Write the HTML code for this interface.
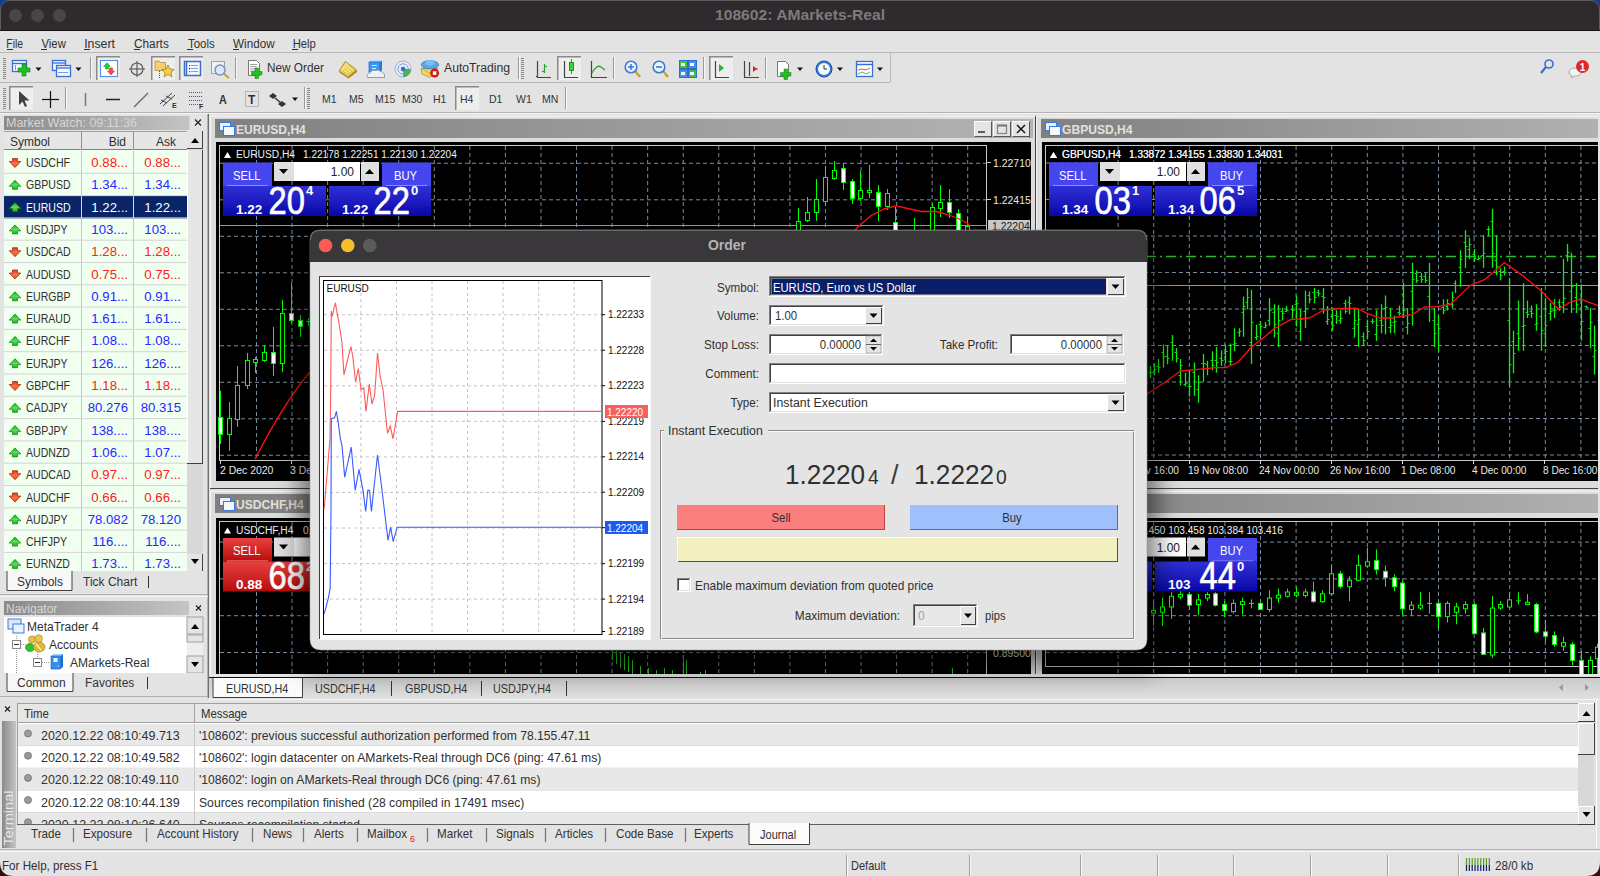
<!DOCTYPE html><html><head><meta charset="utf-8"><style>html,body{margin:0;padding:0;overflow:hidden;background:#e3e3e3}svg{display:block}</style></head><body><svg width="1600" height="876" viewBox="0 0 1600 876" shape-rendering="auto"><defs>
<linearGradient id="gArrD" x1="0" x2="0" y1="0" y2="1"><stop offset="0" stop-color="#e83818"/><stop offset="0.5" stop-color="#ff7040"/><stop offset="1" stop-color="#e85020"/></linearGradient><linearGradient id="gArrU" x1="0" x2="0" y1="0" y2="1"><stop offset="0" stop-color="#20a020"/><stop offset="0.5" stop-color="#58e058"/><stop offset="1" stop-color="#20b020"/></linearGradient>
<filter id="fShadow" x="-10%" y="-10%" width="120%" height="130%"><feGaussianBlur stdDeviation="12"/></filter>
<linearGradient id="gTitle" x1="0" x2="1" y1="0" y2="0"><stop offset="0" stop-color="#808080"/><stop offset="1" stop-color="#b4b4b4"/></linearGradient>
<linearGradient id="gPanelHdr" x1="0" x2="1" y1="0" y2="0"><stop offset="0" stop-color="#8a8a8a"/><stop offset="1" stop-color="#c4c4c4"/></linearGradient>
<linearGradient id="gBlue" x1="0" x2="0" y1="0" y2="1"><stop offset="0" stop-color="#4848f0"/><stop offset="1" stop-color="#1010b8"/></linearGradient>
<linearGradient id="gBlue2" x1="0" x2="0" y1="0" y2="1"><stop offset="0" stop-color="#3030d8"/><stop offset="1" stop-color="#0808a8"/></linearGradient>
<linearGradient id="gRed" x1="0" x2="0" y1="0" y2="1"><stop offset="0" stop-color="#e84040"/><stop offset="1" stop-color="#b80c0c"/></linearGradient>
<linearGradient id="gTabV" x1="0" x2="0" y1="0" y2="1"><stop offset="0" stop-color="#cacaca"/><stop offset="1" stop-color="#e0e0e0"/></linearGradient>
<linearGradient id="gTab" x1="0" x2="1" y1="0" y2="0"><stop offset="0" stop-color="#e4e4e4"/><stop offset="0.5" stop-color="#d0d0d0"/><stop offset="1" stop-color="#e4e4e4"/></linearGradient>
</defs><rect x="0" y="0" width="1600" height="876" fill="#e3e3e3" />
<path d="M0,31 L0,10 Q0,0 10,0 L1590,0 Q1600,0 1600,10 L1600,31 Z" fill="#2e2a2d" />
<path d="M0,0 H12 Q1,1 0,12 Z" fill="#1a3a8a" />
<path d="M1600,0 H1588 Q1599,1 1600,12 Z" fill="#1a3a8a" />
<path d="M0.5,31 L0.5,10 Q0.5,0.5 10,0.5 L1590,0.5 Q1599.5,0.5 1599.5,10 L1599.5,31" fill="none" stroke="#5e5a5c" stroke-width="1"/>
<line x1="0" y1="30.5" x2="1600" y2="30.5" stroke="#121212" stroke-width="1" />
<circle cx="15.5" cy="15.5" r="6.5" fill="#4a4648"/>
<circle cx="37.5" cy="15.5" r="6.5" fill="#4a4648"/>
<circle cx="59.5" cy="15.5" r="6.5" fill="#4a4648"/>
<text x="800" y="20" font-size="15" fill="#7c7a7b" font-family="Liberation Sans" font-weight="bold" text-anchor="middle" textLength="170" lengthAdjust="spacingAndGlyphs" >108602: AMarkets-Real</text>
<rect x="0" y="31" width="1600" height="21" fill="#e3e3e3" />
<line x1="7" y1="49.5" x2="13" y2="49.5" stroke="#303030" stroke-width="1" />
<line x1="41" y1="49.5" x2="47" y2="49.5" stroke="#303030" stroke-width="1" />
<line x1="84" y1="49.5" x2="90" y2="49.5" stroke="#303030" stroke-width="1" />
<line x1="134" y1="49.5" x2="140" y2="49.5" stroke="#303030" stroke-width="1" />
<line x1="187" y1="49.5" x2="193" y2="49.5" stroke="#303030" stroke-width="1" />
<line x1="233" y1="49.5" x2="239" y2="49.5" stroke="#303030" stroke-width="1" />
<line x1="292" y1="49.5" x2="298" y2="49.5" stroke="#303030" stroke-width="1" />
<line x1="0" y1="52.5" x2="1600" y2="52.5" stroke="#b8b8b8" stroke-width="1" />
<rect x="0" y="53" width="1600" height="60" fill="#e3e3e3" />
<line x1="0" y1="82.5" x2="890" y2="82.5" stroke="#b8b8b8" stroke-width="1" />
<line x1="890.5" y1="53" x2="890.5" y2="82" stroke="#b8b8b8" stroke-width="1" />
<line x1="0" y1="112.5" x2="1600" y2="112.5" stroke="#b4b4b4" stroke-width="1" />
<line x1="0" y1="113.5" x2="1600" y2="113.5" stroke="#f4f4f4" stroke-width="1" />
<line x1="3" y1="58.5" x2="6" y2="58.5" stroke="#888" stroke-width="1" />
<line x1="3" y1="60.5" x2="6" y2="60.5" stroke="#888" stroke-width="1" />
<line x1="3" y1="62.5" x2="6" y2="62.5" stroke="#888" stroke-width="1" />
<line x1="3" y1="64.5" x2="6" y2="64.5" stroke="#888" stroke-width="1" />
<line x1="3" y1="66.5" x2="6" y2="66.5" stroke="#888" stroke-width="1" />
<line x1="3" y1="68.5" x2="6" y2="68.5" stroke="#888" stroke-width="1" />
<line x1="3" y1="70.5" x2="6" y2="70.5" stroke="#888" stroke-width="1" />
<line x1="3" y1="72.5" x2="6" y2="72.5" stroke="#888" stroke-width="1" />
<line x1="3" y1="74.5" x2="6" y2="74.5" stroke="#888" stroke-width="1" />
<line x1="3" y1="76.5" x2="6" y2="76.5" stroke="#888" stroke-width="1" />
<line x1="3" y1="78.5" x2="6" y2="78.5" stroke="#888" stroke-width="1" />
<line x1="3" y1="88.5" x2="6" y2="88.5" stroke="#888" stroke-width="1" />
<line x1="3" y1="90.5" x2="6" y2="90.5" stroke="#888" stroke-width="1" />
<line x1="3" y1="92.5" x2="6" y2="92.5" stroke="#888" stroke-width="1" />
<line x1="3" y1="94.5" x2="6" y2="94.5" stroke="#888" stroke-width="1" />
<line x1="3" y1="96.5" x2="6" y2="96.5" stroke="#888" stroke-width="1" />
<line x1="3" y1="98.5" x2="6" y2="98.5" stroke="#888" stroke-width="1" />
<line x1="3" y1="100.5" x2="6" y2="100.5" stroke="#888" stroke-width="1" />
<line x1="3" y1="102.5" x2="6" y2="102.5" stroke="#888" stroke-width="1" />
<line x1="3" y1="104.5" x2="6" y2="104.5" stroke="#888" stroke-width="1" />
<line x1="3" y1="106.5" x2="6" y2="106.5" stroke="#888" stroke-width="1" />
<line x1="3" y1="108.5" x2="6" y2="108.5" stroke="#888" stroke-width="1" />
<line x1="521" y1="58.5" x2="524" y2="58.5" stroke="#888" stroke-width="1" />
<line x1="521" y1="60.5" x2="524" y2="60.5" stroke="#888" stroke-width="1" />
<line x1="521" y1="62.5" x2="524" y2="62.5" stroke="#888" stroke-width="1" />
<line x1="521" y1="64.5" x2="524" y2="64.5" stroke="#888" stroke-width="1" />
<line x1="521" y1="66.5" x2="524" y2="66.5" stroke="#888" stroke-width="1" />
<line x1="521" y1="68.5" x2="524" y2="68.5" stroke="#888" stroke-width="1" />
<line x1="521" y1="70.5" x2="524" y2="70.5" stroke="#888" stroke-width="1" />
<line x1="521" y1="72.5" x2="524" y2="72.5" stroke="#888" stroke-width="1" />
<line x1="521" y1="74.5" x2="524" y2="74.5" stroke="#888" stroke-width="1" />
<line x1="521" y1="76.5" x2="524" y2="76.5" stroke="#888" stroke-width="1" />
<line x1="521" y1="78.5" x2="524" y2="78.5" stroke="#888" stroke-width="1" />
<line x1="307" y1="88.5" x2="310" y2="88.5" stroke="#888" stroke-width="1" />
<line x1="307" y1="90.5" x2="310" y2="90.5" stroke="#888" stroke-width="1" />
<line x1="307" y1="92.5" x2="310" y2="92.5" stroke="#888" stroke-width="1" />
<line x1="307" y1="94.5" x2="310" y2="94.5" stroke="#888" stroke-width="1" />
<line x1="307" y1="96.5" x2="310" y2="96.5" stroke="#888" stroke-width="1" />
<line x1="307" y1="98.5" x2="310" y2="98.5" stroke="#888" stroke-width="1" />
<line x1="307" y1="100.5" x2="310" y2="100.5" stroke="#888" stroke-width="1" />
<line x1="307" y1="102.5" x2="310" y2="102.5" stroke="#888" stroke-width="1" />
<line x1="307" y1="104.5" x2="310" y2="104.5" stroke="#888" stroke-width="1" />
<line x1="307" y1="106.5" x2="310" y2="106.5" stroke="#888" stroke-width="1" />
<line x1="307" y1="108.5" x2="310" y2="108.5" stroke="#888" stroke-width="1" />
<line x1="90.5" y1="57" x2="90.5" y2="79" stroke="#9a9a9a" stroke-width="1" />
<line x1="91.5" y1="57" x2="91.5" y2="79" stroke="#f8f8f8" stroke-width="1" />
<line x1="235.5" y1="57" x2="235.5" y2="79" stroke="#9a9a9a" stroke-width="1" />
<line x1="236.5" y1="57" x2="236.5" y2="79" stroke="#f8f8f8" stroke-width="1" />
<line x1="518.5" y1="57" x2="518.5" y2="79" stroke="#9a9a9a" stroke-width="1" />
<line x1="519.5" y1="57" x2="519.5" y2="79" stroke="#f8f8f8" stroke-width="1" />
<line x1="613.5" y1="57" x2="613.5" y2="79" stroke="#9a9a9a" stroke-width="1" />
<line x1="614.5" y1="57" x2="614.5" y2="79" stroke="#f8f8f8" stroke-width="1" />
<line x1="703.5" y1="57" x2="703.5" y2="79" stroke="#9a9a9a" stroke-width="1" />
<line x1="704.5" y1="57" x2="704.5" y2="79" stroke="#f8f8f8" stroke-width="1" />
<line x1="765.5" y1="57" x2="765.5" y2="79" stroke="#9a9a9a" stroke-width="1" />
<line x1="766.5" y1="57" x2="766.5" y2="79" stroke="#f8f8f8" stroke-width="1" />
<line x1="65.5" y1="87" x2="65.5" y2="109" stroke="#9a9a9a" stroke-width="1" />
<line x1="66.5" y1="87" x2="66.5" y2="109" stroke="#f8f8f8" stroke-width="1" />
<line x1="304.5" y1="87" x2="304.5" y2="109" stroke="#9a9a9a" stroke-width="1" />
<line x1="305.5" y1="87" x2="305.5" y2="109" stroke="#f8f8f8" stroke-width="1" />
<line x1="565.5" y1="87" x2="565.5" y2="109" stroke="#9a9a9a" stroke-width="1" />
<line x1="566.5" y1="87" x2="566.5" y2="109" stroke="#f8f8f8" stroke-width="1" />
<rect x="96" y="56" width="24" height="24" fill="#eeeeee" />
<line x1="96" y1="56.75" x2="120" y2="56.75" stroke="#8a8a8a" stroke-width="1.5" />
<line x1="96.75" y1="56" x2="96.75" y2="80" stroke="#8a8a8a" stroke-width="1.5" />
<rect x="151" y="56" width="24" height="24" fill="#eeeeee" />
<line x1="151" y1="56.75" x2="175" y2="56.75" stroke="#8a8a8a" stroke-width="1.5" />
<line x1="151.75" y1="56" x2="151.75" y2="80" stroke="#8a8a8a" stroke-width="1.5" />
<rect x="179" y="56" width="24" height="24" fill="#eeeeee" />
<line x1="179" y1="56.75" x2="203" y2="56.75" stroke="#8a8a8a" stroke-width="1.5" />
<line x1="179.75" y1="56" x2="179.75" y2="80" stroke="#8a8a8a" stroke-width="1.5" />
<rect x="557" y="56" width="24" height="24" fill="#eeeeee" />
<line x1="557" y1="56.75" x2="581" y2="56.75" stroke="#8a8a8a" stroke-width="1.5" />
<line x1="557.75" y1="56" x2="557.75" y2="80" stroke="#8a8a8a" stroke-width="1.5" />
<rect x="709" y="56" width="24" height="24" fill="#eeeeee" />
<line x1="709" y1="56.75" x2="733" y2="56.75" stroke="#8a8a8a" stroke-width="1.5" />
<line x1="709.75" y1="56" x2="709.75" y2="80" stroke="#8a8a8a" stroke-width="1.5" />
<rect x="9" y="86" width="24" height="24" fill="#eeeeee" />
<line x1="9" y1="86.75" x2="33" y2="86.75" stroke="#8a8a8a" stroke-width="1.5" />
<line x1="9.75" y1="86" x2="9.75" y2="110" stroke="#8a8a8a" stroke-width="1.5" />
<rect x="455" y="86" width="24" height="24" fill="#eeeeee" />
<line x1="455" y1="86.75" x2="479" y2="86.75" stroke="#8a8a8a" stroke-width="1.5" />
<line x1="455.75" y1="86" x2="455.75" y2="110" stroke="#8a8a8a" stroke-width="1.5" />
<text x="267" y="72" font-size="12" fill="#303030" font-family="Liberation Sans" textLength="57" lengthAdjust="spacingAndGlyphs" >New Order</text>
<text x="444" y="72" font-size="12" fill="#303030" font-family="Liberation Sans" textLength="66" lengthAdjust="spacingAndGlyphs" >AutoTrading</text>
<text x="322" y="103" font-size="10.5" fill="#333" font-family="Liberation Sans" >M1</text>
<text x="349" y="103" font-size="10.5" fill="#333" font-family="Liberation Sans" >M5</text>
<text x="375" y="103" font-size="10.5" fill="#333" font-family="Liberation Sans" >M15</text>
<text x="402" y="103" font-size="10.5" fill="#333" font-family="Liberation Sans" >M30</text>
<text x="433" y="103" font-size="10.5" fill="#333" font-family="Liberation Sans" >H1</text>
<text x="460" y="103" font-size="10.5" fill="#333" font-family="Liberation Sans" >H4</text>
<text x="489" y="103" font-size="10.5" fill="#333" font-family="Liberation Sans" >D1</text>
<text x="516" y="103" font-size="10.5" fill="#333" font-family="Liberation Sans" >W1</text>
<text x="542" y="103" font-size="10.5" fill="#333" font-family="Liberation Sans" >MN</text>
<text x="6.3" y="48" font-size="12" fill="#303030" font-family="Liberation Sans" textLength="16.8" lengthAdjust="spacingAndGlyphs" >File</text>
<text x="41.5" y="48" font-size="12" fill="#303030" font-family="Liberation Sans" textLength="24.3" lengthAdjust="spacingAndGlyphs" >View</text>
<text x="84.2" y="48" font-size="12" fill="#303030" font-family="Liberation Sans" textLength="30.8" lengthAdjust="spacingAndGlyphs" >Insert</text>
<text x="134" y="48" font-size="12" fill="#303030" font-family="Liberation Sans" textLength="34.8" lengthAdjust="spacingAndGlyphs" >Charts</text>
<text x="188" y="48" font-size="12" fill="#303030" font-family="Liberation Sans" textLength="26.8" lengthAdjust="spacingAndGlyphs" >Tools</text>
<text x="233" y="48" font-size="12" fill="#303030" font-family="Liberation Sans" textLength="41.6" lengthAdjust="spacingAndGlyphs" >Window</text>
<text x="292.7" y="48" font-size="12" fill="#303030" font-family="Liberation Sans" textLength="23.1" lengthAdjust="spacingAndGlyphs" >Help</text>
<rect x="12.5" y="60.5" width="14" height="11" fill="#f4f8ff" stroke="#3a6ed0" stroke-width="1.3" />
<line x1="13" y1="63.5" x2="26" y2="63.5" stroke="#3a6ed0" stroke-width="1.3" />
<line x1="15.5" y1="65" x2="15.5" y2="70" stroke="#7a9ad8" stroke-width="1" />
<path d="M22,64 h4 v4 h4 v4 h-4 v4 h-4 v-4 h-4 v-4 h4 z" fill="#20c020" stroke="#108010" stroke-width="0.6" />
<path d="M35.5,67.5 h6 l-3,3.5 z" fill="#111" />
<rect x="52.5" y="60.5" width="13" height="10" fill="#f4f8ff" stroke="#3a6ed0" stroke-width="1.3" />
<line x1="53" y1="63" x2="65" y2="63" stroke="#3a6ed0" stroke-width="1.3" />
<rect x="56.5" y="65.5" width="14" height="11" fill="#f4f8ff" stroke="#3a6ed0" stroke-width="1.3" />
<line x1="57" y1="68" x2="70" y2="68" stroke="#3a6ed0" stroke-width="1.3" />
<line x1="58" y1="72.5" x2="68" y2="72.5" stroke="#7a9ad8" stroke-width="1" />
<path d="M75.5,67.5 h6 l-3,3.5 z" fill="#111" />
<rect x="100.5" y="60.5" width="17" height="16" fill="#ffffff" stroke="#4a90e8" stroke-width="1.1" />
<path d="M103.5,66.5 l3.5,-3.8 l3.5,3.8 h-2 v2.5 h-3 v-2.5 z" fill="#30c040" stroke="#109020" stroke-width="0.5" />
<path d="M107.5,71 h2 v-3 h3 v3 h2 l-3.5,4 z" fill="#f05040" stroke="#c02010" stroke-width="0.5" />
<circle cx="137" cy="69" r="6" fill="none" stroke="#555" stroke-width="1.1"/>
<line x1="137" y1="61" x2="137" y2="77" stroke="#555" stroke-width="1.1" />
<line x1="129" y1="69" x2="145" y2="69" stroke="#555" stroke-width="1.1" />
<path d="M155,61 h4 l1.5,1.5 h5 v8 h-10.5 z" fill="#f0d070" stroke="#b09030" stroke-width="0.8" />
<path d="M168,65 l2,4 l4.2,0.5 l-3.2,3 l1,4.3 l-4,-2.3 l-4,2.3 l1,-4.3 l-3.2,-3 l4.2,-0.5 z" fill="#f4d040" stroke="#a08020" stroke-width="0.8" />
<line x1="159.5" y1="71" x2="159.5" y2="78" stroke="#555" stroke-width="1" stroke-dasharray="1,1"/>
<rect x="184.5" y="61.5" width="16" height="14" fill="#f4f8ff" stroke="#3a6ed0" stroke-width="1.5" />
<line x1="186.5" y1="62" x2="186.5" y2="75" stroke="#3a6ed0" stroke-width="1.5" />
<rect x="189" y="65" width="1.2" height="1.2" fill="#d02020" />
<line x1="191" y1="65.5" x2="198" y2="65.5" stroke="#7aa0e0" stroke-width="1" />
<rect x="189" y="68" width="1.2" height="1.2" fill="#222" />
<line x1="191" y1="68.5" x2="198" y2="68.5" stroke="#7aa0e0" stroke-width="1" />
<rect x="189" y="71" width="1.2" height="1.2" fill="#d02020" />
<line x1="191" y1="71.5" x2="198" y2="71.5" stroke="#7aa0e0" stroke-width="1" />
<rect x="211.5" y="61.5" width="13" height="12" fill="#f0f0f0" stroke="#9aa0b0" stroke-width="1" />
<circle cx="220" cy="70" r="5" fill="#dde8ff" stroke="#7a90c0" stroke-width="1.5"/>
<line x1="223.5" y1="73.5" x2="229" y2="78" stroke="#c8a040" stroke-width="2.2" />
<path d="M248.5,60.5 h8 l3,3 v12 h-11 z" fill="#ffffff" stroke="#555" stroke-width="0.8" />
<line x1="250" y1="64.5" x2="257" y2="64.5" stroke="#888" stroke-width="0.8" />
<line x1="250" y1="66.7" x2="257" y2="66.7" stroke="#888" stroke-width="0.8" />
<line x1="250" y1="68.9" x2="257" y2="68.9" stroke="#888" stroke-width="0.8" />
<line x1="250" y1="71.1" x2="257" y2="71.1" stroke="#888" stroke-width="0.8" />
<path d="M255,68 h3.5 v3.5 h3.5 v3.5 h-3.5 v3.5 h-3.5 v-3.5 h-3.5 v-3.5 h3.5 z" fill="#20c020" stroke="#108010" stroke-width="0.5" />
<path d="M339,71 L345.4,61.5 L356.6,70.1 L348,77.3 Z" fill="#e8cc50" stroke="#a07818" stroke-width="0.8" />
<path d="M340.5,70 L346,62.8 L354.5,69.5 L348,75 Z" fill="#f4e27a" />
<line x1="342.0" y1="70.5" x2="349.5" y2="75.5" stroke="#c8a030" stroke-width="0.6" />
<line x1="344.2" y1="68.4" x2="351.1" y2="74.0" stroke="#c8a030" stroke-width="0.6" />
<line x1="346.4" y1="66.3" x2="352.7" y2="72.5" stroke="#c8a030" stroke-width="0.6" />
<line x1="348.6" y1="64.2" x2="354.3" y2="71.0" stroke="#c8a030" stroke-width="0.6" />
<path d="M339,71 L348,77.3 L356.6,70.1 L357,72 L348.5,78.5 L339.5,72.5 Z" fill="#b08020" />
<path d="M369,62 L371,60.4 L382,60.4 L380,62 Z" fill="#9ad0ff" />
<rect x="369" y="62" width="11" height="10" fill="#3a98f0" stroke="#1a60c0" stroke-width="0.7" />
<path d="M380,62 L382,60.4 L382,70 L380,72 Z" fill="#2a78d0" />
<line x1="372" y1="65.5" x2="377" y2="65.5" stroke="#e0f0ff" stroke-width="1" />
<line x1="372" y1="68.5" x2="376" y2="68.5" stroke="#e0f0ff" stroke-width="1" />
<path d="M367.5,77.5 Q366,73.5 370,72.8 Q371.5,69.2 375.5,70.5 Q378.5,68.8 381,71.8 Q385,72 384.5,77.5 Z" fill="#eef2fa" stroke="#7088b0" stroke-width="0.8" />
<circle cx="403.1" cy="69" r="8" fill="#e8eef8" stroke="#9ab0dc" stroke-width="1"/>
<circle cx="403.1" cy="69" r="5.2" fill="none" stroke="#7a98d8" stroke-width="1"/>
<circle cx="403.1" cy="69" r="2.2" fill="#2a70e0"/>
<path d="M403.1,69 L411.1,69 A8,8 0 0,1 403.1,77 Z" fill="#50b050" />
<circle cx="403.1" cy="69" r="2.2" fill="#2a70e0"/>
<path d="M421,68.5 L438,68.5 L437,74 L429.5,77.3 L422,74 Z" fill="#f0d858" stroke="#a08020" stroke-width="0.6" />
<path d="M421,68 L429.5,73 L438,68" fill="none" stroke="#c0a030" stroke-width="0.7" />
<ellipse cx="430" cy="64.8" rx="8.8" ry="4.2" fill="#58a8e8" stroke="#2a70c0" stroke-width="0.6"/>
<ellipse cx="430" cy="62.8" rx="4.5" ry="2.6" fill="#7ac0f4"/>
<circle cx="434.6" cy="73.1" r="4.5" fill="#d81818"/>
<rect x="432.8" y="71.3" width="3.6" height="3.6" fill="#ffffff" />
<path d="M537.5,61 V77.5 H551" fill="none" stroke="#444" stroke-width="1.2" />
<line x1="536" y1="76.5" x2="538" y2="76.5" stroke="#444" stroke-width="1" />
<line x1="544.5" y1="64" x2="544.5" y2="73" stroke="#30a030" stroke-width="1.2" />
<line x1="542" y1="71.5" x2="544.5" y2="71.5" stroke="#30a030" stroke-width="1.2" />
<line x1="544.5" y1="66.5" x2="547" y2="66.5" stroke="#30a030" stroke-width="1.2" />
<path d="M564.5,61 V77.5 H578" fill="none" stroke="#444" stroke-width="1.2" />
<line x1="571.5" y1="59" x2="571.5" y2="74" stroke="#20a020" stroke-width="1" />
<rect x="569.5" y="62.5" width="4" height="8" fill="#40d040" stroke="#108010" stroke-width="0.8" />
<path d="M591.5,61 V77.5 H607" fill="none" stroke="#444" stroke-width="1.2" />
<path d="M592,73 q5,-9 9,-6 l4,3" fill="none" stroke="#30a030" stroke-width="1.3" />
<line x1="635" y1="71" x2="640" y2="77" stroke="#d0a030" stroke-width="2.5" />
<circle cx="631" cy="67" r="5.8" fill="#eaf2ff" stroke="#3a7ad8" stroke-width="1.6"/>
<line x1="628" y1="67" x2="634" y2="67" stroke="#3a7ad8" stroke-width="1.6" />
<line x1="631" y1="64" x2="631" y2="70" stroke="#3a7ad8" stroke-width="1.6" />
<line x1="663" y1="71" x2="668" y2="77" stroke="#d0a030" stroke-width="2.5" />
<circle cx="659" cy="67" r="5.8" fill="#eaf2ff" stroke="#3a7ad8" stroke-width="1.6"/>
<line x1="656" y1="67" x2="662" y2="67" stroke="#3a7ad8" stroke-width="1.6" />
<rect x="679.5" y="60.5" width="8" height="8" fill="#40c040" stroke="#2a6ed0" stroke-width="1" />
<rect x="688.5" y="60.5" width="8" height="8" fill="#4a8ee8" stroke="#2a6ed0" stroke-width="1" />
<rect x="679.5" y="69.5" width="8" height="8" fill="#4a8ee8" stroke="#2a6ed0" stroke-width="1" />
<rect x="688.5" y="69.5" width="8" height="8" fill="#40c040" stroke="#2a6ed0" stroke-width="1" />
<rect x="681" y="63" width="4" height="3" fill="#fff" />
<rect x="690" y="72" width="4" height="3" fill="#fff" />
<rect x="690" y="63" width="4" height="3" fill="#fff" />
<rect x="681" y="72" width="4" height="3" fill="#fff" />
<path d="M715.5,61 V77.5 H729" fill="none" stroke="#444" stroke-width="1.2" />
<path d="M719,64 l5,4 l-5,4 z" fill="#30b030" />
<path d="M744.5,61 V77.5 H759" fill="none" stroke="#444" stroke-width="1.2" />
<line x1="749.5" y1="62" x2="749.5" y2="76" stroke="#444" stroke-width="1.2" />
<path d="M757,69 l-4,-3 v6 z" fill="#e02020" />
<line x1="753" y1="69" x2="758" y2="69" stroke="#e02020" stroke-width="1" />
<path d="M777.5,61.5 h8 l3,3 v12 h-11 z" fill="#ffffff" stroke="#555" stroke-width="0.8" />
<path d="M784,69 h3.5 v3.5 h3.5 v3.5 h-3.5 v3.5 h-3.5 v-3.5 h-3.5 v-3.5 h3.5 z" fill="#20c020" stroke="#108010" stroke-width="0.5" />
<path d="M797,67.5 h6 l-3,3.5 z" fill="#111" />
<circle cx="824" cy="69" r="8" fill="#3a7ad8" stroke="#1a4ab0" stroke-width="1"/>
<circle cx="824" cy="69" r="6" fill="#f4f8ff"/>
<line x1="824" y1="69" x2="824" y2="65" stroke="#333" stroke-width="1" />
<line x1="824" y1="69" x2="827" y2="69" stroke="#333" stroke-width="1" />
<path d="M837,67.5 h6 l-3,3.5 z" fill="#111" />
<rect x="856.5" y="61.5" width="16" height="15" fill="#ffffff" stroke="#3a6ed0" stroke-width="1.3" />
<line x1="857" y1="64.5" x2="872" y2="64.5" stroke="#3a6ed0" stroke-width="1.5" />
<path d="M858,70 l4,-1 l4,1 l4,-2" fill="none" stroke="#c03030" stroke-width="0.8" />
<path d="M858,74 l4,-2 l4,2 l4,-2" fill="none" stroke="#30a030" stroke-width="0.8" />
<path d="M877,67.5 h6 l-3,3.5 z" fill="#111" />
<circle cx="1549" cy="64" r="4" fill="none" stroke="#3a70d0" stroke-width="1.6"/>
<line x1="1546" y1="67" x2="1541" y2="73" stroke="#3a70d0" stroke-width="2.2" />
<path d="M1569,73 q0,-5 6,-5 q6,0 6,4 q0,4 -6,4 l-4,2 l1,-2.5 q-3,-1 -3,-2.5 z" fill="#f4f4f4" stroke="#999" stroke-width="0.8" />
<circle cx="1582.5" cy="66.5" r="6.5" fill="#e02828"/>
<text x="1582.5" y="71" font-size="10" fill="#fff" font-family="Liberation Sans" font-weight="bold" text-anchor="middle" >1</text>
<path d="M19,91 v14 l3.5,-3.5 l2.5,5.5 l2,-1 l-2.5,-5.5 h5 z" fill="#404040" />
<line x1="50.5" y1="91" x2="50.5" y2="108" stroke="#111" stroke-width="1.2" />
<line x1="42" y1="99.5" x2="59" y2="99.5" stroke="#111" stroke-width="1.2" />
<line x1="85.5" y1="93" x2="85.5" y2="106" stroke="#777" stroke-width="1.5" />
<line x1="106" y1="99.5" x2="120" y2="99.5" stroke="#222" stroke-width="1.5" />
<line x1="134" y1="107" x2="148" y2="93" stroke="#666" stroke-width="1.3" />
<path d="M160,104 l12,-11 M163,106 l12,-11 M161,100 l6,3 M166,96 l6,3" fill="none" stroke="#444" stroke-width="1" />
<text x="172" y="108" font-size="7" fill="#333" font-family="Liberation Sans" font-weight="bold" >E</text>
<line x1="189" y1="92.5" x2="203" y2="92.5" stroke="#555" stroke-width="1" stroke-dasharray="1,1"/>
<line x1="189" y1="96.5" x2="203" y2="96.5" stroke="#555" stroke-width="1" stroke-dasharray="1,1"/>
<line x1="189" y1="100.5" x2="203" y2="100.5" stroke="#555" stroke-width="1" stroke-dasharray="1,1"/>
<line x1="189" y1="104.5" x2="203" y2="104.5" stroke="#555" stroke-width="1" stroke-dasharray="1,1"/>
<text x="199" y="109" font-size="7" fill="#333" font-family="Liberation Sans" font-weight="bold" >F</text>
<text transform="translate(219,104) scale(0.9,1)" x="0" y="0" font-size="12" fill="#333" font-family="Liberation Sans" font-weight="bold" >A</text>
<rect x="245.5" y="91.5" width="13" height="15" fill="none" stroke="#888" stroke-width="1" stroke-dasharray="1,1"/>
<text x="248" y="104" font-size="12" fill="#333" font-family="Liberation Sans" font-weight="bold" >T</text>
<path d="M273,93 l4,3 l-4,3 l-4,-3 z" fill="#333" />
<path d="M282,101 l4,3 l-4,3 l-4,-3 z" fill="#333" />
<line x1="275" y1="98" x2="281" y2="103" stroke="#333" stroke-width="1.5" />
<path d="M292,97.5 h6 l-3,3.5 z" fill="#111" />
<line x1="208.5" y1="114" x2="208.5" y2="698" stroke="#707070" stroke-width="1" />
<line x1="207.5" y1="114" x2="207.5" y2="698" stroke="#b0b0b0" stroke-width="1" />
<rect x="4" y="116" width="185.5" height="14" fill="url(#gPanelHdr)" />
<text x="6" y="126.8" font-size="12" fill="#d6d6d6" font-family="Liberation Sans" textLength="131" lengthAdjust="spacingAndGlyphs" >Market Watch: 09:11:36</text>
<path d="M195,119.5 L201,125.5 M201,119.5 L195,125.5" fill="none" stroke="#222" stroke-width="1.2" />
<rect x="4" y="131" width="183" height="440" fill="#f0fff0" />
<rect x="4" y="131" width="183" height="19" fill="#e6e6e6" />
<line x1="4" y1="149.5" x2="187" y2="149.5" stroke="#808080" stroke-width="1" />
<line x1="4" y1="131.5" x2="187" y2="131.5" stroke="#a0a0a0" stroke-width="1" />
<line x1="81.5" y1="132" x2="81.5" y2="571" stroke="#c8c8c8" stroke-width="1" />
<line x1="133.5" y1="132" x2="133.5" y2="571" stroke="#c8c8c8" stroke-width="1" />
<line x1="81.5" y1="132" x2="81.5" y2="149" stroke="#909090" stroke-width="1" />
<line x1="133.5" y1="132" x2="133.5" y2="149" stroke="#909090" stroke-width="1" />
<text x="10" y="146" font-size="12" fill="#303030" font-family="Liberation Sans" >Symbol</text>
<text x="126" y="146" font-size="12" fill="#303030" font-family="Liberation Sans" text-anchor="end" >Bid</text>
<text x="176" y="146" font-size="12" fill="#303030" font-family="Liberation Sans" text-anchor="end" >Ask</text>
<line x1="4" y1="173.3" x2="187" y2="173.3" stroke="#d4d4d4" stroke-width="1" />
<path d="M12.5,158.5 h5 v3 h3.3 l-5.8,6 l-5.8,-6 h3.3 z" fill="url(#gArrD)" stroke="#a01808" stroke-width="0.7" />
<text transform="translate(26,167.0) scale(0.88,1)" x="0" y="0" font-size="12" fill="#303030" font-family="Liberation Sans" >USDCHF</text>
<text transform="translate(128,167.0) scale(1.1,1)" x="0" y="0" font-size="12" fill="#ff2020" font-family="Liberation Sans" text-anchor="end" >0.88...</text>
<text transform="translate(181,167.0) scale(1.1,1)" x="0" y="0" font-size="12" fill="#ff2020" font-family="Liberation Sans" text-anchor="end" >0.88...</text>
<line x1="4" y1="195.60000000000002" x2="187" y2="195.60000000000002" stroke="#d4d4d4" stroke-width="1" />
<path d="M12.5,189.3 h5 v-3 h3.3 l-5.8,-6 l-5.8,6 h3.3 z" fill="url(#gArrU)" stroke="#108010" stroke-width="0.7" />
<text transform="translate(26,189.3) scale(0.88,1)" x="0" y="0" font-size="12" fill="#303030" font-family="Liberation Sans" >GBPUSD</text>
<text transform="translate(128,189.3) scale(1.1,1)" x="0" y="0" font-size="12" fill="#2828ff" font-family="Liberation Sans" text-anchor="end" >1.34...</text>
<text transform="translate(181,189.3) scale(1.1,1)" x="0" y="0" font-size="12" fill="#2828ff" font-family="Liberation Sans" text-anchor="end" >1.34...</text>
<rect x="4" y="196.1" width="183" height="22.3" fill="#0a2468" />
<line x1="4" y1="217.9" x2="187" y2="217.9" stroke="#d4d4d4" stroke-width="1" />
<path d="M12.5,211.6 h5 v-3 h3.3 l-5.8,-6 l-5.8,6 h3.3 z" fill="url(#gArrU)" stroke="#108010" stroke-width="0.7" />
<text transform="translate(26,211.6) scale(0.88,1)" x="0" y="0" font-size="12" fill="#ffffff" font-family="Liberation Sans" >EURUSD</text>
<text transform="translate(128,211.6) scale(1.1,1)" x="0" y="0" font-size="12" fill="#ffffff" font-family="Liberation Sans" text-anchor="end" >1.22...</text>
<text transform="translate(181,211.6) scale(1.1,1)" x="0" y="0" font-size="12" fill="#ffffff" font-family="Liberation Sans" text-anchor="end" >1.22...</text>
<line x1="4" y1="240.20000000000002" x2="187" y2="240.20000000000002" stroke="#d4d4d4" stroke-width="1" />
<path d="M12.5,233.9 h5 v-3 h3.3 l-5.8,-6 l-5.8,6 h3.3 z" fill="url(#gArrU)" stroke="#108010" stroke-width="0.7" />
<text transform="translate(26,233.9) scale(0.88,1)" x="0" y="0" font-size="12" fill="#303030" font-family="Liberation Sans" >USDJPY</text>
<text transform="translate(128,233.9) scale(1.1,1)" x="0" y="0" font-size="12" fill="#2828ff" font-family="Liberation Sans" text-anchor="end" >103....</text>
<text transform="translate(181,233.9) scale(1.1,1)" x="0" y="0" font-size="12" fill="#2828ff" font-family="Liberation Sans" text-anchor="end" >103....</text>
<line x1="4" y1="262.5" x2="187" y2="262.5" stroke="#d4d4d4" stroke-width="1" />
<path d="M12.5,247.7 h5 v3 h3.3 l-5.8,6 l-5.8,-6 h3.3 z" fill="url(#gArrD)" stroke="#a01808" stroke-width="0.7" />
<text transform="translate(26,256.2) scale(0.88,1)" x="0" y="0" font-size="12" fill="#303030" font-family="Liberation Sans" >USDCAD</text>
<text transform="translate(128,256.2) scale(1.1,1)" x="0" y="0" font-size="12" fill="#ff2020" font-family="Liberation Sans" text-anchor="end" >1.28...</text>
<text transform="translate(181,256.2) scale(1.1,1)" x="0" y="0" font-size="12" fill="#ff2020" font-family="Liberation Sans" text-anchor="end" >1.28...</text>
<line x1="4" y1="284.8" x2="187" y2="284.8" stroke="#d4d4d4" stroke-width="1" />
<path d="M12.5,270.0 h5 v3 h3.3 l-5.8,6 l-5.8,-6 h3.3 z" fill="url(#gArrD)" stroke="#a01808" stroke-width="0.7" />
<text transform="translate(26,278.5) scale(0.88,1)" x="0" y="0" font-size="12" fill="#303030" font-family="Liberation Sans" >AUDUSD</text>
<text transform="translate(128,278.5) scale(1.1,1)" x="0" y="0" font-size="12" fill="#ff2020" font-family="Liberation Sans" text-anchor="end" >0.75...</text>
<text transform="translate(181,278.5) scale(1.1,1)" x="0" y="0" font-size="12" fill="#ff2020" font-family="Liberation Sans" text-anchor="end" >0.75...</text>
<line x1="4" y1="307.1" x2="187" y2="307.1" stroke="#d4d4d4" stroke-width="1" />
<path d="M12.5,300.8 h5 v-3 h3.3 l-5.8,-6 l-5.8,6 h3.3 z" fill="url(#gArrU)" stroke="#108010" stroke-width="0.7" />
<text transform="translate(26,300.8) scale(0.88,1)" x="0" y="0" font-size="12" fill="#303030" font-family="Liberation Sans" >EURGBP</text>
<text transform="translate(128,300.8) scale(1.1,1)" x="0" y="0" font-size="12" fill="#2828ff" font-family="Liberation Sans" text-anchor="end" >0.91...</text>
<text transform="translate(181,300.8) scale(1.1,1)" x="0" y="0" font-size="12" fill="#2828ff" font-family="Liberation Sans" text-anchor="end" >0.91...</text>
<line x1="4" y1="329.40000000000003" x2="187" y2="329.40000000000003" stroke="#d4d4d4" stroke-width="1" />
<path d="M12.5,323.1 h5 v-3 h3.3 l-5.8,-6 l-5.8,6 h3.3 z" fill="url(#gArrU)" stroke="#108010" stroke-width="0.7" />
<text transform="translate(26,323.1) scale(0.88,1)" x="0" y="0" font-size="12" fill="#303030" font-family="Liberation Sans" >EURAUD</text>
<text transform="translate(128,323.1) scale(1.1,1)" x="0" y="0" font-size="12" fill="#2828ff" font-family="Liberation Sans" text-anchor="end" >1.61...</text>
<text transform="translate(181,323.1) scale(1.1,1)" x="0" y="0" font-size="12" fill="#2828ff" font-family="Liberation Sans" text-anchor="end" >1.61...</text>
<line x1="4" y1="351.7" x2="187" y2="351.7" stroke="#d4d4d4" stroke-width="1" />
<path d="M12.5,345.4 h5 v-3 h3.3 l-5.8,-6 l-5.8,6 h3.3 z" fill="url(#gArrU)" stroke="#108010" stroke-width="0.7" />
<text transform="translate(26,345.4) scale(0.88,1)" x="0" y="0" font-size="12" fill="#303030" font-family="Liberation Sans" >EURCHF</text>
<text transform="translate(128,345.4) scale(1.1,1)" x="0" y="0" font-size="12" fill="#2828ff" font-family="Liberation Sans" text-anchor="end" >1.08...</text>
<text transform="translate(181,345.4) scale(1.1,1)" x="0" y="0" font-size="12" fill="#2828ff" font-family="Liberation Sans" text-anchor="end" >1.08...</text>
<line x1="4" y1="374.00000000000006" x2="187" y2="374.00000000000006" stroke="#d4d4d4" stroke-width="1" />
<path d="M12.5,367.70000000000005 h5 v-3 h3.3 l-5.8,-6 l-5.8,6 h3.3 z" fill="url(#gArrU)" stroke="#108010" stroke-width="0.7" />
<text transform="translate(26,367.70000000000005) scale(0.88,1)" x="0" y="0" font-size="12" fill="#303030" font-family="Liberation Sans" >EURJPY</text>
<text transform="translate(128,367.70000000000005) scale(1.1,1)" x="0" y="0" font-size="12" fill="#2828ff" font-family="Liberation Sans" text-anchor="end" >126....</text>
<text transform="translate(181,367.70000000000005) scale(1.1,1)" x="0" y="0" font-size="12" fill="#2828ff" font-family="Liberation Sans" text-anchor="end" >126....</text>
<line x1="4" y1="396.3" x2="187" y2="396.3" stroke="#d4d4d4" stroke-width="1" />
<path d="M12.5,381.5 h5 v3 h3.3 l-5.8,6 l-5.8,-6 h3.3 z" fill="url(#gArrD)" stroke="#a01808" stroke-width="0.7" />
<text transform="translate(26,390.0) scale(0.88,1)" x="0" y="0" font-size="12" fill="#303030" font-family="Liberation Sans" >GBPCHF</text>
<text transform="translate(128,390.0) scale(1.1,1)" x="0" y="0" font-size="12" fill="#ff2020" font-family="Liberation Sans" text-anchor="end" >1.18...</text>
<text transform="translate(181,390.0) scale(1.1,1)" x="0" y="0" font-size="12" fill="#ff2020" font-family="Liberation Sans" text-anchor="end" >1.18...</text>
<line x1="4" y1="418.6" x2="187" y2="418.6" stroke="#d4d4d4" stroke-width="1" />
<path d="M12.5,412.3 h5 v-3 h3.3 l-5.8,-6 l-5.8,6 h3.3 z" fill="url(#gArrU)" stroke="#108010" stroke-width="0.7" />
<text transform="translate(26,412.3) scale(0.88,1)" x="0" y="0" font-size="12" fill="#303030" font-family="Liberation Sans" >CADJPY</text>
<text transform="translate(128,412.3) scale(1.1,1)" x="0" y="0" font-size="12" fill="#2828ff" font-family="Liberation Sans" text-anchor="end" >80.276</text>
<text transform="translate(181,412.3) scale(1.1,1)" x="0" y="0" font-size="12" fill="#2828ff" font-family="Liberation Sans" text-anchor="end" >80.315</text>
<line x1="4" y1="440.90000000000003" x2="187" y2="440.90000000000003" stroke="#d4d4d4" stroke-width="1" />
<path d="M12.5,434.6 h5 v-3 h3.3 l-5.8,-6 l-5.8,6 h3.3 z" fill="url(#gArrU)" stroke="#108010" stroke-width="0.7" />
<text transform="translate(26,434.6) scale(0.88,1)" x="0" y="0" font-size="12" fill="#303030" font-family="Liberation Sans" >GBPJPY</text>
<text transform="translate(128,434.6) scale(1.1,1)" x="0" y="0" font-size="12" fill="#2828ff" font-family="Liberation Sans" text-anchor="end" >138....</text>
<text transform="translate(181,434.6) scale(1.1,1)" x="0" y="0" font-size="12" fill="#2828ff" font-family="Liberation Sans" text-anchor="end" >138....</text>
<line x1="4" y1="463.20000000000005" x2="187" y2="463.20000000000005" stroke="#d4d4d4" stroke-width="1" />
<path d="M12.5,456.90000000000003 h5 v-3 h3.3 l-5.8,-6 l-5.8,6 h3.3 z" fill="url(#gArrU)" stroke="#108010" stroke-width="0.7" />
<text transform="translate(26,456.90000000000003) scale(0.88,1)" x="0" y="0" font-size="12" fill="#303030" font-family="Liberation Sans" >AUDNZD</text>
<text transform="translate(128,456.90000000000003) scale(1.1,1)" x="0" y="0" font-size="12" fill="#2828ff" font-family="Liberation Sans" text-anchor="end" >1.06...</text>
<text transform="translate(181,456.90000000000003) scale(1.1,1)" x="0" y="0" font-size="12" fill="#2828ff" font-family="Liberation Sans" text-anchor="end" >1.07...</text>
<line x1="4" y1="485.5" x2="187" y2="485.5" stroke="#d4d4d4" stroke-width="1" />
<path d="M12.5,470.7 h5 v3 h3.3 l-5.8,6 l-5.8,-6 h3.3 z" fill="url(#gArrD)" stroke="#a01808" stroke-width="0.7" />
<text transform="translate(26,479.2) scale(0.88,1)" x="0" y="0" font-size="12" fill="#303030" font-family="Liberation Sans" >AUDCAD</text>
<text transform="translate(128,479.2) scale(1.1,1)" x="0" y="0" font-size="12" fill="#ff2020" font-family="Liberation Sans" text-anchor="end" >0.97...</text>
<text transform="translate(181,479.2) scale(1.1,1)" x="0" y="0" font-size="12" fill="#ff2020" font-family="Liberation Sans" text-anchor="end" >0.97...</text>
<line x1="4" y1="507.8" x2="187" y2="507.8" stroke="#d4d4d4" stroke-width="1" />
<path d="M12.5,493.0 h5 v3 h3.3 l-5.8,6 l-5.8,-6 h3.3 z" fill="url(#gArrD)" stroke="#a01808" stroke-width="0.7" />
<text transform="translate(26,501.5) scale(0.88,1)" x="0" y="0" font-size="12" fill="#303030" font-family="Liberation Sans" >AUDCHF</text>
<text transform="translate(128,501.5) scale(1.1,1)" x="0" y="0" font-size="12" fill="#ff2020" font-family="Liberation Sans" text-anchor="end" >0.66...</text>
<text transform="translate(181,501.5) scale(1.1,1)" x="0" y="0" font-size="12" fill="#ff2020" font-family="Liberation Sans" text-anchor="end" >0.66...</text>
<line x1="4" y1="530.1" x2="187" y2="530.1" stroke="#d4d4d4" stroke-width="1" />
<path d="M12.5,523.8 h5 v-3 h3.3 l-5.8,-6 l-5.8,6 h3.3 z" fill="url(#gArrU)" stroke="#108010" stroke-width="0.7" />
<text transform="translate(26,523.8) scale(0.88,1)" x="0" y="0" font-size="12" fill="#303030" font-family="Liberation Sans" >AUDJPY</text>
<text transform="translate(128,523.8) scale(1.1,1)" x="0" y="0" font-size="12" fill="#2828ff" font-family="Liberation Sans" text-anchor="end" >78.082</text>
<text transform="translate(181,523.8) scale(1.1,1)" x="0" y="0" font-size="12" fill="#2828ff" font-family="Liberation Sans" text-anchor="end" >78.120</text>
<line x1="4" y1="552.4" x2="187" y2="552.4" stroke="#d4d4d4" stroke-width="1" />
<path d="M12.5,546.1 h5 v-3 h3.3 l-5.8,-6 l-5.8,6 h3.3 z" fill="url(#gArrU)" stroke="#108010" stroke-width="0.7" />
<text transform="translate(26,546.1) scale(0.88,1)" x="0" y="0" font-size="12" fill="#303030" font-family="Liberation Sans" >CHFJPY</text>
<text transform="translate(128,546.1) scale(1.1,1)" x="0" y="0" font-size="12" fill="#2828ff" font-family="Liberation Sans" text-anchor="end" >116....</text>
<text transform="translate(181,546.1) scale(1.1,1)" x="0" y="0" font-size="12" fill="#2828ff" font-family="Liberation Sans" text-anchor="end" >116....</text>
<line x1="4" y1="574.7" x2="187" y2="574.7" stroke="#d4d4d4" stroke-width="1" />
<path d="M12.5,568.4000000000001 h5 v-3 h3.3 l-5.8,-6 l-5.8,6 h3.3 z" fill="url(#gArrU)" stroke="#108010" stroke-width="0.7" />
<text transform="translate(26,568.4000000000001) scale(0.88,1)" x="0" y="0" font-size="12" fill="#303030" font-family="Liberation Sans" >EURNZD</text>
<text transform="translate(128,568.4000000000001) scale(1.1,1)" x="0" y="0" font-size="12" fill="#2828ff" font-family="Liberation Sans" text-anchor="end" >1.73...</text>
<text transform="translate(181,568.4000000000001) scale(1.1,1)" x="0" y="0" font-size="12" fill="#2828ff" font-family="Liberation Sans" text-anchor="end" >1.73...</text>
<line x1="81.5" y1="196.1" x2="81.5" y2="218.4" stroke="#d8d8d8" stroke-width="1" />
<line x1="133.5" y1="196.1" x2="133.5" y2="218.4" stroke="#d8d8d8" stroke-width="1" />
<rect x="187" y="131" width="16" height="441" fill="#d8d8d8" />
<rect x="187" y="150" width="16" height="314" fill="#e6e6e6" />
<line x1="202.5" y1="150" x2="202.5" y2="464" stroke="#404040" stroke-width="1" />
<line x1="187" y1="463.5" x2="203" y2="463.5" stroke="#404040" stroke-width="1" />
<line x1="187.5" y1="150" x2="187.5" y2="463" stroke="#ffffff" stroke-width="1" />
<rect x="187" y="131" width="16" height="18" fill="#e4e4e4" />
<line x1="187" y1="148.5" x2="203" y2="148.5" stroke="#404040" stroke-width="1" />
<line x1="202.5" y1="131" x2="202.5" y2="149" stroke="#404040" stroke-width="1" />
<path d="M191,143 l4,-5 l4,5 z" fill="#000" />
<rect x="187" y="554" width="16" height="18" fill="#e4e4e4" />
<line x1="187" y1="571.5" x2="203" y2="571.5" stroke="#404040" stroke-width="1" />
<line x1="202.5" y1="554" x2="202.5" y2="572" stroke="#404040" stroke-width="1" />
<path d="M191,559 l4,5 l4,-5 z" fill="#000" />
<rect x="4" y="571" width="199" height="22" fill="#e3e3e3" />
<path d="M7,571 V590.5 H72 V571" fill="#f8f8f8" stroke="#404040" stroke-width="1" />
<text x="17" y="586" font-size="12" fill="#303030" font-family="Liberation Sans" >Symbols</text>
<text x="83" y="586" font-size="12" fill="#333" font-family="Liberation Sans" >Tick Chart</text>
<line x1="148.5" y1="576" x2="148.5" y2="588" stroke="#333" stroke-width="1" />
<line x1="0" y1="594.5" x2="208" y2="594.5" stroke="#b0b0b0" stroke-width="1" />
<line x1="0" y1="596.5" x2="208" y2="596.5" stroke="#f4f4f4" stroke-width="1" />
<rect x="4" y="601" width="185" height="14" fill="url(#gPanelHdr)" />
<text x="6" y="612.5" font-size="12" fill="#d6d6d6" font-family="Liberation Sans" >Navigator</text>
<path d="M196,605.5 L201,610.5 M201,605.5 L196,610.5" fill="none" stroke="#222" stroke-width="1.2" />
<rect x="4" y="617" width="183" height="56" fill="#ffffff" />
<rect x="187" y="617" width="16" height="56" fill="#eeeeee" />
<rect x="187" y="617" width="16" height="17" fill="#e4e4e4" stroke="#a0a0a0" stroke-width="1" />
<path d="M191,629 l4,-5 l4,5 z" fill="#000" />
<rect x="187" y="656" width="16" height="17" fill="#e4e4e4" stroke="#a0a0a0" stroke-width="1" />
<path d="M191,662 l4,5 l4,-5 z" fill="#000" />
<rect x="187" y="635" width="16" height="7" fill="#e4e4e4" stroke="#a0a0a0" stroke-width="1" />
<text x="27" y="631" font-size="12" fill="#303030" font-family="Liberation Sans" >MetaTrader 4</text>
<text x="49" y="649" font-size="12" fill="#303030" font-family="Liberation Sans" >Accounts</text>
<text x="70" y="667" font-size="12" fill="#303030" font-family="Liberation Sans" >AMarkets-Real</text>
<line x1="16.5" y1="636" x2="16.5" y2="673" stroke="#999" stroke-width="1" stroke-dasharray="1,1"/>
<rect x="12.5" y="640.5" width="8" height="8" fill="#fff" stroke="#888" stroke-width="1" />
<line x1="14" y1="644.5" x2="19" y2="644.5" stroke="#333" stroke-width="1" />
<rect x="33.5" y="658.5" width="8" height="8" fill="#fff" stroke="#888" stroke-width="1" />
<line x1="35" y1="662.5" x2="40" y2="662.5" stroke="#333" stroke-width="1" />
<rect x="8" y="619" width="13" height="10" fill="#dbe8fb" stroke="#3a7ad8" stroke-width="1" />
<rect x="13" y="624" width="11" height="9" fill="#eaf2ff" stroke="#3a7ad8" stroke-width="1" />
<ellipse cx="30" cy="647.5" rx="4.5" ry="4" fill="#30c030" stroke="#108010" stroke-width="0.6"/>
<circle cx="32" cy="639.5" r="3.6" fill="#e8c040" stroke="#a08020" stroke-width="0.6"/>
<ellipse cx="39.2" cy="647" rx="5.8" ry="5" fill="#e0b838" stroke="#a08020" stroke-width="0.6"/>
<circle cx="38.7" cy="638.6" r="3.8" fill="#f0c848" stroke="#a08020" stroke-width="0.6"/>
<line x1="36" y1="644" x2="41" y2="650" stroke="#fff4b0" stroke-width="1.2" />
<path d="M51,656 L53.5,654 L63,654 L60.5,656 Z" fill="#9ad4ff" />
<rect x="51" y="656" width="9.5" height="13" fill="#3090f0" stroke="#1860c0" stroke-width="0.6" />
<path d="M60.5,656 L63,654 L63,667 L60.5,669 Z" fill="#2070d0" />
<rect x="53.5" y="658" width="4" height="4" fill="#e8f4ff" />
<circle cx="58" cy="666" r="0.8" fill="#f0d040"/>
<line x1="21" y1="644.5" x2="26" y2="644.5" stroke="#999" stroke-width="1" stroke-dasharray="1,1"/>
<line x1="42" y1="662.5" x2="50" y2="662.5" stroke="#999" stroke-width="1" stroke-dasharray="1,1"/>
<line x1="37.5" y1="652" x2="37.5" y2="658" stroke="#999" stroke-width="1" stroke-dasharray="1,1"/>
<rect x="4" y="673" width="199" height="20" fill="#e3e3e3" />
<path d="M7,673 V691.5 H73 V673" fill="#f8f8f8" stroke="#404040" stroke-width="1" />
<text x="17" y="687" font-size="12" fill="#303030" font-family="Liberation Sans" >Common</text>
<text x="85" y="687" font-size="12" fill="#333" font-family="Liberation Sans" >Favorites</text>
<line x1="147.5" y1="677" x2="147.5" y2="689" stroke="#333" stroke-width="1" />
<line x1="0" y1="696.5" x2="208" y2="696.5" stroke="#b0b0b0" stroke-width="1" />
<rect x="210" y="116" width="826" height="373" fill="#dcdcdc" />
<line x1="210.5" y1="116" x2="210.5" y2="489" stroke="#f4f4f4" stroke-width="1" />
<line x1="210" y1="116.5" x2="1036" y2="116.5" stroke="#f4f4f4" stroke-width="1" />
<line x1="1035.5" y1="116" x2="1035.5" y2="489" stroke="#404040" stroke-width="1" />
<line x1="210" y1="488.5" x2="1036" y2="488.5" stroke="#404040" stroke-width="1" />
<rect x="215" y="119" width="818" height="19" fill="url(#gTitle)" />
<rect x="219.5" y="122.5" width="11" height="8" fill="#e8f0ff" stroke="#3a78e0" stroke-width="1" />
<rect x="223.5" y="126.5" width="11" height="9" fill="#f4f8ff" stroke="#3a78e0" stroke-width="1" />
<text transform="translate(236,133.5) scale(0.93,1)" x="0" y="0" font-size="13" fill="#e4e0dc" font-family="Liberation Sans" font-weight="bold" >EURUSD,H4</text>
<rect x="974.5" y="121.5" width="17" height="15" fill="#e4e4e4" />
<line x1="974.5" y1="121.5" x2="991.5" y2="121.5" stroke="#fff" stroke-width="1" />
<line x1="974.5" y1="121.5" x2="974.5" y2="136.5" stroke="#fff" stroke-width="1" />
<line x1="991.5" y1="121.5" x2="991.5" y2="137.5" stroke="#555" stroke-width="1" />
<line x1="974.5" y1="136.5" x2="991.5" y2="136.5" stroke="#555" stroke-width="1" />
<rect x="993.5" y="121.5" width="17" height="15" fill="#e4e4e4" />
<line x1="993.5" y1="121.5" x2="1010.5" y2="121.5" stroke="#fff" stroke-width="1" />
<line x1="993.5" y1="121.5" x2="993.5" y2="136.5" stroke="#fff" stroke-width="1" />
<line x1="1010.5" y1="121.5" x2="1010.5" y2="137.5" stroke="#555" stroke-width="1" />
<line x1="993.5" y1="136.5" x2="1010.5" y2="136.5" stroke="#555" stroke-width="1" />
<rect x="1012.5" y="121.5" width="17" height="15" fill="#e4e4e4" />
<line x1="1012.5" y1="121.5" x2="1029.5" y2="121.5" stroke="#fff" stroke-width="1" />
<line x1="1012.5" y1="121.5" x2="1012.5" y2="136.5" stroke="#fff" stroke-width="1" />
<line x1="1029.5" y1="121.5" x2="1029.5" y2="137.5" stroke="#555" stroke-width="1" />
<line x1="1012.5" y1="136.5" x2="1029.5" y2="136.5" stroke="#555" stroke-width="1" />
<rect x="978" y="131" width="7" height="2" fill="#5a5a5a" />
<rect x="997.5" y="125.5" width="9" height="8" fill="none" stroke="#888" stroke-width="1.3" />
<line x1="997" y1="125.5" x2="1007" y2="125.5" stroke="#777" stroke-width="2" />
<path d="M1017,125 L1025,133 M1025,125 L1017,133" fill="none" stroke="#111" stroke-width="1.5" />
<rect x="216" y="142" width="815" height="339" fill="#000" />
<line x1="256.5" y1="146" x2="256.5" y2="460" stroke="#7a8c9e" stroke-width="1" stroke-dasharray="4,3"/>
<line x1="292.06" y1="146" x2="292.06" y2="460" stroke="#7a8c9e" stroke-width="1" stroke-dasharray="4,3"/>
<line x1="327.62" y1="146" x2="327.62" y2="460" stroke="#7a8c9e" stroke-width="1" stroke-dasharray="4,3"/>
<line x1="363.18" y1="146" x2="363.18" y2="460" stroke="#7a8c9e" stroke-width="1" stroke-dasharray="4,3"/>
<line x1="398.74" y1="146" x2="398.74" y2="460" stroke="#7a8c9e" stroke-width="1" stroke-dasharray="4,3"/>
<line x1="434.3" y1="146" x2="434.3" y2="460" stroke="#7a8c9e" stroke-width="1" stroke-dasharray="4,3"/>
<line x1="469.86" y1="146" x2="469.86" y2="460" stroke="#7a8c9e" stroke-width="1" stroke-dasharray="4,3"/>
<line x1="505.42" y1="146" x2="505.42" y2="460" stroke="#7a8c9e" stroke-width="1" stroke-dasharray="4,3"/>
<line x1="540.98" y1="146" x2="540.98" y2="460" stroke="#7a8c9e" stroke-width="1" stroke-dasharray="4,3"/>
<line x1="576.54" y1="146" x2="576.54" y2="460" stroke="#7a8c9e" stroke-width="1" stroke-dasharray="4,3"/>
<line x1="612.1" y1="146" x2="612.1" y2="460" stroke="#7a8c9e" stroke-width="1" stroke-dasharray="4,3"/>
<line x1="647.6600000000001" y1="146" x2="647.6600000000001" y2="460" stroke="#7a8c9e" stroke-width="1" stroke-dasharray="4,3"/>
<line x1="683.22" y1="146" x2="683.22" y2="460" stroke="#7a8c9e" stroke-width="1" stroke-dasharray="4,3"/>
<line x1="718.78" y1="146" x2="718.78" y2="460" stroke="#7a8c9e" stroke-width="1" stroke-dasharray="4,3"/>
<line x1="754.34" y1="146" x2="754.34" y2="460" stroke="#7a8c9e" stroke-width="1" stroke-dasharray="4,3"/>
<line x1="789.9000000000001" y1="146" x2="789.9000000000001" y2="460" stroke="#7a8c9e" stroke-width="1" stroke-dasharray="4,3"/>
<line x1="825.46" y1="146" x2="825.46" y2="460" stroke="#7a8c9e" stroke-width="1" stroke-dasharray="4,3"/>
<line x1="861.02" y1="146" x2="861.02" y2="460" stroke="#7a8c9e" stroke-width="1" stroke-dasharray="4,3"/>
<line x1="896.58" y1="146" x2="896.58" y2="460" stroke="#7a8c9e" stroke-width="1" stroke-dasharray="4,3"/>
<line x1="932.1400000000001" y1="146" x2="932.1400000000001" y2="460" stroke="#7a8c9e" stroke-width="1" stroke-dasharray="4,3"/>
<line x1="967.7" y1="146" x2="967.7" y2="460" stroke="#7a8c9e" stroke-width="1" stroke-dasharray="4,3"/>
<line x1="220" y1="163.3" x2="986" y2="163.3" stroke="#7a8c9e" stroke-width="1" stroke-dasharray="4,3"/>
<line x1="220" y1="199.8" x2="986" y2="199.8" stroke="#7a8c9e" stroke-width="1" stroke-dasharray="4,3"/>
<line x1="220" y1="236.3" x2="986" y2="236.3" stroke="#7a8c9e" stroke-width="1" stroke-dasharray="4,3"/>
<line x1="220" y1="272.8" x2="986" y2="272.8" stroke="#7a8c9e" stroke-width="1" stroke-dasharray="4,3"/>
<line x1="220" y1="309.3" x2="986" y2="309.3" stroke="#7a8c9e" stroke-width="1" stroke-dasharray="4,3"/>
<line x1="220" y1="345.8" x2="986" y2="345.8" stroke="#7a8c9e" stroke-width="1" stroke-dasharray="4,3"/>
<line x1="220" y1="382.3" x2="986" y2="382.3" stroke="#7a8c9e" stroke-width="1" stroke-dasharray="4,3"/>
<line x1="220" y1="418.8" x2="986" y2="418.8" stroke="#7a8c9e" stroke-width="1" stroke-dasharray="4,3"/>
<line x1="220" y1="455.3" x2="986" y2="455.3" stroke="#7a8c9e" stroke-width="1" stroke-dasharray="4,3"/>
<rect x="219.5" y="145.5" width="767" height="315" fill="none" stroke="#c8c8c8" stroke-width="1" />
<line x1="220" y1="225.5" x2="986" y2="225.5" stroke="#8a9aa8" stroke-width="1" />
<line x1="987" y1="162.5" x2="991" y2="162.5" stroke="#ccc" stroke-width="1" />
<text transform="translate(993,167) scale(0.95,1)" x="0" y="0" font-size="11" fill="#e8e8e8" font-family="Liberation Sans" >1.22710</text>
<line x1="987" y1="199.5" x2="991" y2="199.5" stroke="#ccc" stroke-width="1" />
<text transform="translate(993,204) scale(0.95,1)" x="0" y="0" font-size="11" fill="#e8e8e8" font-family="Liberation Sans" >1.22415</text>
<rect x="988" y="220" width="42" height="12" fill="#c8c8c8" />
<text transform="translate(992,230) scale(0.95,1)" x="0" y="0" font-size="11" fill="#202020" font-family="Liberation Sans" >1.22204</text>
<text transform="translate(220,474) scale(0.95,1)" x="0" y="0" font-size="11" fill="#e8e8e8" font-family="Liberation Sans" >2 Dec 2020</text>
<text transform="translate(290,474) scale(0.95,1)" x="0" y="0" font-size="11" fill="#e8e8e8" font-family="Liberation Sans" >3 Dec</text>
<line x1="220.5" y1="460" x2="220.5" y2="464" stroke="#ccc" stroke-width="1" />
<line x1="291.5" y1="460" x2="291.5" y2="464" stroke="#ccc" stroke-width="1" />
<line x1="220.5" y1="391" x2="220.5" y2="444" stroke="#00ff00" stroke-width="1" />
<rect x="218.5" y="417.5" width="4" height="17" fill="#ffffff" stroke="#00ff00" stroke-width="1" />
<line x1="229.5" y1="402" x2="229.5" y2="451" stroke="#00ff00" stroke-width="1" />
<rect x="227.5" y="418.5" width="4" height="16" fill="#000000" stroke="#00ff00" stroke-width="1" />
<line x1="237.5" y1="366" x2="237.5" y2="427" stroke="#00ff00" stroke-width="1" />
<rect x="235.5" y="385.5" width="4" height="34" fill="#000000" stroke="#00ff00" stroke-width="1" />
<line x1="247.5" y1="353" x2="247.5" y2="389" stroke="#00ff00" stroke-width="1" />
<rect x="245.5" y="360.5" width="4" height="25" fill="#000000" stroke="#00ff00" stroke-width="1" />
<line x1="255.5" y1="357" x2="255.5" y2="373" stroke="#00ff00" stroke-width="1" />
<rect x="253.5" y="359.5" width="4" height="3" fill="#000000" stroke="#00ff00" stroke-width="1" />
<line x1="264.5" y1="345" x2="264.5" y2="362" stroke="#00ff00" stroke-width="1" />
<rect x="262.5" y="352.5" width="4" height="8" fill="#000000" stroke="#00ff00" stroke-width="1" />
<line x1="273.5" y1="327" x2="273.5" y2="376" stroke="#00ff00" stroke-width="1" />
<rect x="271.5" y="352.5" width="4" height="11" fill="#ffffff" stroke="#00ff00" stroke-width="1" />
<line x1="282.5" y1="300" x2="282.5" y2="372" stroke="#00ff00" stroke-width="1" />
<rect x="280.5" y="313.5" width="4" height="50" fill="#000000" stroke="#00ff00" stroke-width="1" />
<line x1="291.5" y1="283" x2="291.5" y2="323" stroke="#00ff00" stroke-width="1" />
<rect x="289.5" y="313.5" width="4" height="7" fill="#ffffff" stroke="#00ff00" stroke-width="1" />
<line x1="300.5" y1="315" x2="300.5" y2="337" stroke="#00ff00" stroke-width="1" />
<rect x="298.5" y="320.5" width="4" height="6" fill="#ffffff" stroke="#00ff00" stroke-width="1" />
<line x1="308.5" y1="318" x2="308.5" y2="326" stroke="#00ff00" stroke-width="1" />
<line x1="306" y1="321.5" x2="311" y2="321.5" stroke="#00ff00" stroke-width="1" />
<line x1="798.5" y1="208" x2="798.5" y2="232" stroke="#00ff00" stroke-width="1" />
<rect x="796.5" y="221.5" width="4" height="11" fill="#000000" stroke="#00ff00" stroke-width="1" />
<line x1="807.5" y1="197" x2="807.5" y2="222" stroke="#00ff00" stroke-width="1" />
<rect x="805.5" y="212.5" width="4" height="8" fill="#000000" stroke="#00ff00" stroke-width="1" />
<line x1="816.5" y1="179" x2="816.5" y2="221" stroke="#00ff00" stroke-width="1" />
<rect x="814.5" y="199.5" width="4" height="13" fill="#000000" stroke="#00ff00" stroke-width="1" />
<line x1="825.5" y1="166" x2="825.5" y2="205" stroke="#00ff00" stroke-width="1" />
<rect x="823.5" y="177.5" width="4" height="24" fill="#000000" stroke="#00ff00" stroke-width="1" />
<line x1="834.5" y1="161" x2="834.5" y2="180" stroke="#00ff00" stroke-width="1" />
<rect x="832.5" y="170.5" width="4" height="8" fill="#000000" stroke="#00ff00" stroke-width="1" />
<line x1="843.5" y1="163" x2="843.5" y2="190" stroke="#00ff00" stroke-width="1" />
<rect x="841.5" y="168.5" width="4" height="14" fill="#ffffff" stroke="#00ff00" stroke-width="1" />
<line x1="852.5" y1="179" x2="852.5" y2="204" stroke="#00ff00" stroke-width="1" />
<rect x="850.5" y="181.5" width="4" height="17" fill="#ffffff" stroke="#00ff00" stroke-width="1" />
<line x1="860.5" y1="171" x2="860.5" y2="201" stroke="#00ff00" stroke-width="1" />
<rect x="858.5" y="190.5" width="4" height="8" fill="#000000" stroke="#00ff00" stroke-width="1" />
<line x1="869.5" y1="165" x2="869.5" y2="198" stroke="#00ff00" stroke-width="1" />
<rect x="867.5" y="190.5" width="4" height="2" fill="#000000" stroke="#00ff00" stroke-width="1" />
<line x1="878.5" y1="185" x2="878.5" y2="221" stroke="#00ff00" stroke-width="1" />
<rect x="876.5" y="192.5" width="4" height="14" fill="#ffffff" stroke="#00ff00" stroke-width="1" />
<line x1="887.5" y1="189" x2="887.5" y2="210" stroke="#00ff00" stroke-width="1" />
<rect x="885.5" y="193.5" width="4" height="13" fill="#000000" stroke="#00ff00" stroke-width="1" />
<line x1="895.5" y1="207" x2="895.5" y2="232" stroke="#00ff00" stroke-width="1" />
<rect x="893.5" y="222.5" width="4" height="10" fill="#ffffff" stroke="#00ff00" stroke-width="1" />
<line x1="914.5" y1="218" x2="914.5" y2="232" stroke="#00ff00" stroke-width="1" />
<line x1="912" y1="232.5" x2="917" y2="232.5" stroke="#00ff00" stroke-width="1" />
<line x1="932.5" y1="203" x2="932.5" y2="232" stroke="#00ff00" stroke-width="1" />
<rect x="930.5" y="207.5" width="4" height="25" fill="#000000" stroke="#00ff00" stroke-width="1" />
<line x1="940.5" y1="185" x2="940.5" y2="217" stroke="#00ff00" stroke-width="1" />
<rect x="938.5" y="202.5" width="4" height="6" fill="#000000" stroke="#00ff00" stroke-width="1" />
<line x1="949.5" y1="189" x2="949.5" y2="218" stroke="#00ff00" stroke-width="1" />
<rect x="947.5" y="202.5" width="4" height="10" fill="#ffffff" stroke="#00ff00" stroke-width="1" />
<line x1="958.5" y1="209" x2="958.5" y2="232" stroke="#00ff00" stroke-width="1" />
<rect x="956.5" y="213.5" width="4" height="19" fill="#ffffff" stroke="#00ff00" stroke-width="1" />
<line x1="967.5" y1="217" x2="967.5" y2="232" stroke="#00ff00" stroke-width="1" />
<rect x="965.5" y="226.5" width="4" height="4" fill="#000000" stroke="#00ff00" stroke-width="1" />
<path d="M255,459 C270,430 290,395 310,372" fill="none" stroke="#ff1010" stroke-width="1.3" />
<polyline points="853,232 856.4,228.6 871,215.6 884,209 896.2,205.8 910,209 921.4,211.5 936,211.5 945.8,214 957,218 966.9,223 970,226" fill="none" stroke="#ff1010" stroke-width="1.3" stroke-linejoin="round"/>
<path d="M224,158 l3.5,-6 l3.5,6 z" fill="#fff" />
<text transform="translate(236,158) scale(0.93,1)" x="0" y="0" font-size="11" fill="#f0f0f0" font-family="Liberation Sans" >EURUSD,H4</text>
<text transform="translate(303,158) scale(0.915,1)" x="0" y="0" font-size="11" fill="#f0f0f0" font-family="Liberation Sans" >1.22178 1.22251 1.22130 1.22204</text>
<rect x="223" y="162.5" width="49" height="23.5" fill="#4646ee" />
<line x1="227" y1="185.5" x2="268" y2="185.5" stroke="#8a8aff" stroke-width="1" />
<text transform="translate(233,179.5) scale(0.9,1)" x="0" y="0" font-size="12.5" fill="#fff" font-family="Liberation Sans" >SELL</text>
<rect x="274" y="162" width="20" height="19" fill="#e0e0e0" />
<path d="M279,169 h9 l-4.5,5 z" fill="#000" />
<rect x="294" y="162" width="66" height="19" fill="#ffffff" />
<text x="354" y="176" font-size="12" fill="#222" font-family="Liberation Sans" text-anchor="end" >1.00</text>
<rect x="361" y="162" width="18" height="19" fill="#e0e0e0" />
<path d="M365,174 h9 l-4.5,-5 z" fill="#000" />
<rect x="382" y="162.5" width="49" height="23.5" fill="#4646ee" />
<line x1="386" y1="185.5" x2="427" y2="185.5" stroke="#8a8aff" stroke-width="1" />
<text transform="translate(394,179.5) scale(0.9,1)" x="0" y="0" font-size="12.5" fill="#fff" font-family="Liberation Sans" >BUY</text>
<rect x="223" y="186" width="103" height="30" fill="url(#gBlue2)" />
<rect x="329" y="186" width="102" height="30" fill="url(#gBlue2)" />
<text transform="translate(236,213.5) scale(1.04,1)" x="0" y="0" font-size="13" fill="#fff" font-family="Liberation Sans" font-weight="bold" >1.22</text>
<text transform="translate(268.5,213.8) scale(0.86,1)" x="0" y="0" font-size="38" fill="#fff" font-family="Liberation Sans" stroke="#fff" stroke-width="0.7">20</text>
<text x="306" y="195" font-size="13" fill="#fff" font-family="Liberation Sans" font-weight="bold" >4</text>
<text transform="translate(342,213.5) scale(1.04,1)" x="0" y="0" font-size="13" fill="#fff" font-family="Liberation Sans" font-weight="bold" >1.22</text>
<text transform="translate(373.5,213.8) scale(0.86,1)" x="0" y="0" font-size="38" fill="#fff" font-family="Liberation Sans" stroke="#fff" stroke-width="0.7">22</text>
<text x="411" y="195" font-size="13" fill="#fff" font-family="Liberation Sans" font-weight="bold" >0</text>
<rect x="1036" y="116" width="604" height="373" fill="#dcdcdc" />
<line x1="1036.5" y1="116" x2="1036.5" y2="489" stroke="#f4f4f4" stroke-width="1" />
<line x1="1036" y1="116.5" x2="1640" y2="116.5" stroke="#f4f4f4" stroke-width="1" />
<line x1="1639.5" y1="116" x2="1639.5" y2="489" stroke="#404040" stroke-width="1" />
<line x1="1036" y1="488.5" x2="1640" y2="488.5" stroke="#404040" stroke-width="1" />
<rect x="1041" y="119" width="596" height="19" fill="url(#gTitle)" />
<rect x="1045.5" y="122.5" width="11" height="8" fill="#e8f0ff" stroke="#3a78e0" stroke-width="1" />
<rect x="1049.5" y="126.5" width="11" height="9" fill="#f4f8ff" stroke="#3a78e0" stroke-width="1" />
<text transform="translate(1062,133.5) scale(0.93,1)" x="0" y="0" font-size="13" fill="#e4e0dc" font-family="Liberation Sans" font-weight="bold" >GBPUSD,H4</text>
<rect x="1042" y="142" width="600" height="339" fill="#000" />
<line x1="1118.1" y1="146" x2="1118.1" y2="460" stroke="#7a8c9e" stroke-width="1" stroke-dasharray="4,3"/>
<line x1="1153.6999999999998" y1="146" x2="1153.6999999999998" y2="460" stroke="#7a8c9e" stroke-width="1" stroke-dasharray="4,3"/>
<line x1="1189.3" y1="146" x2="1189.3" y2="460" stroke="#7a8c9e" stroke-width="1" stroke-dasharray="4,3"/>
<line x1="1224.8999999999999" y1="146" x2="1224.8999999999999" y2="460" stroke="#7a8c9e" stroke-width="1" stroke-dasharray="4,3"/>
<line x1="1260.5" y1="146" x2="1260.5" y2="460" stroke="#7a8c9e" stroke-width="1" stroke-dasharray="4,3"/>
<line x1="1296.1" y1="146" x2="1296.1" y2="460" stroke="#7a8c9e" stroke-width="1" stroke-dasharray="4,3"/>
<line x1="1331.6999999999998" y1="146" x2="1331.6999999999998" y2="460" stroke="#7a8c9e" stroke-width="1" stroke-dasharray="4,3"/>
<line x1="1367.3" y1="146" x2="1367.3" y2="460" stroke="#7a8c9e" stroke-width="1" stroke-dasharray="4,3"/>
<line x1="1402.8999999999999" y1="146" x2="1402.8999999999999" y2="460" stroke="#7a8c9e" stroke-width="1" stroke-dasharray="4,3"/>
<line x1="1438.5" y1="146" x2="1438.5" y2="460" stroke="#7a8c9e" stroke-width="1" stroke-dasharray="4,3"/>
<line x1="1474.1" y1="146" x2="1474.1" y2="460" stroke="#7a8c9e" stroke-width="1" stroke-dasharray="4,3"/>
<line x1="1509.6999999999998" y1="146" x2="1509.6999999999998" y2="460" stroke="#7a8c9e" stroke-width="1" stroke-dasharray="4,3"/>
<line x1="1545.3" y1="146" x2="1545.3" y2="460" stroke="#7a8c9e" stroke-width="1" stroke-dasharray="4,3"/>
<line x1="1580.8999999999999" y1="146" x2="1580.8999999999999" y2="460" stroke="#7a8c9e" stroke-width="1" stroke-dasharray="4,3"/>
<line x1="1616.5" y1="146" x2="1616.5" y2="460" stroke="#7a8c9e" stroke-width="1" stroke-dasharray="4,3"/>
<line x1="1046" y1="163.0" x2="1600" y2="163.0" stroke="#7a8c9e" stroke-width="1" stroke-dasharray="4,3"/>
<line x1="1046" y1="199.5" x2="1600" y2="199.5" stroke="#7a8c9e" stroke-width="1" stroke-dasharray="4,3"/>
<line x1="1046" y1="236.0" x2="1600" y2="236.0" stroke="#7a8c9e" stroke-width="1" stroke-dasharray="4,3"/>
<line x1="1046" y1="272.5" x2="1600" y2="272.5" stroke="#7a8c9e" stroke-width="1" stroke-dasharray="4,3"/>
<line x1="1046" y1="309.0" x2="1600" y2="309.0" stroke="#7a8c9e" stroke-width="1" stroke-dasharray="4,3"/>
<line x1="1046" y1="345.5" x2="1600" y2="345.5" stroke="#7a8c9e" stroke-width="1" stroke-dasharray="4,3"/>
<line x1="1046" y1="382.0" x2="1600" y2="382.0" stroke="#7a8c9e" stroke-width="1" stroke-dasharray="4,3"/>
<line x1="1046" y1="418.5" x2="1600" y2="418.5" stroke="#7a8c9e" stroke-width="1" stroke-dasharray="4,3"/>
<line x1="1046" y1="455.0" x2="1600" y2="455.0" stroke="#7a8c9e" stroke-width="1" stroke-dasharray="4,3"/>
<rect x="1045.5" y="145.5" width="600" height="315" fill="none" stroke="#c8c8c8" stroke-width="1" />
<line x1="1046" y1="256.5" x2="1600" y2="256.5" stroke="#20c020" stroke-width="1.3" stroke-dasharray="10,4,2,4"/>
<line x1="1046" y1="285.5" x2="1600" y2="285.5" stroke="#8898a8" stroke-width="1.2" />
<path d="M1050,158 l3.5,-6 l3.5,6 z" fill="#fff" />
<text transform="translate(1062,158) scale(0.93,1)" x="0" y="0" font-size="11" fill="#f0f0f0" font-family="Liberation Sans" >GBPUSD,H4</text>
<text transform="translate(1129,158) scale(0.915,1)" x="0" y="0" font-size="11" fill="#f0f0f0" font-family="Liberation Sans" >1.33872 1.34155 1.33830 1.34031</text>
<rect x="1049" y="162.5" width="49" height="23.5" fill="#4646ee" />
<line x1="1053" y1="185.5" x2="1094" y2="185.5" stroke="#8a8aff" stroke-width="1" />
<text transform="translate(1059,179.5) scale(0.9,1)" x="0" y="0" font-size="12.5" fill="#fff" font-family="Liberation Sans" >SELL</text>
<rect x="1100" y="162" width="20" height="19" fill="#e0e0e0" />
<path d="M1105,169 h9 l-4.5,5 z" fill="#000" />
<rect x="1120" y="162" width="66" height="19" fill="#ffffff" />
<text x="1180" y="176" font-size="12" fill="#222" font-family="Liberation Sans" text-anchor="end" >1.00</text>
<rect x="1187" y="162" width="18" height="19" fill="#e0e0e0" />
<path d="M1191,174 h9 l-4.5,-5 z" fill="#000" />
<rect x="1208" y="162.5" width="49" height="23.5" fill="#4646ee" />
<line x1="1212" y1="185.5" x2="1253" y2="185.5" stroke="#8a8aff" stroke-width="1" />
<text transform="translate(1220,179.5) scale(0.9,1)" x="0" y="0" font-size="12.5" fill="#fff" font-family="Liberation Sans" >BUY</text>
<rect x="1049" y="186" width="103" height="30" fill="url(#gBlue2)" />
<rect x="1155" y="186" width="102" height="30" fill="url(#gBlue2)" />
<text transform="translate(1062,213.5) scale(1.04,1)" x="0" y="0" font-size="13" fill="#fff" font-family="Liberation Sans" font-weight="bold" >1.34</text>
<text transform="translate(1094.5,213.8) scale(0.86,1)" x="0" y="0" font-size="38" fill="#fff" font-family="Liberation Sans" stroke="#fff" stroke-width="0.7">03</text>
<text x="1132" y="195" font-size="13" fill="#fff" font-family="Liberation Sans" font-weight="bold" >1</text>
<text transform="translate(1168,213.5) scale(1.04,1)" x="0" y="0" font-size="13" fill="#fff" font-family="Liberation Sans" font-weight="bold" >1.34</text>
<text transform="translate(1199.5,213.8) scale(0.86,1)" x="0" y="0" font-size="38" fill="#fff" font-family="Liberation Sans" stroke="#fff" stroke-width="0.7">06</text>
<text x="1237" y="195" font-size="13" fill="#fff" font-family="Liberation Sans" font-weight="bold" >5</text>
<text transform="translate(1179,474) scale(0.92,1)" x="0" y="0" font-size="11" fill="#e8e8e8" font-family="Liberation Sans" text-anchor="end" >17 Nov 16:00</text>
<text transform="translate(1188,474) scale(0.92,1)" x="0" y="0" font-size="11" fill="#e8e8e8" font-family="Liberation Sans" >19 Nov 08:00</text>
<line x1="1189.5" y1="460" x2="1189.5" y2="464" stroke="#ddd" stroke-width="1" />
<text transform="translate(1259,474) scale(0.92,1)" x="0" y="0" font-size="11" fill="#e8e8e8" font-family="Liberation Sans" >24 Nov 00:00</text>
<line x1="1260.5" y1="460" x2="1260.5" y2="464" stroke="#ddd" stroke-width="1" />
<text transform="translate(1330,474) scale(0.92,1)" x="0" y="0" font-size="11" fill="#e8e8e8" font-family="Liberation Sans" >26 Nov 16:00</text>
<line x1="1331.5" y1="460" x2="1331.5" y2="464" stroke="#ddd" stroke-width="1" />
<text transform="translate(1401,474) scale(0.92,1)" x="0" y="0" font-size="11" fill="#e8e8e8" font-family="Liberation Sans" >1 Dec 08:00</text>
<line x1="1402.5" y1="460" x2="1402.5" y2="464" stroke="#ddd" stroke-width="1" />
<text transform="translate(1472,474) scale(0.92,1)" x="0" y="0" font-size="11" fill="#e8e8e8" font-family="Liberation Sans" >4 Dec 00:00</text>
<line x1="1473.5" y1="460" x2="1473.5" y2="464" stroke="#ddd" stroke-width="1" />
<text transform="translate(1543,474) scale(0.92,1)" x="0" y="0" font-size="11" fill="#e8e8e8" font-family="Liberation Sans" >8 Dec 16:00</text>
<line x1="1544.5" y1="460" x2="1544.5" y2="464" stroke="#ddd" stroke-width="1" />
<line x1="1150.5" y1="365.8904109589041" x2="1150.5" y2="377.8767123287671" stroke="#10f010" stroke-width="1.3" />
<line x1="1148.5" y1="372.5" x2="1150.5" y2="372.5" stroke="#00e800" stroke-width="1" />
<line x1="1150.5" y1="372.5" x2="1152.5" y2="372.5" stroke="#00e800" stroke-width="1" />
<line x1="1154.5" y1="363.32191780821915" x2="1154.5" y2="375.3082191780822" stroke="#10f010" stroke-width="1.3" />
<line x1="1152.5" y1="372.5" x2="1154.5" y2="372.5" stroke="#00e800" stroke-width="1" />
<line x1="1154.5" y1="369.5" x2="1156.5" y2="369.5" stroke="#00e800" stroke-width="1" />
<line x1="1158.5" y1="359.04109589041093" x2="1158.5" y2="372.7397260273973" stroke="#10f010" stroke-width="1.3" />
<line x1="1156.5" y1="366.5" x2="1158.5" y2="366.5" stroke="#00e800" stroke-width="1" />
<line x1="1158.5" y1="367.5" x2="1160.5" y2="367.5" stroke="#00e800" stroke-width="1" />
<line x1="1163.5" y1="344.486301369863" x2="1163.5" y2="367.6027397260274" stroke="#10f010" stroke-width="1.3" />
<line x1="1161.5" y1="352.5" x2="1163.5" y2="352.5" stroke="#00e800" stroke-width="1" />
<line x1="1163.5" y1="356.5" x2="1165.5" y2="356.5" stroke="#00e800" stroke-width="1" />
<line x1="1167.5" y1="345.3424657534247" x2="1167.5" y2="364.17808219178085" stroke="#10f010" stroke-width="1.3" />
<line x1="1165.5" y1="356.5" x2="1167.5" y2="356.5" stroke="#00e800" stroke-width="1" />
<line x1="1167.5" y1="358.5" x2="1169.5" y2="358.5" stroke="#00e800" stroke-width="1" />
<line x1="1172.5" y1="335.06849315068496" x2="1172.5" y2="360.75342465753425" stroke="#10f010" stroke-width="1.3" />
<line x1="1170.5" y1="342.5" x2="1172.5" y2="342.5" stroke="#00e800" stroke-width="1" />
<line x1="1172.5" y1="345.5" x2="1174.5" y2="345.5" stroke="#00e800" stroke-width="1" />
<line x1="1176.5" y1="347.9109589041096" x2="1176.5" y2="362.4657534246575" stroke="#10f010" stroke-width="1.3" />
<line x1="1174.5" y1="352.5" x2="1176.5" y2="352.5" stroke="#00e800" stroke-width="1" />
<line x1="1176.5" y1="358.5" x2="1178.5" y2="358.5" stroke="#00e800" stroke-width="1" />
<line x1="1180.5" y1="359.04109589041093" x2="1180.5" y2="385.5821917808219" stroke="#10f010" stroke-width="1.3" />
<line x1="1178.5" y1="375.5" x2="1180.5" y2="375.5" stroke="#00e800" stroke-width="1" />
<line x1="1180.5" y1="365.5" x2="1182.5" y2="365.5" stroke="#00e800" stroke-width="1" />
<line x1="1185.5" y1="372.7397260273973" x2="1185.5" y2="386.43835616438355" stroke="#10f010" stroke-width="1.3" />
<line x1="1183.5" y1="384.5" x2="1185.5" y2="384.5" stroke="#00e800" stroke-width="1" />
<line x1="1185.5" y1="383.5" x2="1187.5" y2="383.5" stroke="#00e800" stroke-width="1" />
<line x1="1189.5" y1="371.027397260274" x2="1189.5" y2="396.71232876712327" stroke="#10f010" stroke-width="1.3" />
<line x1="1187.5" y1="386.5" x2="1189.5" y2="386.5" stroke="#00e800" stroke-width="1" />
<line x1="1189.5" y1="386.5" x2="1191.5" y2="386.5" stroke="#00e800" stroke-width="1" />
<line x1="1194.5" y1="362.4657534246575" x2="1194.5" y2="395.85616438356163" stroke="#10f010" stroke-width="1.3" />
<line x1="1192.5" y1="372.5" x2="1194.5" y2="372.5" stroke="#00e800" stroke-width="1" />
<line x1="1194.5" y1="369.5" x2="1196.5" y2="369.5" stroke="#00e800" stroke-width="1" />
<line x1="1198.5" y1="375.3082191780822" x2="1198.5" y2="402.70547945205476" stroke="#10f010" stroke-width="1.3" />
<line x1="1196.5" y1="389.5" x2="1198.5" y2="389.5" stroke="#00e800" stroke-width="1" />
<line x1="1198.5" y1="382.5" x2="1200.5" y2="382.5" stroke="#00e800" stroke-width="1" />
<line x1="1203.5" y1="353.9041095890411" x2="1203.5" y2="381.3013698630137" stroke="#10f010" stroke-width="1.3" />
<line x1="1201.5" y1="363.5" x2="1203.5" y2="363.5" stroke="#00e800" stroke-width="1" />
<line x1="1203.5" y1="363.5" x2="1205.5" y2="363.5" stroke="#00e800" stroke-width="1" />
<line x1="1207.5" y1="360.75342465753425" x2="1207.5" y2="375.3082191780822" stroke="#10f010" stroke-width="1.3" />
<line x1="1205.5" y1="364.5" x2="1207.5" y2="364.5" stroke="#00e800" stroke-width="1" />
<line x1="1207.5" y1="368.5" x2="1209.5" y2="368.5" stroke="#00e800" stroke-width="1" />
<line x1="1212.5" y1="351.33561643835617" x2="1212.5" y2="370.17123287671234" stroke="#10f010" stroke-width="1.3" />
<line x1="1210.5" y1="360.5" x2="1212.5" y2="360.5" stroke="#00e800" stroke-width="1" />
<line x1="1212.5" y1="365.5" x2="1214.5" y2="365.5" stroke="#00e800" stroke-width="1" />
<line x1="1216.5" y1="347.05479452054794" x2="1216.5" y2="372.7397260273973" stroke="#10f010" stroke-width="1.3" />
<line x1="1214.5" y1="360.5" x2="1216.5" y2="360.5" stroke="#00e800" stroke-width="1" />
<line x1="1216.5" y1="362.5" x2="1218.5" y2="362.5" stroke="#00e800" stroke-width="1" />
<line x1="1221.5" y1="350.47945205479454" x2="1221.5" y2="365.8904109589041" stroke="#10f010" stroke-width="1.3" />
<line x1="1219.5" y1="358.5" x2="1221.5" y2="358.5" stroke="#00e800" stroke-width="1" />
<line x1="1221.5" y1="360.5" x2="1223.5" y2="360.5" stroke="#00e800" stroke-width="1" />
<line x1="1225.5" y1="344.486301369863" x2="1225.5" y2="363.32191780821915" stroke="#10f010" stroke-width="1.3" />
<line x1="1223.5" y1="353.5" x2="1225.5" y2="353.5" stroke="#00e800" stroke-width="1" />
<line x1="1225.5" y1="351.5" x2="1227.5" y2="351.5" stroke="#00e800" stroke-width="1" />
<line x1="1230.5" y1="343.63013698630135" x2="1230.5" y2="365.0342465753425" stroke="#10f010" stroke-width="1.3" />
<line x1="1228.5" y1="361.5" x2="1230.5" y2="361.5" stroke="#00e800" stroke-width="1" />
<line x1="1230.5" y1="361.5" x2="1232.5" y2="361.5" stroke="#00e800" stroke-width="1" />
<line x1="1234.5" y1="328.2191780821918" x2="1234.5" y2="351.33561643835617" stroke="#10f010" stroke-width="1.3" />
<line x1="1232.5" y1="344.5" x2="1234.5" y2="344.5" stroke="#00e800" stroke-width="1" />
<line x1="1234.5" y1="343.5" x2="1236.5" y2="343.5" stroke="#00e800" stroke-width="1" />
<line x1="1239.5" y1="328.2191780821918" x2="1239.5" y2="336.7808219178082" stroke="#10f010" stroke-width="1.3" />
<line x1="1237.5" y1="332.5" x2="1239.5" y2="332.5" stroke="#00e800" stroke-width="1" />
<line x1="1239.5" y1="331.5" x2="1241.5" y2="331.5" stroke="#00e800" stroke-width="1" />
<line x1="1243.5" y1="296.541095890411" x2="1243.5" y2="336.7808219178082" stroke="#10f010" stroke-width="1.3" />
<line x1="1241.5" y1="312.5" x2="1243.5" y2="312.5" stroke="#00e800" stroke-width="1" />
<line x1="1243.5" y1="306.5" x2="1245.5" y2="306.5" stroke="#00e800" stroke-width="1" />
<line x1="1247.5" y1="287.97945205479454" x2="1247.5" y2="309.3835616438356" stroke="#10f010" stroke-width="1.3" />
<line x1="1245.5" y1="302.5" x2="1247.5" y2="302.5" stroke="#00e800" stroke-width="1" />
<line x1="1247.5" y1="297.5" x2="1249.5" y2="297.5" stroke="#00e800" stroke-width="1" />
<line x1="1251.5" y1="289.6917808219178" x2="1251.5" y2="364.17808219178085" stroke="#10f010" stroke-width="1.3" />
<line x1="1249.5" y1="342.5" x2="1251.5" y2="342.5" stroke="#00e800" stroke-width="1" />
<line x1="1251.5" y1="322.5" x2="1253.5" y2="322.5" stroke="#00e800" stroke-width="1" />
<line x1="1256.5" y1="324.7945205479452" x2="1256.5" y2="340.2054794520548" stroke="#10f010" stroke-width="1.3" />
<line x1="1254.5" y1="337.5" x2="1256.5" y2="337.5" stroke="#00e800" stroke-width="1" />
<line x1="1256.5" y1="336.5" x2="1258.5" y2="336.5" stroke="#00e800" stroke-width="1" />
<line x1="1260.5" y1="321.36986301369865" x2="1260.5" y2="335.06849315068496" stroke="#10f010" stroke-width="1.3" />
<line x1="1258.5" y1="324.5" x2="1260.5" y2="324.5" stroke="#00e800" stroke-width="1" />
<line x1="1260.5" y1="326.5" x2="1262.5" y2="326.5" stroke="#00e800" stroke-width="1" />
<line x1="1265.5" y1="322.2260273972603" x2="1265.5" y2="328.2191780821918" stroke="#10f010" stroke-width="1.3" />
<line x1="1263.5" y1="327.5" x2="1265.5" y2="327.5" stroke="#00e800" stroke-width="1" />
<line x1="1265.5" y1="325.5" x2="1267.5" y2="325.5" stroke="#00e800" stroke-width="1" />
<line x1="1269.5" y1="298.2191780821918" x2="1269.5" y2="325.6164383561644" stroke="#10f010" stroke-width="1.3" />
<line x1="1267.5" y1="320.5" x2="1269.5" y2="320.5" stroke="#00e800" stroke-width="1" />
<line x1="1269.5" y1="310.5" x2="1271.5" y2="310.5" stroke="#00e800" stroke-width="1" />
<line x1="1274.5" y1="304.21232876712327" x2="1274.5" y2="337.6027397260274" stroke="#10f010" stroke-width="1.3" />
<line x1="1272.5" y1="312.5" x2="1274.5" y2="312.5" stroke="#00e800" stroke-width="1" />
<line x1="1274.5" y1="324.5" x2="1276.5" y2="324.5" stroke="#00e800" stroke-width="1" />
<line x1="1278.5" y1="305.06849315068496" x2="1278.5" y2="347.02054794520546" stroke="#10f010" stroke-width="1.3" />
<line x1="1276.5" y1="333.5" x2="1278.5" y2="333.5" stroke="#00e800" stroke-width="1" />
<line x1="1278.5" y1="320.5" x2="1280.5" y2="320.5" stroke="#00e800" stroke-width="1" />
<line x1="1282.5" y1="307.63698630136986" x2="1282.5" y2="320.47945205479454" stroke="#10f010" stroke-width="1.3" />
<line x1="1280.5" y1="311.5" x2="1282.5" y2="311.5" stroke="#00e800" stroke-width="1" />
<line x1="1282.5" y1="313.5" x2="1284.5" y2="313.5" stroke="#00e800" stroke-width="1" />
<line x1="1286.5" y1="305.9246575342466" x2="1286.5" y2="311.9178082191781" stroke="#10f010" stroke-width="1.3" />
<line x1="1284.5" y1="311.5" x2="1286.5" y2="311.5" stroke="#00e800" stroke-width="1" />
<line x1="1286.5" y1="310.5" x2="1288.5" y2="310.5" stroke="#00e800" stroke-width="1" />
<line x1="1292.5" y1="305.06849315068496" x2="1292.5" y2="318.7671232876712" stroke="#10f010" stroke-width="1.3" />
<line x1="1290.5" y1="309.5" x2="1292.5" y2="309.5" stroke="#00e800" stroke-width="1" />
<line x1="1292.5" y1="310.5" x2="1294.5" y2="310.5" stroke="#00e800" stroke-width="1" />
<line x1="1296.5" y1="295.6506849315069" x2="1296.5" y2="326.472602739726" stroke="#10f010" stroke-width="1.3" />
<line x1="1294.5" y1="304.5" x2="1296.5" y2="304.5" stroke="#00e800" stroke-width="1" />
<line x1="1296.5" y1="303.5" x2="1298.5" y2="303.5" stroke="#00e800" stroke-width="1" />
<line x1="1300.5" y1="309.3493150684932" x2="1300.5" y2="341.027397260274" stroke="#10f010" stroke-width="1.3" />
<line x1="1298.5" y1="331.5" x2="1300.5" y2="331.5" stroke="#00e800" stroke-width="1" />
<line x1="1300.5" y1="319.5" x2="1302.5" y2="319.5" stroke="#00e800" stroke-width="1" />
<line x1="1305.5" y1="290.513698630137" x2="1305.5" y2="328.18493150684935" stroke="#10f010" stroke-width="1.3" />
<line x1="1303.5" y1="311.5" x2="1305.5" y2="311.5" stroke="#00e800" stroke-width="1" />
<line x1="1305.5" y1="308.5" x2="1307.5" y2="308.5" stroke="#00e800" stroke-width="1" />
<line x1="1309.5" y1="291.36986301369865" x2="1309.5" y2="303.35616438356163" stroke="#10f010" stroke-width="1.3" />
<line x1="1307.5" y1="295.5" x2="1309.5" y2="295.5" stroke="#00e800" stroke-width="1" />
<line x1="1309.5" y1="299.5" x2="1311.5" y2="299.5" stroke="#00e800" stroke-width="1" />
<line x1="1314.5" y1="287.94520547945206" x2="1314.5" y2="303.35616438356163" stroke="#10f010" stroke-width="1.3" />
<line x1="1312.5" y1="292.5" x2="1314.5" y2="292.5" stroke="#00e800" stroke-width="1" />
<line x1="1314.5" y1="297.5" x2="1316.5" y2="297.5" stroke="#00e800" stroke-width="1" />
<line x1="1318.5" y1="289.6575342465753" x2="1318.5" y2="296.5068493150685" stroke="#10f010" stroke-width="1.3" />
<line x1="1316.5" y1="292.5" x2="1318.5" y2="292.5" stroke="#00e800" stroke-width="1" />
<line x1="1318.5" y1="293.5" x2="1320.5" y2="293.5" stroke="#00e800" stroke-width="1" />
<line x1="1323.5" y1="287.94520547945206" x2="1323.5" y2="313.63013698630135" stroke="#10f010" stroke-width="1.3" />
<line x1="1321.5" y1="296.5" x2="1323.5" y2="296.5" stroke="#00e800" stroke-width="1" />
<line x1="1323.5" y1="297.5" x2="1325.5" y2="297.5" stroke="#00e800" stroke-width="1" />
<line x1="1327.5" y1="305.9246575342466" x2="1327.5" y2="324.76027397260276" stroke="#10f010" stroke-width="1.3" />
<line x1="1325.5" y1="321.5" x2="1327.5" y2="321.5" stroke="#00e800" stroke-width="1" />
<line x1="1327.5" y1="319.5" x2="1329.5" y2="319.5" stroke="#00e800" stroke-width="1" />
<line x1="1332.5" y1="307.63698630136986" x2="1332.5" y2="330.75342465753425" stroke="#10f010" stroke-width="1.3" />
<line x1="1330.5" y1="316.5" x2="1332.5" y2="316.5" stroke="#00e800" stroke-width="1" />
<line x1="1332.5" y1="325.5" x2="1334.5" y2="325.5" stroke="#00e800" stroke-width="1" />
<line x1="1336.5" y1="310.2054794520548" x2="1336.5" y2="323.9041095890411" stroke="#10f010" stroke-width="1.3" />
<line x1="1334.5" y1="315.5" x2="1336.5" y2="315.5" stroke="#00e800" stroke-width="1" />
<line x1="1336.5" y1="316.5" x2="1338.5" y2="316.5" stroke="#00e800" stroke-width="1" />
<line x1="1340.5" y1="310.2054794520548" x2="1340.5" y2="323.9041095890411" stroke="#10f010" stroke-width="1.3" />
<line x1="1338.5" y1="320.5" x2="1340.5" y2="320.5" stroke="#00e800" stroke-width="1" />
<line x1="1340.5" y1="318.5" x2="1342.5" y2="318.5" stroke="#00e800" stroke-width="1" />
<line x1="1345.5" y1="299.93150684931504" x2="1345.5" y2="313.63013698630135" stroke="#10f010" stroke-width="1.3" />
<line x1="1343.5" y1="303.5" x2="1345.5" y2="303.5" stroke="#00e800" stroke-width="1" />
<line x1="1345.5" y1="311.5" x2="1347.5" y2="311.5" stroke="#00e800" stroke-width="1" />
<line x1="1349.5" y1="296.5068493150685" x2="1349.5" y2="314.486301369863" stroke="#10f010" stroke-width="1.3" />
<line x1="1347.5" y1="302.5" x2="1349.5" y2="302.5" stroke="#00e800" stroke-width="1" />
<line x1="1349.5" y1="303.5" x2="1351.5" y2="303.5" stroke="#00e800" stroke-width="1" />
<line x1="1354.5" y1="307.63698630136986" x2="1354.5" y2="337.6027397260274" stroke="#10f010" stroke-width="1.3" />
<line x1="1352.5" y1="328.5" x2="1354.5" y2="328.5" stroke="#00e800" stroke-width="1" />
<line x1="1354.5" y1="320.5" x2="1356.5" y2="320.5" stroke="#00e800" stroke-width="1" />
<line x1="1358.5" y1="309.3493150684932" x2="1358.5" y2="347.02054794520546" stroke="#10f010" stroke-width="1.3" />
<line x1="1356.5" y1="324.5" x2="1358.5" y2="324.5" stroke="#00e800" stroke-width="1" />
<line x1="1358.5" y1="319.5" x2="1360.5" y2="319.5" stroke="#00e800" stroke-width="1" />
<line x1="1363.5" y1="332.4657534246575" x2="1363.5" y2="346.16438356164383" stroke="#10f010" stroke-width="1.3" />
<line x1="1361.5" y1="336.5" x2="1363.5" y2="336.5" stroke="#00e800" stroke-width="1" />
<line x1="1363.5" y1="340.5" x2="1365.5" y2="340.5" stroke="#00e800" stroke-width="1" />
<line x1="1367.5" y1="319.6232876712329" x2="1367.5" y2="339.3150684931507" stroke="#10f010" stroke-width="1.3" />
<line x1="1365.5" y1="326.5" x2="1367.5" y2="326.5" stroke="#00e800" stroke-width="1" />
<line x1="1367.5" y1="331.5" x2="1369.5" y2="331.5" stroke="#00e800" stroke-width="1" />
<line x1="1372.5" y1="318.7671232876712" x2="1372.5" y2="323.9041095890411" stroke="#10f010" stroke-width="1.3" />
<line x1="1370.5" y1="321.5" x2="1372.5" y2="321.5" stroke="#00e800" stroke-width="1" />
<line x1="1372.5" y1="321.5" x2="1374.5" y2="321.5" stroke="#00e800" stroke-width="1" />
<line x1="1376.5" y1="310.2054794520548" x2="1376.5" y2="341.027397260274" stroke="#10f010" stroke-width="1.3" />
<line x1="1374.5" y1="334.5" x2="1376.5" y2="334.5" stroke="#00e800" stroke-width="1" />
<line x1="1376.5" y1="325.5" x2="1378.5" y2="325.5" stroke="#00e800" stroke-width="1" />
<line x1="1381.5" y1="304.21232876712327" x2="1381.5" y2="333.32191780821915" stroke="#10f010" stroke-width="1.3" />
<line x1="1379.5" y1="320.5" x2="1381.5" y2="320.5" stroke="#00e800" stroke-width="1" />
<line x1="1381.5" y1="325.5" x2="1383.5" y2="325.5" stroke="#00e800" stroke-width="1" />
<line x1="1385.5" y1="295.47738693467335" x2="1385.5" y2="334.4221105527638" stroke="#10f010" stroke-width="1.3" />
<line x1="1383.5" y1="308.5" x2="1385.5" y2="308.5" stroke="#00e800" stroke-width="1" />
<line x1="1385.5" y1="307.5" x2="1387.5" y2="307.5" stroke="#00e800" stroke-width="1" />
<line x1="1390.5" y1="308.0402010050251" x2="1390.5" y2="333.16582914572865" stroke="#10f010" stroke-width="1.3" />
<line x1="1388.5" y1="327.5" x2="1390.5" y2="327.5" stroke="#00e800" stroke-width="1" />
<line x1="1390.5" y1="325.5" x2="1392.5" y2="325.5" stroke="#00e800" stroke-width="1" />
<line x1="1394.5" y1="315.5778894472362" x2="1394.5" y2="333.16582914572865" stroke="#10f010" stroke-width="1.3" />
<line x1="1392.5" y1="322.5" x2="1394.5" y2="322.5" stroke="#00e800" stroke-width="1" />
<line x1="1394.5" y1="321.5" x2="1396.5" y2="321.5" stroke="#00e800" stroke-width="1" />
<line x1="1399.5" y1="305.5276381909548" x2="1399.5" y2="315.5778894472362" stroke="#10f010" stroke-width="1.3" />
<line x1="1397.5" y1="312.5" x2="1399.5" y2="312.5" stroke="#00e800" stroke-width="1" />
<line x1="1399.5" y1="313.5" x2="1401.5" y2="313.5" stroke="#00e800" stroke-width="1" />
<line x1="1403.5" y1="282.9145728643216" x2="1403.5" y2="318.09045226130655" stroke="#10f010" stroke-width="1.3" />
<line x1="1401.5" y1="294.5" x2="1403.5" y2="294.5" stroke="#00e800" stroke-width="1" />
<line x1="1403.5" y1="310.5" x2="1405.5" y2="310.5" stroke="#00e800" stroke-width="1" />
<line x1="1407.5" y1="308.0402010050251" x2="1407.5" y2="334.4221105527638" stroke="#10f010" stroke-width="1.3" />
<line x1="1405.5" y1="327.5" x2="1407.5" y2="327.5" stroke="#00e800" stroke-width="1" />
<line x1="1407.5" y1="323.5" x2="1409.5" y2="323.5" stroke="#00e800" stroke-width="1" />
<line x1="1412.5" y1="262.8140703517588" x2="1412.5" y2="325.6281407035176" stroke="#10f010" stroke-width="1.3" />
<line x1="1410.5" y1="291.5" x2="1412.5" y2="291.5" stroke="#00e800" stroke-width="1" />
<line x1="1412.5" y1="279.5" x2="1414.5" y2="279.5" stroke="#00e800" stroke-width="1" />
<line x1="1416.5" y1="270.35175879396985" x2="1416.5" y2="282.9145728643216" stroke="#10f010" stroke-width="1.3" />
<line x1="1414.5" y1="273.5" x2="1416.5" y2="273.5" stroke="#00e800" stroke-width="1" />
<line x1="1416.5" y1="280.5" x2="1418.5" y2="280.5" stroke="#00e800" stroke-width="1" />
<line x1="1421.5" y1="272.8643216080402" x2="1421.5" y2="282.9145728643216" stroke="#10f010" stroke-width="1.3" />
<line x1="1419.5" y1="276.5" x2="1421.5" y2="276.5" stroke="#00e800" stroke-width="1" />
<line x1="1421.5" y1="279.5" x2="1423.5" y2="279.5" stroke="#00e800" stroke-width="1" />
<line x1="1425.5" y1="272.8643216080402" x2="1425.5" y2="282.9145728643216" stroke="#10f010" stroke-width="1.3" />
<line x1="1423.5" y1="276.5" x2="1425.5" y2="276.5" stroke="#00e800" stroke-width="1" />
<line x1="1425.5" y1="280.5" x2="1427.5" y2="280.5" stroke="#00e800" stroke-width="1" />
<line x1="1429.5" y1="262.8140703517588" x2="1429.5" y2="321.85929648241205" stroke="#10f010" stroke-width="1.3" />
<line x1="1427.5" y1="296.5" x2="1429.5" y2="296.5" stroke="#00e800" stroke-width="1" />
<line x1="1429.5" y1="285.5" x2="1431.5" y2="285.5" stroke="#00e800" stroke-width="1" />
<line x1="1434.5" y1="308.0402010050251" x2="1434.5" y2="346.9849246231156" stroke="#10f010" stroke-width="1.3" />
<line x1="1432.5" y1="320.5" x2="1434.5" y2="320.5" stroke="#00e800" stroke-width="1" />
<line x1="1434.5" y1="333.5" x2="1436.5" y2="333.5" stroke="#00e800" stroke-width="1" />
<line x1="1438.5" y1="315.5778894472362" x2="1438.5" y2="352.0100502512563" stroke="#10f010" stroke-width="1.3" />
<line x1="1436.5" y1="324.5" x2="1438.5" y2="324.5" stroke="#00e800" stroke-width="1" />
<line x1="1438.5" y1="328.5" x2="1440.5" y2="328.5" stroke="#00e800" stroke-width="1" />
<line x1="1443.5" y1="299.2462311557789" x2="1443.5" y2="314.321608040201" stroke="#10f010" stroke-width="1.3" />
<line x1="1441.5" y1="307.5" x2="1443.5" y2="307.5" stroke="#00e800" stroke-width="1" />
<line x1="1443.5" y1="310.5" x2="1445.5" y2="310.5" stroke="#00e800" stroke-width="1" />
<line x1="1447.5" y1="299.2462311557789" x2="1447.5" y2="310.5527638190955" stroke="#10f010" stroke-width="1.3" />
<line x1="1445.5" y1="306.5" x2="1447.5" y2="306.5" stroke="#00e800" stroke-width="1" />
<line x1="1447.5" y1="303.5" x2="1449.5" y2="303.5" stroke="#00e800" stroke-width="1" />
<line x1="1452.5" y1="291.70854271356785" x2="1452.5" y2="308.0402010050251" stroke="#10f010" stroke-width="1.3" />
<line x1="1450.5" y1="304.5" x2="1452.5" y2="304.5" stroke="#00e800" stroke-width="1" />
<line x1="1452.5" y1="297.5" x2="1454.5" y2="297.5" stroke="#00e800" stroke-width="1" />
<line x1="1455.5" y1="280.40201005025125" x2="1455.5" y2="292.964824120603" stroke="#10f010" stroke-width="1.3" />
<line x1="1453.5" y1="283.5" x2="1455.5" y2="283.5" stroke="#00e800" stroke-width="1" />
<line x1="1455.5" y1="285.5" x2="1457.5" y2="285.5" stroke="#00e800" stroke-width="1" />
<line x1="1460.5" y1="250.25125628140705" x2="1460.5" y2="286.68341708542715" stroke="#10f010" stroke-width="1.3" />
<line x1="1458.5" y1="267.5" x2="1460.5" y2="267.5" stroke="#00e800" stroke-width="1" />
<line x1="1460.5" y1="259.5" x2="1462.5" y2="259.5" stroke="#00e800" stroke-width="1" />
<line x1="1465.5" y1="230.15075376884423" x2="1465.5" y2="267.8391959798995" stroke="#10f010" stroke-width="1.3" />
<line x1="1463.5" y1="242.5" x2="1465.5" y2="242.5" stroke="#00e800" stroke-width="1" />
<line x1="1465.5" y1="246.5" x2="1467.5" y2="246.5" stroke="#00e800" stroke-width="1" />
<line x1="1469.5" y1="237.68844221105527" x2="1469.5" y2="259.04522613065325" stroke="#10f010" stroke-width="1.3" />
<line x1="1467.5" y1="249.5" x2="1469.5" y2="249.5" stroke="#00e800" stroke-width="1" />
<line x1="1469.5" y1="244.5" x2="1471.5" y2="244.5" stroke="#00e800" stroke-width="1" />
<line x1="1474.5" y1="248.99497487437185" x2="1474.5" y2="261.5577889447236" stroke="#10f010" stroke-width="1.3" />
<line x1="1472.5" y1="254.5" x2="1474.5" y2="254.5" stroke="#00e800" stroke-width="1" />
<line x1="1474.5" y1="258.5" x2="1476.5" y2="258.5" stroke="#00e800" stroke-width="1" />
<line x1="1478.5" y1="255.27638190954775" x2="1478.5" y2="260.30150753768845" stroke="#10f010" stroke-width="1.3" />
<line x1="1476.5" y1="259.5" x2="1478.5" y2="259.5" stroke="#00e800" stroke-width="1" />
<line x1="1478.5" y1="258.5" x2="1480.5" y2="258.5" stroke="#00e800" stroke-width="1" />
<line x1="1483.5" y1="235.17587939698493" x2="1483.5" y2="267.8391959798995" stroke="#10f010" stroke-width="1.3" />
<line x1="1481.5" y1="255.5" x2="1483.5" y2="255.5" stroke="#00e800" stroke-width="1" />
<line x1="1483.5" y1="253.5" x2="1485.5" y2="253.5" stroke="#00e800" stroke-width="1" />
<line x1="1488.5" y1="226.3819095477387" x2="1488.5" y2="236.4321608040201" stroke="#10f010" stroke-width="1.3" />
<line x1="1486.5" y1="229.5" x2="1488.5" y2="229.5" stroke="#00e800" stroke-width="1" />
<line x1="1488.5" y1="229.5" x2="1490.5" y2="229.5" stroke="#00e800" stroke-width="1" />
<line x1="1492.5" y1="208.79396984924622" x2="1492.5" y2="267.8391959798995" stroke="#10f010" stroke-width="1.3" />
<line x1="1490.5" y1="221.5" x2="1492.5" y2="221.5" stroke="#00e800" stroke-width="1" />
<line x1="1492.5" y1="253.5" x2="1494.5" y2="253.5" stroke="#00e800" stroke-width="1" />
<line x1="1496.5" y1="235.17587939698493" x2="1496.5" y2="275.37688442211055" stroke="#10f010" stroke-width="1.3" />
<line x1="1494.5" y1="260.5" x2="1496.5" y2="260.5" stroke="#00e800" stroke-width="1" />
<line x1="1496.5" y1="266.5" x2="1498.5" y2="266.5" stroke="#00e800" stroke-width="1" />
<line x1="1500.5" y1="267.8391959798995" x2="1500.5" y2="280.40201005025125" stroke="#10f010" stroke-width="1.3" />
<line x1="1498.5" y1="271.5" x2="1500.5" y2="271.5" stroke="#00e800" stroke-width="1" />
<line x1="1500.5" y1="275.5" x2="1502.5" y2="275.5" stroke="#00e800" stroke-width="1" />
<line x1="1504.5" y1="266.5829145728643" x2="1504.5" y2="275.37688442211055" stroke="#10f010" stroke-width="1.3" />
<line x1="1502.5" y1="271.5" x2="1504.5" y2="271.5" stroke="#00e800" stroke-width="1" />
<line x1="1504.5" y1="272.5" x2="1506.5" y2="272.5" stroke="#00e800" stroke-width="1" />
<line x1="1509.5" y1="277.8894472361809" x2="1509.5" y2="385.929648241206" stroke="#10f010" stroke-width="1.3" />
<line x1="1507.5" y1="320.5" x2="1509.5" y2="320.5" stroke="#00e800" stroke-width="1" />
<line x1="1509.5" y1="364.5" x2="1511.5" y2="364.5" stroke="#00e800" stroke-width="1" />
<line x1="1513.5" y1="330.6532663316583" x2="1513.5" y2="373.3668341708543" stroke="#10f010" stroke-width="1.3" />
<line x1="1511.5" y1="341.5" x2="1513.5" y2="341.5" stroke="#00e800" stroke-width="1" />
<line x1="1513.5" y1="353.5" x2="1515.5" y2="353.5" stroke="#00e800" stroke-width="1" />
<line x1="1518.5" y1="300.5025125628141" x2="1518.5" y2="350.7537688442211" stroke="#10f010" stroke-width="1.3" />
<line x1="1516.5" y1="333.5" x2="1518.5" y2="333.5" stroke="#00e800" stroke-width="1" />
<line x1="1518.5" y1="338.5" x2="1520.5" y2="338.5" stroke="#00e800" stroke-width="1" />
<line x1="1523.5" y1="282.9145728643216" x2="1523.5" y2="350.7537688442211" stroke="#10f010" stroke-width="1.3" />
<line x1="1521.5" y1="326.5" x2="1523.5" y2="326.5" stroke="#00e800" stroke-width="1" />
<line x1="1523.5" y1="325.5" x2="1525.5" y2="325.5" stroke="#00e800" stroke-width="1" />
<line x1="1527.5" y1="300.5025125628141" x2="1527.5" y2="318.09045226130655" stroke="#10f010" stroke-width="1.3" />
<line x1="1525.5" y1="312.5" x2="1527.5" y2="312.5" stroke="#00e800" stroke-width="1" />
<line x1="1527.5" y1="314.5" x2="1529.5" y2="314.5" stroke="#00e800" stroke-width="1" />
<line x1="1531.5" y1="305.5276381909548" x2="1531.5" y2="318.09045226130655" stroke="#10f010" stroke-width="1.3" />
<line x1="1529.5" y1="311.5" x2="1531.5" y2="311.5" stroke="#00e800" stroke-width="1" />
<line x1="1531.5" y1="313.5" x2="1533.5" y2="313.5" stroke="#00e800" stroke-width="1" />
<line x1="1536.5" y1="304.2713567839196" x2="1536.5" y2="330.6532663316583" stroke="#10f010" stroke-width="1.3" />
<line x1="1534.5" y1="324.5" x2="1536.5" y2="324.5" stroke="#00e800" stroke-width="1" />
<line x1="1536.5" y1="323.5" x2="1538.5" y2="323.5" stroke="#00e800" stroke-width="1" />
<line x1="1541.5" y1="287.9396984924623" x2="1541.5" y2="350.7537688442211" stroke="#10f010" stroke-width="1.3" />
<line x1="1539.5" y1="316.5" x2="1541.5" y2="316.5" stroke="#00e800" stroke-width="1" />
<line x1="1541.5" y1="330.5" x2="1543.5" y2="330.5" stroke="#00e800" stroke-width="1" />
<line x1="1545.5" y1="297.9899497487437" x2="1545.5" y2="346.9849246231156" stroke="#10f010" stroke-width="1.3" />
<line x1="1543.5" y1="333.5" x2="1545.5" y2="333.5" stroke="#00e800" stroke-width="1" />
<line x1="1545.5" y1="325.5" x2="1547.5" y2="325.5" stroke="#00e800" stroke-width="1" />
<line x1="1550.5" y1="303.0150753768844" x2="1550.5" y2="320.6030150753769" stroke="#10f010" stroke-width="1.3" />
<line x1="1548.5" y1="313.5" x2="1550.5" y2="313.5" stroke="#00e800" stroke-width="1" />
<line x1="1550.5" y1="311.5" x2="1552.5" y2="311.5" stroke="#00e800" stroke-width="1" />
<line x1="1554.5" y1="299.2462311557789" x2="1554.5" y2="318.09045226130655" stroke="#10f010" stroke-width="1.3" />
<line x1="1552.5" y1="310.5" x2="1554.5" y2="310.5" stroke="#00e800" stroke-width="1" />
<line x1="1554.5" y1="310.5" x2="1556.5" y2="310.5" stroke="#00e800" stroke-width="1" />
<line x1="1559.5" y1="299.2462311557789" x2="1559.5" y2="310.5527638190955" stroke="#10f010" stroke-width="1.3" />
<line x1="1557.5" y1="302.5" x2="1559.5" y2="302.5" stroke="#00e800" stroke-width="1" />
<line x1="1559.5" y1="306.5" x2="1561.5" y2="306.5" stroke="#00e800" stroke-width="1" />
<line x1="1563.5" y1="259.04522613065325" x2="1563.5" y2="313.0653266331658" stroke="#10f010" stroke-width="1.3" />
<line x1="1561.5" y1="302.5" x2="1563.5" y2="302.5" stroke="#00e800" stroke-width="1" />
<line x1="1563.5" y1="298.5" x2="1565.5" y2="298.5" stroke="#00e800" stroke-width="1" />
<line x1="1567.5" y1="243.96984924623115" x2="1567.5" y2="261.5577889447236" stroke="#10f010" stroke-width="1.3" />
<line x1="1565.5" y1="255.5" x2="1567.5" y2="255.5" stroke="#00e800" stroke-width="1" />
<line x1="1567.5" y1="252.5" x2="1569.5" y2="252.5" stroke="#00e800" stroke-width="1" />
<line x1="1571.5" y1="252.7638190954774" x2="1571.5" y2="313.0653266331658" stroke="#10f010" stroke-width="1.3" />
<line x1="1569.5" y1="291.5" x2="1571.5" y2="291.5" stroke="#00e800" stroke-width="1" />
<line x1="1571.5" y1="286.5" x2="1573.5" y2="286.5" stroke="#00e800" stroke-width="1" />
<line x1="1576.5" y1="282.9145728643216" x2="1576.5" y2="313.0653266331658" stroke="#10f010" stroke-width="1.3" />
<line x1="1574.5" y1="297.5" x2="1576.5" y2="297.5" stroke="#00e800" stroke-width="1" />
<line x1="1576.5" y1="304.5" x2="1578.5" y2="304.5" stroke="#00e800" stroke-width="1" />
<line x1="1581.5" y1="284.1708542713568" x2="1581.5" y2="340.7035175879397" stroke="#10f010" stroke-width="1.3" />
<line x1="1579.5" y1="298.5" x2="1581.5" y2="298.5" stroke="#00e800" stroke-width="1" />
<line x1="1581.5" y1="321.5" x2="1583.5" y2="321.5" stroke="#00e800" stroke-width="1" />
<line x1="1586.5" y1="305.5276381909548" x2="1586.5" y2="308.0402010050251" stroke="#10f010" stroke-width="1.3" />
<line x1="1584.5" y1="306.5" x2="1586.5" y2="306.5" stroke="#00e800" stroke-width="1" />
<line x1="1586.5" y1="307.5" x2="1588.5" y2="307.5" stroke="#00e800" stroke-width="1" />
<line x1="1590.5" y1="308.0402010050251" x2="1590.5" y2="348.24120603015075" stroke="#10f010" stroke-width="1.3" />
<line x1="1588.5" y1="328.5" x2="1590.5" y2="328.5" stroke="#00e800" stroke-width="1" />
<line x1="1590.5" y1="322.5" x2="1592.5" y2="322.5" stroke="#00e800" stroke-width="1" />
<line x1="1594.5" y1="325.6281407035176" x2="1594.5" y2="374.62311557788945" stroke="#10f010" stroke-width="1.3" />
<line x1="1592.5" y1="356.5" x2="1594.5" y2="356.5" stroke="#00e800" stroke-width="1" />
<line x1="1594.5" y1="350.5" x2="1596.5" y2="350.5" stroke="#00e800" stroke-width="1" />
<line x1="1599.5" y1="305.5276381909548" x2="1599.5" y2="330.6532663316583" stroke="#10f010" stroke-width="1.3" />
<line x1="1597.5" y1="320.5" x2="1599.5" y2="320.5" stroke="#00e800" stroke-width="1" />
<line x1="1599.5" y1="324.5" x2="1601.5" y2="324.5" stroke="#00e800" stroke-width="1" />
<polyline points="1147,394 1164,383 1180.4,371 1198.4,369.3 1215.5,367.6 1225.8,367.6 1237.8,362.5 1251.5,347 1266.9,335 1273.6,329 1290.7,319.6 1309.5,318 1323.2,310.2 1338.6,308.5 1357.5,308.5 1367.7,313.6 1380,318 1392.6,318 1412.7,314.3 1425,306.8 1435,306.8 1450.4,304.3 1470.5,285.4 1485.5,279.1 1504.4,262.8 1520.7,274.1 1540.8,290.5 1558.4,309.3 1571,301.8 1581,299.2 1600,306.5" fill="none" stroke="#ff1010" stroke-width="1.3" stroke-linejoin="round"/>
<path d="M1050,158 l3.5,-6 l3.5,6 z" fill="#fff" />
<text transform="translate(1062,158) scale(0.93,1)" x="0" y="0" font-size="11" fill="#f0f0f0" font-family="Liberation Sans" >GBPUSD,H4</text>
<text transform="translate(1129,158) scale(0.915,1)" x="0" y="0" font-size="11" fill="#f0f0f0" font-family="Liberation Sans" >1.33872 1.34155 1.33830 1.34031</text>
<rect x="1049" y="162.5" width="49" height="23.5" fill="#4646ee" />
<line x1="1053" y1="185.5" x2="1094" y2="185.5" stroke="#8a8aff" stroke-width="1" />
<text transform="translate(1059,179.5) scale(0.9,1)" x="0" y="0" font-size="12.5" fill="#fff" font-family="Liberation Sans" >SELL</text>
<rect x="1100" y="162" width="20" height="19" fill="#e0e0e0" />
<path d="M1105,169 h9 l-4.5,5 z" fill="#000" />
<rect x="1120" y="162" width="66" height="19" fill="#ffffff" />
<text x="1180" y="176" font-size="12" fill="#222" font-family="Liberation Sans" text-anchor="end" >1.00</text>
<rect x="1187" y="162" width="18" height="19" fill="#e0e0e0" />
<path d="M1191,174 h9 l-4.5,-5 z" fill="#000" />
<rect x="1208" y="162.5" width="49" height="23.5" fill="#4646ee" />
<line x1="1212" y1="185.5" x2="1253" y2="185.5" stroke="#8a8aff" stroke-width="1" />
<text transform="translate(1220,179.5) scale(0.9,1)" x="0" y="0" font-size="12.5" fill="#fff" font-family="Liberation Sans" >BUY</text>
<rect x="1049" y="186" width="103" height="30" fill="url(#gBlue2)" />
<rect x="1155" y="186" width="102" height="30" fill="url(#gBlue2)" />
<text transform="translate(1062,213.5) scale(1.04,1)" x="0" y="0" font-size="13" fill="#fff" font-family="Liberation Sans" font-weight="bold" >1.34</text>
<text transform="translate(1094.5,213.8) scale(0.86,1)" x="0" y="0" font-size="38" fill="#fff" font-family="Liberation Sans" stroke="#fff" stroke-width="0.7">03</text>
<text x="1132" y="195" font-size="13" fill="#fff" font-family="Liberation Sans" font-weight="bold" >1</text>
<text transform="translate(1168,213.5) scale(1.04,1)" x="0" y="0" font-size="13" fill="#fff" font-family="Liberation Sans" font-weight="bold" >1.34</text>
<text transform="translate(1199.5,213.8) scale(0.86,1)" x="0" y="0" font-size="38" fill="#fff" font-family="Liberation Sans" stroke="#fff" stroke-width="0.7">06</text>
<text x="1237" y="195" font-size="13" fill="#fff" font-family="Liberation Sans" font-weight="bold" >5</text>
<rect x="210" y="491" width="826" height="185" fill="#dcdcdc" />
<line x1="210.5" y1="491" x2="210.5" y2="676" stroke="#f4f4f4" stroke-width="1" />
<line x1="210" y1="491.5" x2="1036" y2="491.5" stroke="#f4f4f4" stroke-width="1" />
<line x1="1035.5" y1="491" x2="1035.5" y2="676" stroke="#404040" stroke-width="1" />
<line x1="210" y1="675.5" x2="1036" y2="675.5" stroke="#404040" stroke-width="1" />
<rect x="215" y="494" width="818" height="19" fill="url(#gTitle)" />
<rect x="219.5" y="497.5" width="11" height="8" fill="#e8f0ff" stroke="#3a78e0" stroke-width="1" />
<rect x="223.5" y="501.5" width="11" height="9" fill="#f4f8ff" stroke="#3a78e0" stroke-width="1" />
<text transform="translate(236,508.5) scale(0.93,1)" x="0" y="0" font-size="13" fill="#e4e0dc" font-family="Liberation Sans" font-weight="bold" >USDCHF,H4</text>
<rect x="216" y="518" width="815" height="158" fill="#000" />
<line x1="256.5" y1="522" x2="256.5" y2="674" stroke="#7a8c9e" stroke-width="1" stroke-dasharray="4,3"/>
<line x1="292.06" y1="522" x2="292.06" y2="674" stroke="#7a8c9e" stroke-width="1" stroke-dasharray="4,3"/>
<line x1="327.62" y1="522" x2="327.62" y2="674" stroke="#7a8c9e" stroke-width="1" stroke-dasharray="4,3"/>
<line x1="363.18" y1="522" x2="363.18" y2="674" stroke="#7a8c9e" stroke-width="1" stroke-dasharray="4,3"/>
<line x1="398.74" y1="522" x2="398.74" y2="674" stroke="#7a8c9e" stroke-width="1" stroke-dasharray="4,3"/>
<line x1="434.3" y1="522" x2="434.3" y2="674" stroke="#7a8c9e" stroke-width="1" stroke-dasharray="4,3"/>
<line x1="469.86" y1="522" x2="469.86" y2="674" stroke="#7a8c9e" stroke-width="1" stroke-dasharray="4,3"/>
<line x1="505.42" y1="522" x2="505.42" y2="674" stroke="#7a8c9e" stroke-width="1" stroke-dasharray="4,3"/>
<line x1="540.98" y1="522" x2="540.98" y2="674" stroke="#7a8c9e" stroke-width="1" stroke-dasharray="4,3"/>
<line x1="576.54" y1="522" x2="576.54" y2="674" stroke="#7a8c9e" stroke-width="1" stroke-dasharray="4,3"/>
<line x1="612.1" y1="522" x2="612.1" y2="674" stroke="#7a8c9e" stroke-width="1" stroke-dasharray="4,3"/>
<line x1="647.6600000000001" y1="522" x2="647.6600000000001" y2="674" stroke="#7a8c9e" stroke-width="1" stroke-dasharray="4,3"/>
<line x1="683.22" y1="522" x2="683.22" y2="674" stroke="#7a8c9e" stroke-width="1" stroke-dasharray="4,3"/>
<line x1="718.78" y1="522" x2="718.78" y2="674" stroke="#7a8c9e" stroke-width="1" stroke-dasharray="4,3"/>
<line x1="754.34" y1="522" x2="754.34" y2="674" stroke="#7a8c9e" stroke-width="1" stroke-dasharray="4,3"/>
<line x1="789.9000000000001" y1="522" x2="789.9000000000001" y2="674" stroke="#7a8c9e" stroke-width="1" stroke-dasharray="4,3"/>
<line x1="825.46" y1="522" x2="825.46" y2="674" stroke="#7a8c9e" stroke-width="1" stroke-dasharray="4,3"/>
<line x1="861.02" y1="522" x2="861.02" y2="674" stroke="#7a8c9e" stroke-width="1" stroke-dasharray="4,3"/>
<line x1="896.58" y1="522" x2="896.58" y2="674" stroke="#7a8c9e" stroke-width="1" stroke-dasharray="4,3"/>
<line x1="932.1400000000001" y1="522" x2="932.1400000000001" y2="674" stroke="#7a8c9e" stroke-width="1" stroke-dasharray="4,3"/>
<line x1="967.7" y1="522" x2="967.7" y2="674" stroke="#7a8c9e" stroke-width="1" stroke-dasharray="4,3"/>
<line x1="220" y1="542.1" x2="986" y2="542.1" stroke="#7a8c9e" stroke-width="1" stroke-dasharray="4,3"/>
<line x1="220" y1="578.9" x2="986" y2="578.9" stroke="#7a8c9e" stroke-width="1" stroke-dasharray="4,3"/>
<line x1="220" y1="615.7" x2="986" y2="615.7" stroke="#7a8c9e" stroke-width="1" stroke-dasharray="4,3"/>
<line x1="220" y1="652.5" x2="986" y2="652.5" stroke="#7a8c9e" stroke-width="1" stroke-dasharray="4,3"/>
<rect x="219.5" y="521.5" width="767" height="200" fill="none" stroke="#c8c8c8" stroke-width="1" />
<path d="M224,533.5 l3.5,-6 l3.5,6 z" fill="#fff" />
<text transform="translate(236,533.5) scale(0.93,1)" x="0" y="0" font-size="11" fill="#f0f0f0" font-family="Liberation Sans" >USDCHF,H4</text>
<text transform="translate(303,533.5) scale(0.915,1)" x="0" y="0" font-size="11" fill="#f0f0f0" font-family="Liberation Sans" >0.88638 0.88700 0.88614 0.88682</text>
<rect x="223" y="538.0" width="49" height="23.5" fill="url(#gRed)" />
<line x1="227" y1="561.0" x2="268" y2="561.0" stroke="#ff9090" stroke-width="1" />
<text transform="translate(233,555.0) scale(0.9,1)" x="0" y="0" font-size="12.5" fill="#fff" font-family="Liberation Sans" >SELL</text>
<rect x="274" y="537.5" width="20" height="19" fill="#e0e0e0" />
<path d="M279,544.5 h9 l-4.5,5 z" fill="#000" />
<rect x="294" y="537.5" width="66" height="19" fill="#ffffff" />
<text x="354" y="551.5" font-size="12" fill="#222" font-family="Liberation Sans" text-anchor="end" >1.00</text>
<rect x="361" y="537.5" width="18" height="19" fill="#e0e0e0" />
<path d="M365,549.5 h9 l-4.5,-5 z" fill="#000" />
<rect x="382" y="538.0" width="49" height="23.5" fill="url(#gRed)" />
<line x1="386" y1="561.0" x2="427" y2="561.0" stroke="#ff9090" stroke-width="1" />
<text transform="translate(394,555.0) scale(0.9,1)" x="0" y="0" font-size="12.5" fill="#fff" font-family="Liberation Sans" >BUY</text>
<rect x="223" y="561.5" width="103" height="30" fill="url(#gRed)" />
<rect x="329" y="561.5" width="102" height="30" fill="url(#gRed)" />
<text transform="translate(236,589.0) scale(1.04,1)" x="0" y="0" font-size="13" fill="#fff" font-family="Liberation Sans" font-weight="bold" >0.88</text>
<text transform="translate(268.5,589.3) scale(0.86,1)" x="0" y="0" font-size="38" fill="#fff" font-family="Liberation Sans" stroke="#fff" stroke-width="0.7">68</text>
<text x="306" y="570.5" font-size="13" fill="#fff" font-family="Liberation Sans" font-weight="bold" >2</text>
<text transform="translate(342,589.0) scale(1.04,1)" x="0" y="0" font-size="13" fill="#fff" font-family="Liberation Sans" font-weight="bold" >0.88</text>
<text transform="translate(373.5,589.3) scale(0.86,1)" x="0" y="0" font-size="38" fill="#fff" font-family="Liberation Sans" stroke="#fff" stroke-width="0.7">71</text>
<text x="411" y="570.5" font-size="13" fill="#fff" font-family="Liberation Sans" font-weight="bold" >2</text>
<text transform="translate(993,657) scale(0.95,1)" x="0" y="0" font-size="11" fill="#e8e8e8" font-family="Liberation Sans" >0.89500</text>
<line x1="612.5" y1="651" x2="612.5" y2="660" stroke="#20d020" stroke-width="1" />
<line x1="616.5" y1="651" x2="616.5" y2="664" stroke="#20d020" stroke-width="1" />
<line x1="620.5" y1="652" x2="620.5" y2="668" stroke="#20d020" stroke-width="1" />
<line x1="624.5" y1="654" x2="624.5" y2="670" stroke="#20d020" stroke-width="1" />
<line x1="628.5" y1="656" x2="628.5" y2="672" stroke="#20d020" stroke-width="1" />
<line x1="632.5" y1="660" x2="632.5" y2="675" stroke="#20d020" stroke-width="1" />
<line x1="640.5" y1="666" x2="640.5" y2="675" stroke="#20d020" stroke-width="1" />
<line x1="648.5" y1="668" x2="648.5" y2="675" stroke="#20d020" stroke-width="1" />
<line x1="656.5" y1="670" x2="656.5" y2="675" stroke="#20d020" stroke-width="1" />
<line x1="664.5" y1="668" x2="664.5" y2="675" stroke="#20d020" stroke-width="1" />
<line x1="672.5" y1="670" x2="672.5" y2="675" stroke="#20d020" stroke-width="1" />
<line x1="683.5" y1="655" x2="683.5" y2="675" stroke="#20d020" stroke-width="1" />
<line x1="686.5" y1="660" x2="686.5" y2="675" stroke="#20d020" stroke-width="1" />
<line x1="700.5" y1="672" x2="700.5" y2="675" stroke="#20d020" stroke-width="1" />
<line x1="705.5" y1="670" x2="705.5" y2="675" stroke="#20d020" stroke-width="1" />
<line x1="952.5" y1="668" x2="952.5" y2="675" stroke="#20d020" stroke-width="1" />
<rect x="1036" y="491" width="604" height="185" fill="#dcdcdc" />
<line x1="1036.5" y1="491" x2="1036.5" y2="676" stroke="#f4f4f4" stroke-width="1" />
<line x1="1036" y1="491.5" x2="1640" y2="491.5" stroke="#f4f4f4" stroke-width="1" />
<line x1="1639.5" y1="491" x2="1639.5" y2="676" stroke="#404040" stroke-width="1" />
<line x1="1036" y1="675.5" x2="1640" y2="675.5" stroke="#404040" stroke-width="1" />
<rect x="1041" y="494" width="596" height="19" fill="url(#gTitle)" />
<rect x="1045.5" y="497.5" width="11" height="8" fill="#e8f0ff" stroke="#3a78e0" stroke-width="1" />
<rect x="1049.5" y="501.5" width="11" height="9" fill="#f4f8ff" stroke="#3a78e0" stroke-width="1" />
<text transform="translate(1062,508.5) scale(0.93,1)" x="0" y="0" font-size="13" fill="#e4e0dc" font-family="Liberation Sans" font-weight="bold" >USDJPY,H4</text>
<rect x="1042" y="518" width="600" height="158" fill="#000" />
<line x1="1118.1" y1="522" x2="1118.1" y2="674" stroke="#7a8c9e" stroke-width="1" stroke-dasharray="4,3"/>
<line x1="1153.6999999999998" y1="522" x2="1153.6999999999998" y2="674" stroke="#7a8c9e" stroke-width="1" stroke-dasharray="4,3"/>
<line x1="1189.3" y1="522" x2="1189.3" y2="674" stroke="#7a8c9e" stroke-width="1" stroke-dasharray="4,3"/>
<line x1="1224.8999999999999" y1="522" x2="1224.8999999999999" y2="674" stroke="#7a8c9e" stroke-width="1" stroke-dasharray="4,3"/>
<line x1="1260.5" y1="522" x2="1260.5" y2="674" stroke="#7a8c9e" stroke-width="1" stroke-dasharray="4,3"/>
<line x1="1296.1" y1="522" x2="1296.1" y2="674" stroke="#7a8c9e" stroke-width="1" stroke-dasharray="4,3"/>
<line x1="1331.6999999999998" y1="522" x2="1331.6999999999998" y2="674" stroke="#7a8c9e" stroke-width="1" stroke-dasharray="4,3"/>
<line x1="1367.3" y1="522" x2="1367.3" y2="674" stroke="#7a8c9e" stroke-width="1" stroke-dasharray="4,3"/>
<line x1="1402.8999999999999" y1="522" x2="1402.8999999999999" y2="674" stroke="#7a8c9e" stroke-width="1" stroke-dasharray="4,3"/>
<line x1="1438.5" y1="522" x2="1438.5" y2="674" stroke="#7a8c9e" stroke-width="1" stroke-dasharray="4,3"/>
<line x1="1474.1" y1="522" x2="1474.1" y2="674" stroke="#7a8c9e" stroke-width="1" stroke-dasharray="4,3"/>
<line x1="1509.6999999999998" y1="522" x2="1509.6999999999998" y2="674" stroke="#7a8c9e" stroke-width="1" stroke-dasharray="4,3"/>
<line x1="1545.3" y1="522" x2="1545.3" y2="674" stroke="#7a8c9e" stroke-width="1" stroke-dasharray="4,3"/>
<line x1="1580.8999999999999" y1="522" x2="1580.8999999999999" y2="674" stroke="#7a8c9e" stroke-width="1" stroke-dasharray="4,3"/>
<line x1="1616.5" y1="522" x2="1616.5" y2="674" stroke="#7a8c9e" stroke-width="1" stroke-dasharray="4,3"/>
<line x1="1046" y1="542.1" x2="1600" y2="542.1" stroke="#7a8c9e" stroke-width="1" stroke-dasharray="4,3"/>
<line x1="1046" y1="578.9" x2="1600" y2="578.9" stroke="#7a8c9e" stroke-width="1" stroke-dasharray="4,3"/>
<line x1="1046" y1="615.7" x2="1600" y2="615.7" stroke="#7a8c9e" stroke-width="1" stroke-dasharray="4,3"/>
<line x1="1046" y1="652.5" x2="1600" y2="652.5" stroke="#7a8c9e" stroke-width="1" stroke-dasharray="4,3"/>
<rect x="1045.5" y="521.5" width="600" height="145" fill="none" stroke="#c8c8c8" stroke-width="1" />
<line x1="1153.5" y1="601.1257570359815" x2="1153.5" y2="626.0634128963306" stroke="#00ff00" stroke-width="1" />
<rect x="1151.5" y="610.5320627003919" width="4" height="2.493765586034897" fill="#000000" stroke="#00ff00" stroke-width="1" />
<line x1="1162.5" y1="597.5632347702174" x2="1162.5" y2="626.0634128963306" stroke="#00ff00" stroke-width="1" />
<rect x="1160.5" y="606.9695404346277" width="4" height="5.343783398646224" fill="#000000" stroke="#00ff00" stroke-width="1" />
<line x1="1171.5" y1="592.219451371571" x2="1171.5" y2="618.9383683648023" stroke="#00ff00" stroke-width="1" />
<rect x="1169.5" y="596.2819736373352" width="4" height="10.687566797292448" fill="#000000" stroke="#00ff00" stroke-width="1" />
<line x1="1180.5" y1="590.438190238689" x2="1180.5" y2="599.3444959030994" stroke="#00ff00" stroke-width="1" />
<rect x="1178.5" y="594.5007125044532" width="4" height="2.493765586034897" fill="#000000" stroke="#00ff00" stroke-width="1" />
<line x1="1189.5" y1="592.219451371571" x2="1189.5" y2="610.0320627003919" stroke="#00ff00" stroke-width="1" />
<rect x="1187.5" y="594.5007125044532" width="4" height="10.687566797292448" fill="#ffffff" stroke="#00ff00" stroke-width="1" />
<line x1="1198.5" y1="594.0007125044532" x2="1198.5" y2="615.3758460990381" stroke="#00ff00" stroke-width="1" />
<rect x="1196.5" y="599.8444959030994" width="4" height="4.631278945493364" fill="#000000" stroke="#00ff00" stroke-width="1" />
<line x1="1207.5" y1="592.219451371571" x2="1207.5" y2="601.1257570359815" stroke="#00ff00" stroke-width="1" />
<rect x="1205.5" y="594.5007125044532" width="4" height="3.562522265764187" fill="#000000" stroke="#00ff00" stroke-width="1" />
<line x1="1215.5" y1="592.219451371571" x2="1215.5" y2="606.4695404346277" stroke="#00ff00" stroke-width="1" />
<rect x="1213.5" y="593.7882080513003" width="4" height="11.400071250445308" fill="#ffffff" stroke="#00ff00" stroke-width="1" />
<line x1="1224.5" y1="601.1257570359815" x2="1224.5" y2="617.1571072319202" stroke="#00ff00" stroke-width="1" />
<rect x="1222.5" y="604.4757748485928" width="4" height="6.056287851799084" fill="#ffffff" stroke="#00ff00" stroke-width="1" />
<line x1="1233.5" y1="599.3444959030994" x2="1233.5" y2="613.594584966156" stroke="#00ff00" stroke-width="1" />
<rect x="1231.5" y="603.4070181688636" width="4" height="8.19380121125755" fill="#000000" stroke="#00ff00" stroke-width="1" />
<line x1="1242.5" y1="597.5632347702174" x2="1242.5" y2="614.6633416458853" stroke="#00ff00" stroke-width="1" />
<rect x="1240.5" y="601.6257570359815" width="4" height="2.850017812611327" fill="#000000" stroke="#00ff00" stroke-width="1" />
<line x1="1251.5" y1="599.3444959030994" x2="1251.5" y2="608.2508015675098" stroke="#00ff00" stroke-width="1" />
<line x1="1249" y1="603.4070181688636" x2="1254" y2="603.4070181688636" stroke="#00ff00" stroke-width="1" />
<line x1="1260.5" y1="601.1257570359815" x2="1260.5" y2="610.0320627003919" stroke="#00ff00" stroke-width="1" />
<rect x="1258.5" y="603.4070181688636" width="4" height="6.056287851799084" fill="#ffffff" stroke="#00ff00" stroke-width="1" />
<line x1="1269.5" y1="590.438190238689" x2="1269.5" y2="611.8133238332739" stroke="#00ff00" stroke-width="1" />
<rect x="1267.5" y="598.0632347702174" width="4" height="11.400071250445308" fill="#000000" stroke="#00ff00" stroke-width="1" />
<line x1="1278.5" y1="588.656929105807" x2="1278.5" y2="602.9070181688636" stroke="#00ff00" stroke-width="1" />
<rect x="1276.5" y="595.2132169576059" width="4" height="2.8500178126114406" fill="#000000" stroke="#00ff00" stroke-width="1" />
<line x1="1287.5" y1="588.656929105807" x2="1287.5" y2="597.5632347702174" stroke="#00ff00" stroke-width="1" />
<rect x="1285.5" y="592.0069469184182" width="4" height="4.275026718917047" fill="#000000" stroke="#00ff00" stroke-width="1" />
<line x1="1296.5" y1="586.8756679729248" x2="1296.5" y2="597.5632347702174" stroke="#00ff00" stroke-width="1" />
<rect x="1294.5" y="592.719451371571" width="4" height="2.493765586034897" fill="#000000" stroke="#00ff00" stroke-width="1" />
<line x1="1305.5" y1="588.656929105807" x2="1305.5" y2="597.5632347702174" stroke="#00ff00" stroke-width="1" />
<rect x="1303.5" y="592.0069469184182" width="4" height="3.562522265764187" fill="#000000" stroke="#00ff00" stroke-width="1" />
<line x1="1313.5" y1="581.5318845742786" x2="1313.5" y2="602.9070181688636" stroke="#00ff00" stroke-width="1" />
<rect x="1311.5" y="592.0069469184182" width="4" height="9.618810117563271" fill="#ffffff" stroke="#00ff00" stroke-width="1" />
<line x1="1322.5" y1="590.438190238689" x2="1322.5" y2="602.9070181688636" stroke="#00ff00" stroke-width="1" />
<rect x="1320.5" y="593.7882080513003" width="4" height="7.837548984681121" fill="#000000" stroke="#00ff00" stroke-width="1" />
<line x1="1331.5" y1="565.5005343783398" x2="1331.5" y2="595.7819736373352" stroke="#00ff00" stroke-width="1" />
<rect x="1329.5" y="573.838083363021" width="4" height="19.95012468827929" fill="#000000" stroke="#00ff00" stroke-width="1" />
<line x1="1340.5" y1="570.8443177769861" x2="1340.5" y2="588.656929105807" stroke="#00ff00" stroke-width="1" />
<rect x="1338.5" y="573.838083363021" width="4" height="12.825080156750914" fill="#ffffff" stroke="#00ff00" stroke-width="1" />
<line x1="1349.5" y1="576.1881011756324" x2="1349.5" y2="601.1257570359815" stroke="#00ff00" stroke-width="1" />
<rect x="1347.5" y="580.2506234413966" width="4" height="6.4125400783754" fill="#000000" stroke="#00ff00" stroke-width="1" />
<line x1="1358.5" y1="554.8129675810474" x2="1358.5" y2="581.5318845742786" stroke="#00ff00" stroke-width="1" />
<rect x="1356.5" y="565.2880299251871" width="4" height="14.962593516209495" fill="#000000" stroke="#00ff00" stroke-width="1" />
<line x1="1367.5" y1="547.6879230495191" x2="1367.5" y2="567.281795511222" stroke="#00ff00" stroke-width="1" />
<rect x="1365.5" y="561.7255076594229" width="4" height="4.2750267189169335" fill="#000000" stroke="#00ff00" stroke-width="1" />
<line x1="1376.5" y1="549.4691841824011" x2="1376.5" y2="574.4068400427502" stroke="#00ff00" stroke-width="1" />
<rect x="1374.5" y="560.6567509796936" width="4" height="8.90630566441041" fill="#ffffff" stroke="#00ff00" stroke-width="1" />
<line x1="1385.5" y1="565.5005343783398" x2="1385.5" y2="586.8756679729248" stroke="#00ff00" stroke-width="1" />
<rect x="1383.5" y="571.3443177769861" width="4" height="6.412540078375514" fill="#ffffff" stroke="#00ff00" stroke-width="1" />
<line x1="1394.5" y1="574.4068400427502" x2="1394.5" y2="591.1506946918419" stroke="#00ff00" stroke-width="1" />
<rect x="1392.5" y="577.7568578553617" width="4" height="8.906305664410297" fill="#ffffff" stroke="#00ff00" stroke-width="1" />
<line x1="1402.5" y1="580.8193801211257" x2="1402.5" y2="615.3758460990381" stroke="#00ff00" stroke-width="1" />
<rect x="1400.5" y="583.1006412540079" width="4" height="25.650160313501942" fill="#ffffff" stroke="#00ff00" stroke-width="1" />
<line x1="1411.5" y1="601.1257570359815" x2="1411.5" y2="615.3758460990381" stroke="#00ff00" stroke-width="1" />
<rect x="1409.5" y="605.1882793017456" width="4" height="4.275026718917047" fill="#000000" stroke="#00ff00" stroke-width="1" />
<line x1="1420.5" y1="592.219451371571" x2="1420.5" y2="610.0320627003919" stroke="#00ff00" stroke-width="1" />
<rect x="1418.5" y="605.1882793017456" width="4" height="2.850017812611327" fill="#000000" stroke="#00ff00" stroke-width="1" />
<line x1="1429.5" y1="592.219451371571" x2="1429.5" y2="613.594584966156" stroke="#00ff00" stroke-width="1" />
<line x1="1427" y1="603.4070181688636" x2="1432" y2="603.4070181688636" stroke="#00ff00" stroke-width="1" />
<line x1="1438.5" y1="601.1257570359815" x2="1438.5" y2="627.8446740292127" stroke="#00ff00" stroke-width="1" />
<rect x="1436.5" y="603.4070181688636" width="4" height="13.181332383327344" fill="#ffffff" stroke="#00ff00" stroke-width="1" />
<line x1="1447.5" y1="601.1257570359815" x2="1447.5" y2="622.5008906305665" stroke="#00ff00" stroke-width="1" />
<rect x="1445.5" y="603.4070181688636" width="4" height="13.181332383327344" fill="#000000" stroke="#00ff00" stroke-width="1" />
<line x1="1456.5" y1="602.9070181688636" x2="1456.5" y2="624.2821517634485" stroke="#00ff00" stroke-width="1" />
<rect x="1454.5" y="606.9695404346277" width="4" height="5.343783398646224" fill="#000000" stroke="#00ff00" stroke-width="1" />
<line x1="1465.5" y1="601.1257570359815" x2="1465.5" y2="613.594584966156" stroke="#00ff00" stroke-width="1" />
<rect x="1463.5" y="604.4757748485928" width="4" height="4.275026718917047" fill="#000000" stroke="#00ff00" stroke-width="1" />
<line x1="1474.5" y1="602.9070181688636" x2="1474.5" y2="633.9009618810118" stroke="#00ff00" stroke-width="1" />
<rect x="1472.5" y="604.4757748485928" width="4" height="29.21268257926613" fill="#ffffff" stroke="#00ff00" stroke-width="1" />
<line x1="1483.5" y1="627.8446740292127" x2="1483.5" y2="654.5635910224439" stroke="#00ff00" stroke-width="1" />
<rect x="1481.5" y="632.9759529747062" width="4" height="21.375133594584895" fill="#ffffff" stroke="#00ff00" stroke-width="1" />
<line x1="1492.5" y1="595.7819736373352" x2="1492.5" y2="658.126113288208" stroke="#00ff00" stroke-width="1" />
<rect x="1490.5" y="608.038297114357" width="4" height="47.02529390808695" fill="#000000" stroke="#00ff00" stroke-width="1" />
<line x1="1500.5" y1="601.1257570359815" x2="1500.5" y2="610.0320627003919" stroke="#00ff00" stroke-width="1" />
<rect x="1498.5" y="604.4757748485928" width="4" height="3.562522265764187" fill="#000000" stroke="#00ff00" stroke-width="1" />
<line x1="1509.5" y1="592.219451371571" x2="1509.5" y2="608.2508015675098" stroke="#00ff00" stroke-width="1" />
<rect x="1507.5" y="599.8444959030994" width="4" height="7.1250445315282604" fill="#000000" stroke="#00ff00" stroke-width="1" />
<line x1="1518.5" y1="592.219451371571" x2="1518.5" y2="604.6882793017456" stroke="#00ff00" stroke-width="1" />
<line x1="1516" y1="600.9132525828286" x2="1521" y2="600.9132525828286" stroke="#00ff00" stroke-width="1" />
<line x1="1527.5" y1="594.0007125044532" x2="1527.5" y2="604.6882793017456" stroke="#00ff00" stroke-width="1" />
<rect x="1525.5" y="602.3382614891343" width="4" height="2.1375133594584668" fill="#000000" stroke="#00ff00" stroke-width="1" />
<line x1="1536.5" y1="602.9070181688636" x2="1536.5" y2="633.1884574278589" stroke="#00ff00" stroke-width="1" />
<rect x="1534.5" y="604.4757748485928" width="4" height="27.431421446384093" fill="#ffffff" stroke="#00ff00" stroke-width="1" />
<line x1="1545.5" y1="620.0071250445316" x2="1545.5" y2="642.0947630922693" stroke="#00ff00" stroke-width="1" />
<rect x="1543.5" y="631.9071962949769" width="4" height="4.2750267189169335" fill="#ffffff" stroke="#00ff00" stroke-width="1" />
<line x1="1554.5" y1="631.4071962949769" x2="1554.5" y2="646.7260420377627" stroke="#00ff00" stroke-width="1" />
<rect x="1552.5" y="635.4697185607411" width="4" height="8.90630566441041" fill="#ffffff" stroke="#00ff00" stroke-width="1" />
<line x1="1563.5" y1="636.7509796936231" x2="1563.5" y2="651.0010687566797" stroke="#00ff00" stroke-width="1" />
<rect x="1561.5" y="642.5947630922693" width="4" height="3.562522265764187" fill="#000000" stroke="#00ff00" stroke-width="1" />
<line x1="1572.5" y1="642.0947630922693" x2="1572.5" y2="665.2511578197364" stroke="#00ff00" stroke-width="1" />
<rect x="1570.5" y="644.3760242251515" width="4" height="16.03135019593867" fill="#ffffff" stroke="#00ff00" stroke-width="1" />
<line x1="1581.5" y1="651.0010687566797" x2="1581.5" y2="675" stroke="#00ff00" stroke-width="1" />
<rect x="1579.5" y="660.4073744210901" width="4" height="15.318845742785925" fill="#ffffff" stroke="#00ff00" stroke-width="1" />
<line x1="1590.5" y1="656.344852155326" x2="1590.5" y2="675" stroke="#00ff00" stroke-width="1" />
<rect x="1588.5" y="660.4073744210901" width="4" height="15.318845742785925" fill="#000000" stroke="#00ff00" stroke-width="1" />
<line x1="1597.5" y1="643.8760242251515" x2="1597.5" y2="675" stroke="#00ff00" stroke-width="1" />
<rect x="1595.5" y="647.2260420377627" width="4" height="11.400071250445308" fill="#000000" stroke="#00ff00" stroke-width="1" />
<path d="M1050,533.5 l3.5,-6 l3.5,6 z" fill="#fff" />
<text transform="translate(1062,533.5) scale(0.93,1)" x="0" y="0" font-size="11" fill="#f0f0f0" font-family="Liberation Sans" >USDJPY,H4</text>
<text transform="translate(1129,533.5) scale(0.915,1)" x="0" y="0" font-size="11" fill="#f0f0f0" font-family="Liberation Sans" >103.450 103.458 103.384 103.416</text>
<rect x="1049" y="538.0" width="49" height="23.5" fill="#4646ee" />
<line x1="1053" y1="561.0" x2="1094" y2="561.0" stroke="#8a8aff" stroke-width="1" />
<text transform="translate(1059,555.0) scale(0.9,1)" x="0" y="0" font-size="12.5" fill="#fff" font-family="Liberation Sans" >SELL</text>
<rect x="1100" y="537.5" width="20" height="19" fill="#e0e0e0" />
<path d="M1105,544.5 h9 l-4.5,5 z" fill="#000" />
<rect x="1120" y="537.5" width="66" height="19" fill="#ffffff" />
<text x="1180" y="551.5" font-size="12" fill="#222" font-family="Liberation Sans" text-anchor="end" >1.00</text>
<rect x="1187" y="537.5" width="18" height="19" fill="#e0e0e0" />
<path d="M1191,549.5 h9 l-4.5,-5 z" fill="#000" />
<rect x="1208" y="538.0" width="49" height="23.5" fill="#4646ee" />
<line x1="1212" y1="561.0" x2="1253" y2="561.0" stroke="#8a8aff" stroke-width="1" />
<text transform="translate(1220,555.0) scale(0.9,1)" x="0" y="0" font-size="12.5" fill="#fff" font-family="Liberation Sans" >BUY</text>
<rect x="1049" y="561.5" width="103" height="30" fill="url(#gBlue2)" />
<rect x="1155" y="561.5" width="102" height="30" fill="url(#gBlue2)" />
<text transform="translate(1062,589.0) scale(1.04,1)" x="0" y="0" font-size="13" fill="#fff" font-family="Liberation Sans" font-weight="bold" >103</text>
<text transform="translate(1094.5,589.3) scale(0.86,1)" x="0" y="0" font-size="38" fill="#fff" font-family="Liberation Sans" stroke="#fff" stroke-width="0.7">41</text>
<text x="1132" y="570.5" font-size="13" fill="#fff" font-family="Liberation Sans" font-weight="bold" >6</text>
<text transform="translate(1168,589.0) scale(1.04,1)" x="0" y="0" font-size="13" fill="#fff" font-family="Liberation Sans" font-weight="bold" >103</text>
<text transform="translate(1199.5,589.3) scale(0.86,1)" x="0" y="0" font-size="38" fill="#fff" font-family="Liberation Sans" stroke="#fff" stroke-width="0.7">44</text>
<text x="1237" y="570.5" font-size="13" fill="#fff" font-family="Liberation Sans" font-weight="bold" >0</text>
<rect x="1598" y="114" width="2" height="562" fill="#e4e4e4" />
<rect x="209" y="674" width="1391" height="26" fill="#e3e3e3" />
<line x1="209" y1="675" x2="1600" y2="675" stroke="#e8e8e8" stroke-width="1.6" />
<line x1="209" y1="677.5" x2="1600" y2="677.5" stroke="#101010" stroke-width="1" />
<rect x="209" y="678" width="1391" height="21" fill="url(#gTabV)" />
<line x1="209" y1="699.5" x2="1600" y2="699.5" stroke="#f4f4f4" stroke-width="1" />
<path d="M213,678 V697.5 H302.5 V678" fill="#fbfbfb" stroke="#404040" stroke-width="1" />
<text transform="translate(226,692.5) scale(0.9,1)" x="0" y="0" font-size="12" fill="#303030" font-family="Liberation Sans" >EURUSD,H4</text>
<text transform="translate(315,692.5) scale(0.9,1)" x="0" y="0" font-size="12" fill="#333" font-family="Liberation Sans" >USDCHF,H4</text>
<line x1="391.5" y1="681" x2="391.5" y2="696" stroke="#333" stroke-width="1" />
<text transform="translate(405,692.5) scale(0.9,1)" x="0" y="0" font-size="12" fill="#333" font-family="Liberation Sans" >GBPUSD,H4</text>
<line x1="481.5" y1="681" x2="481.5" y2="696" stroke="#333" stroke-width="1" />
<text transform="translate(493,692.5) scale(0.9,1)" x="0" y="0" font-size="12" fill="#333" font-family="Liberation Sans" >USDJPY,H4</text>
<line x1="566.5" y1="681" x2="566.5" y2="696" stroke="#333" stroke-width="1" />
<path d="M1563,684 l-4,3.5 l4,3.5 z" fill="#999" />
<path d="M1585,684 l4,3.5 l-4,3.5 z" fill="#999" />
<rect x="0" y="700" width="1600" height="151" fill="#e3e3e3" />
<rect x="2" y="721" width="14" height="127" fill="url(#gPanelHdr)" />
<text transform="translate(12.5,845.5) rotate(-90)" font-size="12" fill="#e8e8e8" font-family="Liberation Sans" textLength="55" lengthAdjust="spacingAndGlyphs">Terminal</text>
<path d="M5,706.5 L10,711.5 M10,706.5 L5,711.5" fill="none" stroke="#222" stroke-width="1.2" />
<rect x="17" y="703" width="1561" height="121" fill="#ffffff" />
<rect x="17" y="703" width="1561" height="19" fill="#e6e6e6" />
<line x1="17" y1="722.5" x2="1578" y2="722.5" stroke="#a0a0a0" stroke-width="1" />
<line x1="17" y1="703.5" x2="1578" y2="703.5" stroke="#a0a0a0" stroke-width="1" />
<line x1="17.5" y1="703" x2="17.5" y2="824" stroke="#a0a0a0" stroke-width="1" />
<line x1="194.5" y1="703" x2="194.5" y2="722" stroke="#a0a0a0" stroke-width="1" />
<text transform="translate(24,718) scale(0.95,1)" x="0" y="0" font-size="12" fill="#303030" font-family="Liberation Sans" >Time</text>
<text transform="translate(201,718) scale(0.95,1)" x="0" y="0" font-size="12" fill="#303030" font-family="Liberation Sans" >Message</text>
<rect x="18" y="724.0" width="1560" height="22.2" fill="#e8e8e8" />
<line x1="194.5" y1="724.0" x2="194.5" y2="746.2" stroke="#c8c8c8" stroke-width="1" />
<circle cx="28" cy="733.5" r="3.5" fill="#9a9a9a" stroke="#707070" stroke-width="0.8"/>
<line x1="18" y1="746.0" x2="1578" y2="746.0" stroke="#d4d4d4" stroke-width="1" />
<text transform="translate(41,740.0) scale(1.04,1)" x="0" y="0" font-size="12" fill="#303030" font-family="Liberation Sans" >2020.12.22 08:10:49.713</text>
<text transform="translate(199,740.0) scale(1.015,1)" x="0" y="0" font-size="12" fill="#303030" font-family="Liberation Sans" >'108602': previous successful authorization performed from 78.155.47.11</text>
<rect x="18" y="746.2" width="1560" height="22.2" fill="#ffffff" />
<line x1="194.5" y1="746.2" x2="194.5" y2="768.4000000000001" stroke="#c8c8c8" stroke-width="1" />
<circle cx="28" cy="755.7" r="3.5" fill="#9a9a9a" stroke="#707070" stroke-width="0.8"/>
<line x1="18" y1="768.2" x2="1578" y2="768.2" stroke="#d4d4d4" stroke-width="1" />
<text transform="translate(41,762.2) scale(1.04,1)" x="0" y="0" font-size="12" fill="#303030" font-family="Liberation Sans" >2020.12.22 08:10:49.582</text>
<text transform="translate(199,762.2) scale(1.015,1)" x="0" y="0" font-size="12" fill="#303030" font-family="Liberation Sans" >'108602': login datacenter on AMarkets-Real through DC6 (ping: 47.61 ms)</text>
<rect x="18" y="768.4" width="1560" height="22.2" fill="#e8e8e8" />
<line x1="194.5" y1="768.4" x2="194.5" y2="790.6" stroke="#c8c8c8" stroke-width="1" />
<circle cx="28" cy="777.9" r="3.5" fill="#9a9a9a" stroke="#707070" stroke-width="0.8"/>
<line x1="18" y1="790.4" x2="1578" y2="790.4" stroke="#d4d4d4" stroke-width="1" />
<text transform="translate(41,784.4) scale(1.04,1)" x="0" y="0" font-size="12" fill="#303030" font-family="Liberation Sans" >2020.12.22 08:10:49.110</text>
<text transform="translate(199,784.4) scale(1.015,1)" x="0" y="0" font-size="12" fill="#303030" font-family="Liberation Sans" >'108602': login on AMarkets-Real through DC6 (ping: 47.61 ms)</text>
<rect x="18" y="790.6" width="1560" height="22.2" fill="#ffffff" />
<line x1="194.5" y1="790.6" x2="194.5" y2="812.8000000000001" stroke="#c8c8c8" stroke-width="1" />
<circle cx="28" cy="800.1" r="3.5" fill="#9a9a9a" stroke="#707070" stroke-width="0.8"/>
<line x1="18" y1="812.6" x2="1578" y2="812.6" stroke="#d4d4d4" stroke-width="1" />
<text transform="translate(41,806.6) scale(1.04,1)" x="0" y="0" font-size="12" fill="#303030" font-family="Liberation Sans" >2020.12.22 08:10:44.139</text>
<text transform="translate(199,806.6) scale(1.015,1)" x="0" y="0" font-size="12" fill="#303030" font-family="Liberation Sans" >Sources recompilation finished (28 compiled in 17491 msec)</text>
<rect x="18" y="812.8" width="1560" height="22.2" fill="#e8e8e8" />
<line x1="194.5" y1="812.8" x2="194.5" y2="835.0" stroke="#c8c8c8" stroke-width="1" />
<circle cx="28" cy="822.3" r="3.5" fill="#9a9a9a" stroke="#707070" stroke-width="0.8"/>
<line x1="18" y1="834.8" x2="1578" y2="834.8" stroke="#d4d4d4" stroke-width="1" />
<text transform="translate(41,828.8) scale(1.04,1)" x="0" y="0" font-size="12" fill="#303030" font-family="Liberation Sans" >2020.12.22 08:10:26.640</text>
<text transform="translate(199,828.8) scale(1.015,1)" x="0" y="0" font-size="12" fill="#303030" font-family="Liberation Sans" >Sources recompilation started</text>
<rect x="17" y="824" width="1561" height="24" fill="#e3e3e3" />
<line x1="17" y1="824.5" x2="1578" y2="824.5" stroke="#606060" stroke-width="1" />
<rect x="1578" y="703" width="16" height="121" fill="#ececec" />
<rect x="1578" y="722" width="16" height="102" fill="#d8d8d8" />
<rect x="1578" y="703" width="17" height="19" fill="#e4e4e4" />
<line x1="1578.5" y1="703" x2="1578.5" y2="722" stroke="#ffffff" stroke-width="1" />
<line x1="1578" y1="703.5" x2="1595" y2="703.5" stroke="#ffffff" stroke-width="1" />
<line x1="1594.5" y1="703" x2="1594.5" y2="722" stroke="#404040" stroke-width="1" />
<line x1="1578" y1="721.5" x2="1595" y2="721.5" stroke="#404040" stroke-width="1" />
<path d="M1582.5,716 l4,-5 l4,5 z" fill="#000" />
<rect x="1578" y="723" width="17" height="32" fill="#e4e4e4" />
<line x1="1578.5" y1="723" x2="1578.5" y2="755" stroke="#ffffff" stroke-width="1" />
<line x1="1578" y1="723.5" x2="1595" y2="723.5" stroke="#ffffff" stroke-width="1" />
<line x1="1594.5" y1="723" x2="1594.5" y2="755" stroke="#404040" stroke-width="1" />
<line x1="1578" y1="754.5" x2="1595" y2="754.5" stroke="#404040" stroke-width="1" />
<rect x="1578" y="806" width="17" height="19" fill="#e4e4e4" />
<line x1="1578.5" y1="806" x2="1578.5" y2="825" stroke="#ffffff" stroke-width="1" />
<line x1="1578" y1="806.5" x2="1595" y2="806.5" stroke="#ffffff" stroke-width="1" />
<line x1="1594.5" y1="806" x2="1594.5" y2="825" stroke="#404040" stroke-width="1" />
<line x1="1578" y1="824.5" x2="1595" y2="824.5" stroke="#404040" stroke-width="1" />
<path d="M1582.5,812 l4,5 l4,-5 z" fill="#000" />
<line x1="1596.5" y1="700" x2="1596.5" y2="848" stroke="#fafafa" stroke-width="1" />
<text transform="translate(31,838) scale(0.97,1)" x="0" y="0" font-size="12" fill="#333" font-family="Liberation Sans" >Trade</text>
<text transform="translate(83,838) scale(0.97,1)" x="0" y="0" font-size="12" fill="#333" font-family="Liberation Sans" >Exposure</text>
<text transform="translate(157,838) scale(0.97,1)" x="0" y="0" font-size="12" fill="#333" font-family="Liberation Sans" >Account History</text>
<text transform="translate(263,838) scale(0.97,1)" x="0" y="0" font-size="12" fill="#333" font-family="Liberation Sans" >News</text>
<text transform="translate(314,838) scale(0.97,1)" x="0" y="0" font-size="12" fill="#333" font-family="Liberation Sans" >Alerts</text>
<text transform="translate(367,838) scale(0.97,1)" x="0" y="0" font-size="12" fill="#333" font-family="Liberation Sans" >Mailbox</text>
<text transform="translate(437,838) scale(0.97,1)" x="0" y="0" font-size="12" fill="#333" font-family="Liberation Sans" >Market</text>
<text transform="translate(496,838) scale(0.97,1)" x="0" y="0" font-size="12" fill="#333" font-family="Liberation Sans" >Signals</text>
<text transform="translate(555,838) scale(0.97,1)" x="0" y="0" font-size="12" fill="#333" font-family="Liberation Sans" >Articles</text>
<text transform="translate(616,838) scale(0.97,1)" x="0" y="0" font-size="12" fill="#333" font-family="Liberation Sans" >Code Base</text>
<text transform="translate(694,838) scale(0.97,1)" x="0" y="0" font-size="12" fill="#333" font-family="Liberation Sans" >Experts</text>
<line x1="73.5" y1="828" x2="73.5" y2="842" stroke="#777" stroke-width="1.3" />
<line x1="146.5" y1="828" x2="146.5" y2="842" stroke="#777" stroke-width="1.3" />
<line x1="252.5" y1="828" x2="252.5" y2="842" stroke="#777" stroke-width="1.3" />
<line x1="303.5" y1="828" x2="303.5" y2="842" stroke="#777" stroke-width="1.3" />
<line x1="357.5" y1="828" x2="357.5" y2="842" stroke="#777" stroke-width="1.3" />
<line x1="427.5" y1="828" x2="427.5" y2="842" stroke="#777" stroke-width="1.3" />
<line x1="486.5" y1="828" x2="486.5" y2="842" stroke="#777" stroke-width="1.3" />
<line x1="545.5" y1="828" x2="545.5" y2="842" stroke="#777" stroke-width="1.3" />
<line x1="605.5" y1="828" x2="605.5" y2="842" stroke="#777" stroke-width="1.3" />
<line x1="685.5" y1="828" x2="685.5" y2="842" stroke="#777" stroke-width="1.3" />
<text x="410" y="842" font-size="9" fill="#e02020" font-family="Liberation Sans" >6</text>
<path d="M749,823 V844.5 H809.5 V823" fill="#fbfbfb" stroke="#404040" stroke-width="1" />
<text transform="translate(760,839) scale(0.92,1)" x="0" y="0" font-size="12" fill="#303030" font-family="Liberation Sans" >Journal</text>
<line x1="0" y1="849.5" x2="1600" y2="849.5" stroke="#b0b0b0" stroke-width="1" />
<rect x="0" y="851" width="1600" height="25" fill="#e3e3e3" />
<line x1="0" y1="851.5" x2="1600" y2="851.5" stroke="#f4f4f4" stroke-width="1" />
<text transform="translate(2,870) scale(0.97,1)" x="0" y="0" font-size="12" fill="#303030" font-family="Liberation Sans" >For Help, press F1</text>
<line x1="846.5" y1="855" x2="846.5" y2="876" stroke="#a0a0a0" stroke-width="1" />
<line x1="847.5" y1="855" x2="847.5" y2="876" stroke="#fafafa" stroke-width="1" />
<line x1="969.5" y1="855" x2="969.5" y2="876" stroke="#a0a0a0" stroke-width="1" />
<line x1="970.5" y1="855" x2="970.5" y2="876" stroke="#fafafa" stroke-width="1" />
<line x1="1080.5" y1="855" x2="1080.5" y2="876" stroke="#a0a0a0" stroke-width="1" />
<line x1="1081.5" y1="855" x2="1081.5" y2="876" stroke="#fafafa" stroke-width="1" />
<line x1="1157.5" y1="855" x2="1157.5" y2="876" stroke="#a0a0a0" stroke-width="1" />
<line x1="1158.5" y1="855" x2="1158.5" y2="876" stroke="#fafafa" stroke-width="1" />
<line x1="1233.5" y1="855" x2="1233.5" y2="876" stroke="#a0a0a0" stroke-width="1" />
<line x1="1234.5" y1="855" x2="1234.5" y2="876" stroke="#fafafa" stroke-width="1" />
<line x1="1310.5" y1="855" x2="1310.5" y2="876" stroke="#a0a0a0" stroke-width="1" />
<line x1="1311.5" y1="855" x2="1311.5" y2="876" stroke="#fafafa" stroke-width="1" />
<line x1="1387.5" y1="855" x2="1387.5" y2="876" stroke="#a0a0a0" stroke-width="1" />
<line x1="1388.5" y1="855" x2="1388.5" y2="876" stroke="#fafafa" stroke-width="1" />
<line x1="1458.5" y1="855" x2="1458.5" y2="876" stroke="#a0a0a0" stroke-width="1" />
<line x1="1459.5" y1="855" x2="1459.5" y2="876" stroke="#fafafa" stroke-width="1" />
<text transform="translate(851,870) scale(0.92,1)" x="0" y="0" font-size="12" fill="#303030" font-family="Liberation Sans" >Default</text>
<line x1="1466.5" y1="858" x2="1466.5" y2="865" stroke="#5a9a20" stroke-width="1.2" />
<line x1="1466.5" y1="865" x2="1466.5" y2="871" stroke="#102070" stroke-width="1.2" />
<line x1="1469.35" y1="858" x2="1469.35" y2="865" stroke="#5a9a20" stroke-width="1.2" />
<line x1="1469.35" y1="865" x2="1469.35" y2="871" stroke="#102070" stroke-width="1.2" />
<line x1="1472.2" y1="858" x2="1472.2" y2="865" stroke="#5a9a20" stroke-width="1.2" />
<line x1="1472.2" y1="865" x2="1472.2" y2="871" stroke="#102070" stroke-width="1.2" />
<line x1="1475.05" y1="858" x2="1475.05" y2="865" stroke="#5a9a20" stroke-width="1.2" />
<line x1="1475.05" y1="865" x2="1475.05" y2="871" stroke="#102070" stroke-width="1.2" />
<line x1="1477.9" y1="858" x2="1477.9" y2="865" stroke="#5a9a20" stroke-width="1.2" />
<line x1="1477.9" y1="865" x2="1477.9" y2="871" stroke="#102070" stroke-width="1.2" />
<line x1="1480.75" y1="858" x2="1480.75" y2="865" stroke="#5a9a20" stroke-width="1.2" />
<line x1="1480.75" y1="865" x2="1480.75" y2="871" stroke="#102070" stroke-width="1.2" />
<line x1="1483.6" y1="858" x2="1483.6" y2="865" stroke="#5a9a20" stroke-width="1.2" />
<line x1="1483.6" y1="865" x2="1483.6" y2="871" stroke="#102070" stroke-width="1.2" />
<line x1="1486.45" y1="858" x2="1486.45" y2="865" stroke="#5a9a20" stroke-width="1.2" />
<line x1="1486.45" y1="865" x2="1486.45" y2="871" stroke="#102070" stroke-width="1.2" />
<line x1="1489.3" y1="858" x2="1489.3" y2="865" stroke="#5a9a20" stroke-width="1.2" />
<line x1="1489.3" y1="865" x2="1489.3" y2="871" stroke="#102070" stroke-width="1.2" />
<path d="M1600,862 L1600,876 L1586,876 Q1600,876 1600,862 Z" fill="#301010" />
<path d="M0,862 L0,876 L14,876 Q0,876 0,862 Z" fill="#301010" />
<text transform="translate(1495,870) scale(0.97,1)" x="0" y="0" font-size="12" fill="#303030" font-family="Liberation Sans" >28/0 kb</text>
<rect x="300" y="250" width="857" height="418" rx="12" fill="#000" opacity="0.5" filter="url(#fShadow)"/>
<path d="M310,240 Q310,230 320,230 L1137,230 Q1147,230 1147,240 L1147,639 Q1147,650 1136,650 L321,650 Q310,650 310,639 Z" fill="#e4e4e4" stroke="#9a9a9a" stroke-width="0.6"/>
<path d="M310,262 L310,240 Q310,230 320,230 L1137,230 Q1147,230 1147,240 L1147,262 Z" fill="#39373a"/>
<path d="M310.5,240 Q310.5,230.5 320,230.5 L1137,230.5 Q1146.5,230.5 1146.5,240" fill="none" stroke="#6c6a6c" stroke-width="1"/>
<circle cx="325.5" cy="245.5" r="6.8" fill="#fd5c55"/>
<circle cx="347.8" cy="245.5" r="6.8" fill="#f6bd2f"/>
<circle cx="369.8" cy="245.5" r="6.8" fill="#5b5b5b"/>
<text x="727" y="250" font-size="14" fill="#b4b4b4" font-family="Liberation Sans" font-weight="bold" text-anchor="middle" >Order</text>
<rect x="319" y="276" width="332" height="364" fill="#ffffff" />
<line x1="319" y1="276.5" x2="651" y2="276.5" stroke="#404040" stroke-width="1" />
<line x1="319.5" y1="276" x2="319.5" y2="640" stroke="#404040" stroke-width="1" />
<line x1="319" y1="639.5" x2="651" y2="639.5" stroke="#f8f8f8" stroke-width="1" />
<line x1="650.5" y1="276" x2="650.5" y2="640" stroke="#f8f8f8" stroke-width="1" />
<line x1="360.9" y1="281" x2="360.9" y2="634" stroke="#c4c4c4" stroke-width="1" stroke-dasharray="3,3"/>
<line x1="396.45" y1="281" x2="396.45" y2="634" stroke="#c4c4c4" stroke-width="1" stroke-dasharray="3,3"/>
<line x1="432.0" y1="281" x2="432.0" y2="634" stroke="#c4c4c4" stroke-width="1" stroke-dasharray="3,3"/>
<line x1="467.54999999999995" y1="281" x2="467.54999999999995" y2="634" stroke="#c4c4c4" stroke-width="1" stroke-dasharray="3,3"/>
<line x1="503.09999999999997" y1="281" x2="503.09999999999997" y2="634" stroke="#c4c4c4" stroke-width="1" stroke-dasharray="3,3"/>
<line x1="538.65" y1="281" x2="538.65" y2="634" stroke="#c4c4c4" stroke-width="1" stroke-dasharray="3,3"/>
<line x1="574.1999999999999" y1="281" x2="574.1999999999999" y2="634" stroke="#c4c4c4" stroke-width="1" stroke-dasharray="3,3"/>
<line x1="324" y1="314.7" x2="602" y2="314.7" stroke="#c4c4c4" stroke-width="1" stroke-dasharray="3,3"/>
<line x1="324" y1="350.25" x2="602" y2="350.25" stroke="#c4c4c4" stroke-width="1" stroke-dasharray="3,3"/>
<line x1="324" y1="385.79999999999995" x2="602" y2="385.79999999999995" stroke="#c4c4c4" stroke-width="1" stroke-dasharray="3,3"/>
<line x1="324" y1="421.34999999999997" x2="602" y2="421.34999999999997" stroke="#c4c4c4" stroke-width="1" stroke-dasharray="3,3"/>
<line x1="324" y1="456.9" x2="602" y2="456.9" stroke="#c4c4c4" stroke-width="1" stroke-dasharray="3,3"/>
<line x1="324" y1="492.45" x2="602" y2="492.45" stroke="#c4c4c4" stroke-width="1" stroke-dasharray="3,3"/>
<line x1="324" y1="528.0" x2="602" y2="528.0" stroke="#c4c4c4" stroke-width="1" stroke-dasharray="3,3"/>
<line x1="324" y1="563.55" x2="602" y2="563.55" stroke="#c4c4c4" stroke-width="1" stroke-dasharray="3,3"/>
<line x1="324" y1="599.0999999999999" x2="602" y2="599.0999999999999" stroke="#c4c4c4" stroke-width="1" stroke-dasharray="3,3"/>
<rect x="323.5" y="280.5" width="278.5" height="354" fill="none" stroke="#000" stroke-width="1" />
<text x="326.5" y="292" font-size="10" fill="#111" font-family="Liberation Sans" >EURUSD</text>
<line x1="602" y1="314.7" x2="605" y2="314.7" stroke="#000" stroke-width="1" />
<text transform="translate(608,318.2) scale(0.95,1)" x="0" y="0" font-size="10.5" fill="#111" font-family="Liberation Sans" >1.22233</text>
<line x1="602" y1="350.2" x2="605" y2="350.2" stroke="#000" stroke-width="1" />
<text transform="translate(608,353.7) scale(0.95,1)" x="0" y="0" font-size="10.5" fill="#111" font-family="Liberation Sans" >1.22228</text>
<line x1="602" y1="385.7" x2="605" y2="385.7" stroke="#000" stroke-width="1" />
<text transform="translate(608,389.2) scale(0.95,1)" x="0" y="0" font-size="10.5" fill="#111" font-family="Liberation Sans" >1.22223</text>
<line x1="602" y1="421.4" x2="605" y2="421.4" stroke="#000" stroke-width="1" />
<text transform="translate(608,424.9) scale(0.95,1)" x="0" y="0" font-size="10.5" fill="#111" font-family="Liberation Sans" >1.22219</text>
<line x1="602" y1="456.8" x2="605" y2="456.8" stroke="#000" stroke-width="1" />
<text transform="translate(608,460.3) scale(0.95,1)" x="0" y="0" font-size="10.5" fill="#111" font-family="Liberation Sans" >1.22214</text>
<line x1="602" y1="492.2" x2="605" y2="492.2" stroke="#000" stroke-width="1" />
<text transform="translate(608,495.7) scale(0.95,1)" x="0" y="0" font-size="10.5" fill="#111" font-family="Liberation Sans" >1.22209</text>
<line x1="602" y1="527.7" x2="605" y2="527.7" stroke="#000" stroke-width="1" />
<text transform="translate(608,531.2) scale(0.95,1)" x="0" y="0" font-size="10.5" fill="#111" font-family="Liberation Sans" >1.22204</text>
<line x1="602" y1="563.7" x2="605" y2="563.7" stroke="#000" stroke-width="1" />
<text transform="translate(608,567.2) scale(0.95,1)" x="0" y="0" font-size="10.5" fill="#111" font-family="Liberation Sans" >1.22199</text>
<line x1="602" y1="599.1" x2="605" y2="599.1" stroke="#000" stroke-width="1" />
<text transform="translate(608,602.6) scale(0.95,1)" x="0" y="0" font-size="10.5" fill="#111" font-family="Liberation Sans" >1.22194</text>
<line x1="602" y1="631.5" x2="605" y2="631.5" stroke="#000" stroke-width="1" />
<text transform="translate(608,635) scale(0.95,1)" x="0" y="0" font-size="10.5" fill="#111" font-family="Liberation Sans" >1.22189</text>
<polyline points="324.2,508.8 330,438.8 330.6,400.4 331.3,311 332.4,316.5 333.7,309.2 335.5,302.8 336.4,309.2 338.2,318.3 340,329.3 341.9,342 344,374.9 347.4,360.3 351,346.6 352.8,356.6 355.6,382.2 358.3,368.5 361,389.5 363.8,387.7 366,411.4 369.3,384 372,404 374.7,395 377.5,353 380.2,376.7 383,389.5 387.5,433.3 390.3,426 393,438.8 397.6,411.4 602,411.4" fill="none" stroke="#ff5a5a" stroke-width="1.1"/>
<polyline points="324.2,613.9 328.4,598 330.2,587.6 331,508.8 331.3,418.7 334.6,417.8 336.4,411.4 338.2,422.3 340.4,438.8 342,445.8 344.7,477.3 351.2,447 355.2,490.4 359,469.4 363,490.4 365.7,511.4 367.8,490.4 369.6,490.4 371.4,511.4 377.5,455 381.4,485.2 388,540.3 390.6,527.2 393.2,541.6 397.2,527.2 602,527.2" fill="none" stroke="#3a5aff" stroke-width="1.1"/>
<rect x="605" y="405" width="43" height="13" fill="#f86060" />
<text transform="translate(607,415.5) scale(0.95,1)" x="0" y="0" font-size="10.5" fill="#ffffff" font-family="Liberation Sans" >1.22220</text>
<rect x="605" y="521" width="43" height="13" fill="#1a5cf0" />
<text transform="translate(607,531.5) scale(0.95,1)" x="0" y="0" font-size="10.5" fill="#ffffff" font-family="Liberation Sans" >1.22204</text>
<text transform="translate(759,292) scale(0.97,1)" x="0" y="0" font-size="12" fill="#303030" font-family="Liberation Sans" text-anchor="end" >Symbol:</text>
<text transform="translate(759,320) scale(0.97,1)" x="0" y="0" font-size="12" fill="#303030" font-family="Liberation Sans" text-anchor="end" >Volume:</text>
<text transform="translate(759,349) scale(0.97,1)" x="0" y="0" font-size="12" fill="#303030" font-family="Liberation Sans" text-anchor="end" >Stop Loss:</text>
<text transform="translate(759,378) scale(0.97,1)" x="0" y="0" font-size="12" fill="#303030" font-family="Liberation Sans" text-anchor="end" >Comment:</text>
<text transform="translate(759,407) scale(0.97,1)" x="0" y="0" font-size="12" fill="#303030" font-family="Liberation Sans" text-anchor="end" >Type:</text>
<text transform="translate(998,349) scale(0.97,1)" x="0" y="0" font-size="12" fill="#303030" font-family="Liberation Sans" text-anchor="end" >Take Profit:</text>
<rect x="769" y="276" width="357" height="21" fill="#ffffff" />
<line x1="769" y1="276.5" x2="1126" y2="276.5" stroke="#808080" stroke-width="1" />
<line x1="769.5" y1="276" x2="769.5" y2="297" stroke="#808080" stroke-width="1" />
<line x1="770" y1="277.5" x2="1125" y2="277.5" stroke="#404040" stroke-width="1" />
<line x1="770.5" y1="277" x2="770.5" y2="296" stroke="#404040" stroke-width="1" />
<line x1="769" y1="296.5" x2="1126" y2="296.5" stroke="#ffffff" stroke-width="1" />
<line x1="1125.5" y1="276" x2="1125.5" y2="297" stroke="#ffffff" stroke-width="1" />
<line x1="770" y1="295.5" x2="1125" y2="295.5" stroke="#e0e0e0" stroke-width="1" />
<line x1="1124.5" y1="277" x2="1124.5" y2="296" stroke="#e0e0e0" stroke-width="1" />
<rect x="771" y="278" width="335" height="17" fill="#0a1f6a" />
<rect x="771.5" y="278.5" width="335" height="16" fill="none" stroke="#d8c890" stroke-width="1" stroke-dasharray="1,1"/>
<text transform="translate(773,292) scale(0.935,1)" x="0" y="0" font-size="12" fill="#ffffff" font-family="Liberation Sans" >EURUSD, Euro vs US Dollar</text>
<rect x="1107" y="278" width="17" height="17" fill="#e4e4e4" />
<line x1="1123.5" y1="278" x2="1123.5" y2="295" stroke="#404040" stroke-width="1" />
<line x1="1107" y1="294.5" x2="1124" y2="294.5" stroke="#404040" stroke-width="1" />
<line x1="1107.5" y1="278" x2="1107.5" y2="295" stroke="#ffffff" stroke-width="1" />
<line x1="1107" y1="278.5" x2="1124" y2="278.5" stroke="#ffffff" stroke-width="1" />
<path d="M1111.5,284.5 h8 l-4,4.5 z" fill="#000" />
<rect x="769" y="305" width="115" height="21" fill="#ffffff" />
<line x1="769" y1="305.5" x2="884" y2="305.5" stroke="#808080" stroke-width="1" />
<line x1="769.5" y1="305" x2="769.5" y2="326" stroke="#808080" stroke-width="1" />
<line x1="770" y1="306.5" x2="883" y2="306.5" stroke="#404040" stroke-width="1" />
<line x1="770.5" y1="306" x2="770.5" y2="325" stroke="#404040" stroke-width="1" />
<line x1="769" y1="325.5" x2="884" y2="325.5" stroke="#ffffff" stroke-width="1" />
<line x1="883.5" y1="305" x2="883.5" y2="326" stroke="#ffffff" stroke-width="1" />
<line x1="770" y1="324.5" x2="883" y2="324.5" stroke="#e0e0e0" stroke-width="1" />
<line x1="882.5" y1="306" x2="882.5" y2="325" stroke="#e0e0e0" stroke-width="1" />
<text transform="translate(775,320) scale(0.95,1)" x="0" y="0" font-size="12" fill="#303030" font-family="Liberation Sans" >1.00</text>
<rect x="865" y="307" width="17" height="17" fill="#e4e4e4" />
<line x1="881.5" y1="307" x2="881.5" y2="324" stroke="#404040" stroke-width="1" />
<line x1="865" y1="323.5" x2="882" y2="323.5" stroke="#404040" stroke-width="1" />
<line x1="865.5" y1="307" x2="865.5" y2="324" stroke="#ffffff" stroke-width="1" />
<line x1="865" y1="307.5" x2="882" y2="307.5" stroke="#ffffff" stroke-width="1" />
<path d="M869.5,313.5 h8 l-4,4.5 z" fill="#000" />
<rect x="769" y="334" width="114" height="21" fill="#ffffff" />
<line x1="769" y1="334.5" x2="883" y2="334.5" stroke="#808080" stroke-width="1" />
<line x1="769.5" y1="334" x2="769.5" y2="355" stroke="#808080" stroke-width="1" />
<line x1="770" y1="335.5" x2="882" y2="335.5" stroke="#404040" stroke-width="1" />
<line x1="770.5" y1="335" x2="770.5" y2="354" stroke="#404040" stroke-width="1" />
<line x1="769" y1="354.5" x2="883" y2="354.5" stroke="#ffffff" stroke-width="1" />
<line x1="882.5" y1="334" x2="882.5" y2="355" stroke="#ffffff" stroke-width="1" />
<line x1="770" y1="353.5" x2="882" y2="353.5" stroke="#e0e0e0" stroke-width="1" />
<line x1="881.5" y1="335" x2="881.5" y2="354" stroke="#e0e0e0" stroke-width="1" />
<text transform="translate(861,349) scale(0.95,1)" x="0" y="0" font-size="12" fill="#303030" font-family="Liberation Sans" text-anchor="end" >0.00000</text>
<rect x="866" y="336" width="15" height="17" fill="#e4e4e4" stroke="#888" stroke-width="0.5" />
<line x1="866" y1="344.5" x2="881" y2="344.5" stroke="#666" stroke-width="1" />
<path d="M870,342 l3.5,-3.5 l3.5,3.5 z" fill="#000" />
<path d="M870,347 l3.5,3.5 l3.5,-3.5 z" fill="#000" />
<rect x="1010" y="334" width="114" height="21" fill="#ffffff" />
<line x1="1010" y1="334.5" x2="1124" y2="334.5" stroke="#808080" stroke-width="1" />
<line x1="1010.5" y1="334" x2="1010.5" y2="355" stroke="#808080" stroke-width="1" />
<line x1="1011" y1="335.5" x2="1123" y2="335.5" stroke="#404040" stroke-width="1" />
<line x1="1011.5" y1="335" x2="1011.5" y2="354" stroke="#404040" stroke-width="1" />
<line x1="1010" y1="354.5" x2="1124" y2="354.5" stroke="#ffffff" stroke-width="1" />
<line x1="1123.5" y1="334" x2="1123.5" y2="355" stroke="#ffffff" stroke-width="1" />
<line x1="1011" y1="353.5" x2="1123" y2="353.5" stroke="#e0e0e0" stroke-width="1" />
<line x1="1122.5" y1="335" x2="1122.5" y2="354" stroke="#e0e0e0" stroke-width="1" />
<text transform="translate(1102,349) scale(0.95,1)" x="0" y="0" font-size="12" fill="#303030" font-family="Liberation Sans" text-anchor="end" >0.00000</text>
<rect x="1107" y="336" width="15" height="17" fill="#e4e4e4" stroke="#888" stroke-width="0.5" />
<line x1="1107" y1="344.5" x2="1122" y2="344.5" stroke="#666" stroke-width="1" />
<path d="M1111,342 l3.5,-3.5 l3.5,3.5 z" fill="#000" />
<path d="M1111,347 l3.5,3.5 l3.5,-3.5 z" fill="#000" />
<rect x="769" y="363" width="357" height="21" fill="#ffffff" />
<line x1="769" y1="363.5" x2="1126" y2="363.5" stroke="#808080" stroke-width="1" />
<line x1="769.5" y1="363" x2="769.5" y2="384" stroke="#808080" stroke-width="1" />
<line x1="770" y1="364.5" x2="1125" y2="364.5" stroke="#404040" stroke-width="1" />
<line x1="770.5" y1="364" x2="770.5" y2="383" stroke="#404040" stroke-width="1" />
<line x1="769" y1="383.5" x2="1126" y2="383.5" stroke="#ffffff" stroke-width="1" />
<line x1="1125.5" y1="363" x2="1125.5" y2="384" stroke="#ffffff" stroke-width="1" />
<line x1="770" y1="382.5" x2="1125" y2="382.5" stroke="#e0e0e0" stroke-width="1" />
<line x1="1124.5" y1="364" x2="1124.5" y2="383" stroke="#e0e0e0" stroke-width="1" />
<rect x="769" y="392" width="357" height="21" fill="#ffffff" />
<line x1="769" y1="392.5" x2="1126" y2="392.5" stroke="#808080" stroke-width="1" />
<line x1="769.5" y1="392" x2="769.5" y2="413" stroke="#808080" stroke-width="1" />
<line x1="770" y1="393.5" x2="1125" y2="393.5" stroke="#404040" stroke-width="1" />
<line x1="770.5" y1="393" x2="770.5" y2="412" stroke="#404040" stroke-width="1" />
<line x1="769" y1="412.5" x2="1126" y2="412.5" stroke="#ffffff" stroke-width="1" />
<line x1="1125.5" y1="392" x2="1125.5" y2="413" stroke="#ffffff" stroke-width="1" />
<line x1="770" y1="411.5" x2="1125" y2="411.5" stroke="#e0e0e0" stroke-width="1" />
<line x1="1124.5" y1="393" x2="1124.5" y2="412" stroke="#e0e0e0" stroke-width="1" />
<text transform="translate(773,407) scale(1.03,1)" x="0" y="0" font-size="12" fill="#303030" font-family="Liberation Sans" >Instant Execution</text>
<rect x="1107" y="394" width="17" height="17" fill="#e4e4e4" />
<line x1="1123.5" y1="394" x2="1123.5" y2="411" stroke="#404040" stroke-width="1" />
<line x1="1107" y1="410.5" x2="1124" y2="410.5" stroke="#404040" stroke-width="1" />
<line x1="1107.5" y1="394" x2="1107.5" y2="411" stroke="#ffffff" stroke-width="1" />
<line x1="1107" y1="394.5" x2="1124" y2="394.5" stroke="#ffffff" stroke-width="1" />
<path d="M1111.5,400.5 h8 l-4,4.5 z" fill="#000" />
<rect x="660.5" y="430.5" width="473" height="208" fill="none" stroke="#8a8a8a" stroke-width="1"/>
<rect x="661.5" y="431.5" width="473" height="208" fill="none" stroke="#ffffff" stroke-width="1" opacity="0.8"/>
<rect x="664" y="424" width="104" height="14" fill="#e4e4e4" />
<text transform="translate(668,435) scale(1.03,1)" x="0" y="0" font-size="12" fill="#303030" font-family="Liberation Sans" >Instant Execution</text>
<text transform="translate(785,483.5) scale(0.97,1)" x="0" y="0" font-size="27" fill="#303030" font-family="Liberation Sans" >1.2220</text>
<text transform="translate(868,483.5) scale(0.92,1)" x="0" y="0" font-size="21" fill="#303030" font-family="Liberation Sans" >4</text>
<text x="891" y="484" font-size="27" fill="#3a3a3a" font-family="Liberation Sans" >/</text>
<text transform="translate(914,483.5) scale(0.97,1)" x="0" y="0" font-size="27" fill="#303030" font-family="Liberation Sans" >1.2222</text>
<text transform="translate(996,483.5) scale(0.92,1)" x="0" y="0" font-size="21" fill="#303030" font-family="Liberation Sans" >0</text>
<rect x="677" y="505" width="208" height="25" fill="#fc7f7f" />
<line x1="677" y1="529.5" x2="885" y2="529.5" stroke="#c04040" stroke-width="1" />
<line x1="884.5" y1="505" x2="884.5" y2="530" stroke="#c04040" stroke-width="1" />
<text transform="translate(781,522) scale(0.95,1)" x="0" y="0" font-size="12" fill="#303030" font-family="Liberation Sans" text-anchor="middle" >Sell</text>
<rect x="910" y="505" width="208" height="25" fill="#a0c0fc" />
<line x1="910" y1="529.5" x2="1118" y2="529.5" stroke="#4070c0" stroke-width="1" />
<line x1="1117.5" y1="505" x2="1117.5" y2="530" stroke="#4070c0" stroke-width="1" />
<text transform="translate(1012,522) scale(0.95,1)" x="0" y="0" font-size="12" fill="#303030" font-family="Liberation Sans" text-anchor="middle" >Buy</text>
<rect x="677" y="537" width="441" height="25" fill="#f2f0c0" />
<line x1="677" y1="561.5" x2="1118" y2="561.5" stroke="#505050" stroke-width="1" />
<line x1="1117.5" y1="537" x2="1117.5" y2="562" stroke="#505050" stroke-width="1" />
<line x1="677" y1="537.5" x2="1118" y2="537.5" stroke="#ffffff" stroke-width="1" />
<line x1="677.5" y1="537" x2="677.5" y2="562" stroke="#ffffff" stroke-width="1" />
<rect x="677" y="578" width="14" height="14" fill="#ffffff" />
<line x1="677" y1="578.5" x2="691" y2="578.5" stroke="#808080" stroke-width="1" />
<line x1="677.5" y1="578" x2="677.5" y2="592" stroke="#808080" stroke-width="1" />
<line x1="678" y1="579.5" x2="690" y2="579.5" stroke="#404040" stroke-width="1" />
<line x1="678.5" y1="579" x2="678.5" y2="591" stroke="#404040" stroke-width="1" />
<line x1="677" y1="591.5" x2="691" y2="591.5" stroke="#ffffff" stroke-width="1" />
<line x1="690.5" y1="578" x2="690.5" y2="592" stroke="#ffffff" stroke-width="1" />
<line x1="678" y1="590.5" x2="690" y2="590.5" stroke="#e0e0e0" stroke-width="1" />
<line x1="689.5" y1="579" x2="689.5" y2="591" stroke="#e0e0e0" stroke-width="1" />
<text transform="translate(695,590) scale(0.99,1)" x="0" y="0" font-size="12" fill="#303030" font-family="Liberation Sans" >Enable maximum deviation from quoted price</text>
<text transform="translate(900,620) scale(0.986,1)" x="0" y="0" font-size="12" fill="#303030" font-family="Liberation Sans" text-anchor="end" >Maximum deviation:</text>
<rect x="913" y="604" width="65" height="23" fill="#e8e8e8" />
<line x1="913" y1="604.5" x2="978" y2="604.5" stroke="#808080" stroke-width="1" />
<line x1="913.5" y1="604" x2="913.5" y2="627" stroke="#808080" stroke-width="1" />
<line x1="914" y1="605.5" x2="977" y2="605.5" stroke="#404040" stroke-width="1" />
<line x1="914.5" y1="605" x2="914.5" y2="626" stroke="#404040" stroke-width="1" />
<line x1="913" y1="626.5" x2="978" y2="626.5" stroke="#ffffff" stroke-width="1" />
<line x1="977.5" y1="604" x2="977.5" y2="627" stroke="#ffffff" stroke-width="1" />
<line x1="914" y1="625.5" x2="977" y2="625.5" stroke="#e0e0e0" stroke-width="1" />
<line x1="976.5" y1="605" x2="976.5" y2="626" stroke="#e0e0e0" stroke-width="1" />
<text x="918" y="620" font-size="12" fill="#a0a0a0" font-family="Liberation Sans" >0</text>
<rect x="960" y="606" width="16" height="19" fill="#e4e4e4" />
<line x1="975.5" y1="606" x2="975.5" y2="625" stroke="#404040" stroke-width="1" />
<line x1="960" y1="624.5" x2="976" y2="624.5" stroke="#404040" stroke-width="1" />
<line x1="960.5" y1="606" x2="960.5" y2="625" stroke="#ffffff" stroke-width="1" />
<line x1="960" y1="606.5" x2="976" y2="606.5" stroke="#ffffff" stroke-width="1" />
<path d="M964.0,613.5 h8 l-4,4.5 z" fill="#000" />
<text transform="translate(985,620) scale(0.93,1)" x="0" y="0" font-size="12" fill="#303030" font-family="Liberation Sans" >pips</text></svg></body></html>
